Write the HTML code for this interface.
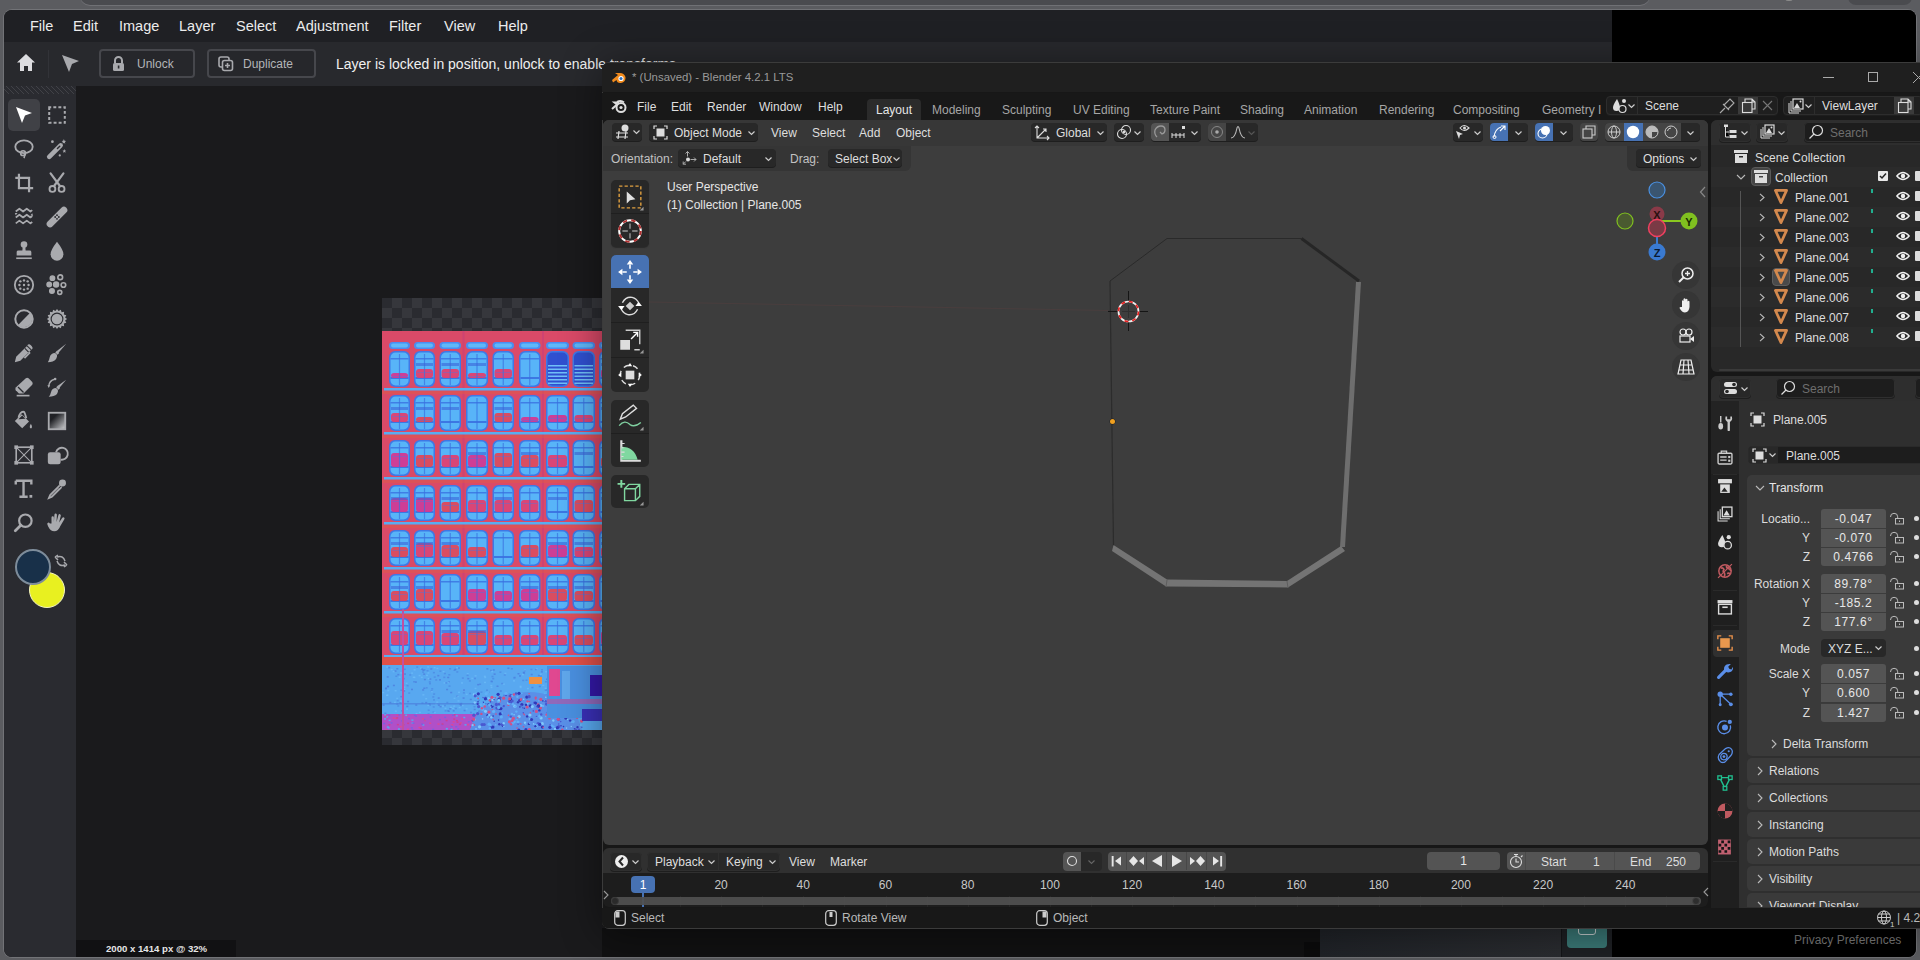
<!DOCTYPE html><html><head><meta charset="utf-8"><style>
*{margin:0;padding:0;box-sizing:border-box}
html,body{width:1920px;height:960px;overflow:hidden;background:#5b5c60;font-family:"Liberation Sans",sans-serif;}
.a{position:absolute}
.t{position:absolute;white-space:nowrap;line-height:1}
svg{position:absolute;overflow:visible}
#tab{left:80px;top:-10px;width:1570px;height:15px;background:#4a4b4f;border-radius:0 0 10px 10px;box-shadow:0 1px 0 #707175}
#tab2{left:1848px;top:-10px;width:64px;height:15px;background:#4a4b4f;border-radius:0 0 8px 8px}
#win{left:4px;top:10px;width:1912px;height:947px;background:#1a1a1c;border-radius:8px;overflow:hidden;box-shadow:0 0 0 1px #727377}
.mb{position:absolute;top:8.5px;font-size:14.5px;color:#ececec;line-height:1;letter-spacing:0}
.tb{position:absolute;border:2px solid #46474c;border-radius:4px;background:#26272b}
.ic{fill:#a8a9ad;stroke:none}
.is{fill:none;stroke:#a8a9ad;stroke-width:2}
.bt{font-size:12px;color:#dedede}
.btn{position:absolute;background:#282828;border-radius:4px;box-shadow:0 1px 0 #1e1e1e}
.chev{position:absolute}
.wt{position:absolute;top:103.5px;font-size:12px;color:#a6a6a6;white-space:nowrap;line-height:1}
.ol{position:absolute;font-size:12px;color:#dcdcdc;white-space:nowrap;line-height:1}
.pl{position:absolute;font-size:12px;color:#dcdcdc;white-space:nowrap;line-height:1}
.nf{position:absolute;background:#545454;border-radius:3px;font-size:12px;color:#e8e8e8;text-align:center;line-height:19px;height:19px}
.tn{position:absolute;top:879px;font-size:12px;color:#c8c8c8;white-space:nowrap;line-height:1}
</style></head><body>
<div id="tab" class="a"></div>
<div id="tab2" class="a"></div>
<div class="a" style="left:1785px;top:-5px;width:8px;height:6px;border-radius:4px;background:#8a8a8a"></div>
<div id="win" class="a">
  <div class="a" style="left:0;top:0;width:1912px;height:32px;background:#1f2024"></div>
  <span class="mb" style="left:26px">File</span>
  <span class="mb" style="left:69px">Edit</span>
  <span class="mb" style="left:115px">Image</span>
  <span class="mb" style="left:175px">Layer</span>
  <span class="mb" style="left:232px">Select</span>
  <span class="mb" style="left:292px">Adjustment</span>
  <span class="mb" style="left:385px">Filter</span>
  <span class="mb" style="left:440px">View</span>
  <span class="mb" style="left:494px">Help</span>
  <div class="a" style="left:0;top:32px;width:1608px;height:44px;background:#28292d"></div>
  <div class="a" style="left:0;top:76px;width:72px;height:871px;background:#2a2b30"></div>
  <div class="a" style="left:0;top:76px;width:72px;height:8px;background:repeating-linear-gradient(45deg,#2a2b30 0 2.85px,#414247 2.85px 3.54px)"></div>
  <div class="a" style="left:72px;top:76px;width:1536px;height:871px;background:#1a1a1c"></div>
  <div class="a" style="left:1608px;top:0;width:304px;height:52px;background:#000"></div>
  <div class="a" style="left:44px;top:40px;width:1px;height:28px;background:#323338"></div>
</div>
<!-- toolbar content in page coords -->
<svg style="left:0;top:0" width="1" height="1"></svg>
<svg style="left:17px;top:54px" width="18" height="18" viewBox="0 0 18 18"><path d="M9 0 L18 8.5 H15 V17 H11 V12 H7 V17 H3 V8.5 H0 Z" fill="#dcdcdf"/></svg>
<svg style="left:62px;top:55px" width="18" height="18" viewBox="0 0 18 18"><path d="M0 0 L17 6 L10 9 L7 17 Z" fill="#a8a9ad"/></svg>
<div class="tb" style="left:99px;top:49px;width:96px;height:29px"></div>
<svg style="left:112px;top:56px" width="13" height="15" viewBox="0 0 13 15"><path d="M3 7 V4.5 A3.5 3.5 0 0 1 10 4.5 V7" fill="none" stroke="#a8a9ad" stroke-width="2"/><rect x="1" y="7" width="11" height="8" rx="1.5" fill="#a8a9ad"/><rect x="5.8" y="9.5" width="1.6" height="3" fill="#28292d"/></svg>
<span class="t" style="left:137px;top:58px;font-size:12px;color:#b4b5b8">Unlock</span>
<div class="tb" style="left:207px;top:49px;width:109px;height:29px"></div>
<svg style="left:218px;top:56px" width="16" height="16" viewBox="0 0 16 16"><rect x="1" y="1" width="10" height="10" rx="2" fill="none" stroke="#a8a9ad" stroke-width="1.6"/><rect x="4.5" y="4.5" width="10" height="10" rx="2" fill="#28292d" stroke="#a8a9ad" stroke-width="1.6"/><path d="M9.5 7 V12 M7 9.5 H12" stroke="#a8a9ad" stroke-width="1.6"/></svg>
<span class="t" style="left:243px;top:58px;font-size:12px;color:#b4b5b8">Duplicate</span>
<span class="t" style="left:336px;top:57px;font-size:14px;color:#f0f0f0">Layer is locked in position, unlock to enable transforms</span>
<!-- tool panel -->
<div class="a" style="left:8px;top:99px;width:32px;height:32px;border-radius:5px;background:#404146"></div>
<svg style="left:15px;top:106px" width="18" height="18" viewBox="0 0 18 18"><path d="M1 1 L17 7 L10 9.5 L7 17 Z" fill="#ffffff"/></svg>
<!-- colors -->
<div class="a" style="left:29px;top:572px;width:36px;height:36px;border-radius:18px;background:#e8f020;border:1.5px solid #f4f4c0"></div>
<div class="a" style="left:15px;top:549px;width:36px;height:36px;border-radius:18px;background:#183049;border:2px solid #7d8c9a"></div>
<svg style="left:54px;top:553px" width="14" height="16" viewBox="0 0 14 16"><path d="M3 4 Q9 2 11 8 M1 4 L4 2 M1 4 L4 7 M11 12 Q5 14 3 8 M13 12 L10 14 M13 12 L10 9" fill="none" stroke="#a8a9ad" stroke-width="1.5"/></svg>
<!-- status -->
<div class="a" style="left:76px;top:940px;width:160px;height:17px;background:#111113"></div>
<span class="t" style="left:106px;top:944px;font-size:9.6px;color:#e6e6e6;font-weight:bold">2000 x 1414 px @ 32%</span>
<!-- image -->
<div id="img" class="a" style="left:382px;top:298px;width:230px;height:447px;overflow:hidden;background-color:#2a2b30;background-image:linear-gradient(45deg,#36373c 25%,transparent 25%,transparent 75%,#36373c 75%),linear-gradient(45deg,#36373c 25%,transparent 25%,transparent 75%,#36373c 75%);background-size:20px 20px;background-position:0 0,10px 10px"></div>
<!-- bottom below blender -->
<div class="a" style="left:602px;top:928px;width:718px;height:29px;background:#111112"></div>
<div class="a" style="left:1304px;top:942px;width:16px;height:15px;background:#0b0b0c"></div>
<div class="a" style="left:1320px;top:928px;width:241px;height:29px;background:linear-gradient(90deg,#202328,#2a2c30)"></div>
<div class="a" style="left:1561px;top:928px;width:51px;height:29px;background:#1e2024"></div>
<div class="a" style="left:1567px;top:920px;width:40px;height:28px;border-radius:4px;background:#3a7876"></div>
<div class="a" style="left:1578px;top:922px;width:18px;height:13px;border-radius:3px;border:1.5px solid #c8d0d0"></div>
<div class="a" style="left:1561px;top:928px;width:1px;height:29px;background:#141518"></div>
<div class="a" style="left:1612px;top:928px;width:304px;height:29px;background:#000;border-radius:0 0 8px 0"></div>
<span class="t" style="left:1794px;top:934px;font-size:12px;color:#7a7a7a">Privacy Preferences</span>

<svg style="left:46px;top:104px" width="22" height="22" viewBox="0 0 24 24"><rect x="3.5" y="3.5" width="17" height="17" fill="none" stroke="#a9aaae" stroke-width="2.2" stroke-dasharray="3.2 2.3" stroke-dashoffset="1"/></svg>
<svg style="left:13px;top:138px" width="22" height="22" viewBox="0 0 24 24"><ellipse cx="12" cy="9.5" rx="9.5" ry="7" fill="none" stroke="#a9aaae" stroke-width="2"/><circle cx="11" cy="16.5" r="2.6" fill="none" stroke="#a9aaae" stroke-width="1.8"/><path d="M12.5 17 Q13 20 12 22" stroke="#a9aaae" stroke-width="1.8" fill="none"/></svg>
<svg style="left:46px;top:138px" width="22" height="22" viewBox="0 0 24 24"><path d="M3.5 20.5 L16 8" stroke="#a9aaae" stroke-width="5" stroke-linecap="round"/><path d="M12.5 11.5 L15 9" stroke="#2a2b30" stroke-width="1.6" stroke-linecap="round"/><path d="M19.5 1 L20.2 3 L22 3.2 L20.6 4.3 L21 6.2 L19.5 5.2 L18 6.2 L18.4 4.3 L17 3.2 L18.8 3Z" fill="#a9aaae"/><path d="M20 12 L20.6 13.5 L22 13.6 L21 14.5 L21.3 16 L20 15.2 L18.7 16 L19 14.5 L18 13.6 L19.4 13.5Z" fill="#a9aaae"/><circle cx="7" cy="4" r="1.5" fill="#a9aaae"/><circle cx="15" cy="19" r="1.2" fill="#a9aaae"/></svg>
<svg style="left:13px;top:172px" width="22" height="22" viewBox="0 0 24 24"><path d="M6.5 2 V17.5 H22 M2.5 6.5 H17.5 V22" fill="none" stroke="#a9aaae" stroke-width="2.4"/></svg>
<svg style="left:46px;top:172px" width="22" height="22" viewBox="0 0 24 24"><path d="M5 1.5 L15 15 M19 1.5 L9 15" stroke="#a9aaae" stroke-width="2.4" stroke-linecap="round"/><circle cx="7" cy="18.5" r="3.2" fill="none" stroke="#a9aaae" stroke-width="2"/><circle cx="17" cy="18.5" r="3.2" fill="none" stroke="#a9aaae" stroke-width="2"/></svg>
<svg style="left:13px;top:206px" width="22" height="22" viewBox="0 0 24 24"><path d="M3 6 L7 3 L11 6 L15 3 L19 6 L21 4.5 M3 12.5 L7 9.5 L11 12.5 L15 9.5 L19 12.5 L21 11 M3 19 L7 16 L11 19 L15 16 L19 19 L21 17.5" fill="none" stroke="#a9aaae" stroke-width="1.9" stroke-linejoin="round"/><path d="M2 7.5 L5 7.5 L3 10Z M22 11 L19 10 L21 8Z" fill="#a9aaae"/></svg>
<svg style="left:46px;top:206px" width="22" height="22" viewBox="0 0 24 24"><path d="M4.5 19.5 L19.5 4.5" stroke="#a9aaae" stroke-width="7.5" stroke-linecap="round"/><circle cx="10" cy="12" r="1" fill="#2a2b30"/><circle cx="12" cy="10" r="1" fill="#2a2b30"/><circle cx="14" cy="12" r="1" fill="#2a2b30"/><circle cx="12" cy="14" r="1" fill="#2a2b30"/></svg>
<svg style="left:13px;top:240px" width="22" height="22" viewBox="0 0 24 24"><circle cx="12" cy="5" r="3.6" fill="#a9aaae"/><path d="M10.5 7 H13.5 L13.8 12 H10.2Z" fill="#a9aaae"/><path d="M4 13 Q4 11.5 6 11.5 H18 Q20 11.5 20 13 V17 H4Z" fill="#a9aaae"/><rect x="3.5" y="19" width="17" height="1.8" fill="#a9aaae"/></svg>
<svg style="left:46px;top:240px" width="22" height="22" viewBox="0 0 24 24"><path d="M12 2 Q19 11 19 15.5 A7 7 0 0 1 5 15.5 Q5 11 12 2Z" fill="#a9aaae"/></svg>
<svg style="left:13px;top:274px" width="22" height="22" viewBox="0 0 24 24"><circle cx="12" cy="12" r="10" fill="none" stroke="#a9aaae" stroke-width="2"/><circle cx="8" cy="8" r="1.3" fill="#a9aaae"/><circle cx="12" cy="7" r="1.3" fill="#a9aaae"/><circle cx="16" cy="8" r="1.3" fill="#a9aaae"/><circle cx="7" cy="12" r="1.3" fill="#a9aaae"/><circle cx="12" cy="12" r="1.3" fill="#a9aaae"/><circle cx="17" cy="12" r="1.3" fill="#a9aaae"/><circle cx="8" cy="16" r="1.3" fill="#a9aaae"/><circle cx="12" cy="17" r="1.3" fill="#a9aaae"/><circle cx="16" cy="16" r="1.3" fill="#a9aaae"/></svg>
<svg style="left:46px;top:274px" width="22" height="22" viewBox="0 0 24 24"><circle cx="7" cy="4.5" r="2.3" fill="#a9aaae" stroke="#a9aaae" stroke-width="1.8"/><circle cx="15.5" cy="3.5" r="2.6" fill="none" stroke="#a9aaae" stroke-width="1.8"/><circle cx="3.5" cy="11.5" r="2.3" fill="#a9aaae" stroke="#a9aaae" stroke-width="1.8"/><circle cx="11" cy="11.5" r="2.6" fill="#a9aaae" stroke="#a9aaae" stroke-width="1.8"/><circle cx="19" cy="12" r="2.5" fill="none" stroke="#a9aaae" stroke-width="1.8"/><circle cx="6.5" cy="18.5" r="2.4" fill="#a9aaae" stroke="#a9aaae" stroke-width="1.8"/><circle cx="15" cy="20" r="2.2" fill="none" stroke="#a9aaae" stroke-width="1.8"/></svg>
<svg style="left:13px;top:308px" width="22" height="22" viewBox="0 0 24 24"><circle cx="12" cy="12" r="9.5" fill="none" stroke="#a9aaae" stroke-width="2.2"/><path d="M5.3 18.7 L18.7 5.3 A9.5 9.5 0 0 1 5.3 18.7Z" fill="#a9aaae"/></svg>
<svg style="left:46px;top:308px" width="22" height="22" viewBox="0 0 24 24"><polygon points="23.00,12.00 20.83,13.76 22.16,16.21 19.48,17.00 19.78,19.78 17.00,19.48 16.21,22.16 13.76,20.83 12.00,23.00 10.24,20.83 7.79,22.16 7.00,19.48 4.22,19.78 4.52,17.00 1.84,16.21 3.17,13.76 1.00,12.00 3.17,10.24 1.84,7.79 4.52,7.00 4.22,4.22 7.00,4.52 7.79,1.84 10.24,3.17 12.00,1.00 13.76,3.17 16.21,1.84 17.00,4.52 19.78,4.22 19.48,7.00 22.16,7.79 20.83,10.24" fill="#a9aaae"/><circle cx="12" cy="12" r="7" fill="#2a2b30"/><circle cx="12" cy="12" r="5.8" fill="#a9aaae"/></svg>
<svg style="left:13px;top:342px" width="22" height="22" viewBox="0 0 24 24"><path d="M2 22 L3.5 16 L15 4.5 L19.5 9 L8 20.5Z" fill="#a9aaae"/><path d="M15.5 3.5 Q17.5 1.5 19.5 3.5 L20.5 4.5 Q22.5 6.5 20.5 8.5" fill="#a9aaae"/><path d="M14 8 L18 12 L12.5 17.5" stroke="#a9aaae" stroke-width="1.8" fill="none"/><path d="M13 7 L17 11" stroke="#2a2b30" stroke-width="1.2"/></svg>
<svg style="left:46px;top:342px" width="22" height="22" viewBox="0 0 24 24"><path d="M22 2 L13.5 12 L11.5 10 Z" fill="#a9aaae"/><path d="M11 10.5 L13.5 13" stroke="#a9aaae" stroke-width="2.5"/><path d="M10 12 Q5 12 4 17 Q3.5 20 2 22 Q8 22 11 18.5 Q12.5 16 12 14Z" fill="#a9aaae"/></svg>
<svg style="left:13px;top:376px" width="22" height="22" viewBox="0 0 24 24"><path d="M14 2.5 Q15.5 1.5 17 2.5 L21 6.5 Q22 8 21 9.5 L11.5 19 H6.5 L3 15.5 Q2 14 3 12.5Z" fill="#a9aaae"/><path d="M5.5 12 L11.5 18" stroke="#2a2b30" stroke-width="1.5"/><path d="M4 10.5 L13 19.5 H7 L3 15.5 Z" fill="#2a2b30" opacity="0"/><rect x="4" y="20.5" width="14" height="1.8" fill="#a9aaae"/></svg>
<svg style="left:46px;top:376px" width="22" height="22" viewBox="0 0 24 24"><path d="M22 4 L14.5 13 L12.5 11 Z" fill="#a9aaae"/><path d="M12 11.5 L14.5 14" stroke="#a9aaae" stroke-width="2.5"/><path d="M11 13 Q6.5 13 5.5 17.5 Q5 20.5 3 22.5 Q9 22.5 12 19.5 Q13.5 17 13 15Z" fill="#a9aaae"/><path d="M3 11 Q3.5 5 9.5 3.5" stroke="#a9aaae" stroke-width="1.5" fill="none"/><circle cx="10" cy="3.3" r="1.4" fill="#a9aaae"/><path d="M1.5 10 L4.5 10 L3 13Z" fill="#a9aaae"/></svg>
<svg style="left:13px;top:410px" width="22" height="22" viewBox="0 0 24 24"><path d="M2 12 L9.5 4.5 L17.5 12.5 L10 20 Z" fill="#a9aaae"/><path d="M6 8.5 Q8 1 12 2 Q13 3 14.5 9" stroke="#a9aaae" stroke-width="2" fill="none"/><path d="M6 10 L10 6 L13.5 9.5 Z" fill="#2a2b30"/><path d="M19.5 15 Q21.5 18 20.5 19.5 Q19.5 20.5 18.5 19.5 Q17.5 18 19.5 15Z" fill="#a9aaae"/></svg>
<svg style="left:46px;top:410px" width="22" height="22" viewBox="0 0 24 24"><defs><linearGradient id="grd" x1="0.3" y1="0.3" x2="1" y2="1"><stop offset="0" stop-color="#202125"/><stop offset="1" stop-color="#d0d1d4"/></linearGradient></defs><rect x="3" y="3" width="18" height="18" fill="url(#grd)" stroke="#a9aaae" stroke-width="2"/></svg>
<svg style="left:13px;top:444px" width="22" height="22" viewBox="0 0 24 24"><rect x="3.5" y="3.5" width="17" height="17" fill="none" stroke="#a9aaae" stroke-width="1.8"/><path d="M3.5 3.5 L20.5 20.5 M20.5 3.5 L3.5 20.5" stroke="#a9aaae" stroke-width="1.1"/><rect x="1.5" y="1.5" width="4" height="4" fill="#a9aaae"/><rect x="18.5" y="1.5" width="4" height="4" fill="#a9aaae"/><rect x="1.5" y="18.5" width="4" height="4" fill="#a9aaae"/><rect x="18.5" y="18.5" width="4" height="4" fill="#a9aaae"/></svg>
<svg style="left:46px;top:444px" width="22" height="22" viewBox="0 0 24 24"><rect x="2" y="9" width="14" height="13" rx="2.5" fill="#a9aaae"/><path d="M11 9 A6.5 6.5 0 1 1 16 17" fill="none" stroke="#a9aaae" stroke-width="2"/></svg>
<svg style="left:13px;top:478px" width="22" height="22" viewBox="0 0 24 24"><path d="M3 3 H20 V7 M3 3 V7 M11.5 3 V20 M7 20.5 H16" fill="none" stroke="#a9aaae" stroke-width="2.6"/><rect x="18" y="18.5" width="3" height="3" fill="#a9aaae"/></svg>
<svg style="left:46px;top:478px" width="22" height="22" viewBox="0 0 24 24"><circle cx="18" cy="5.5" r="3.8" fill="#a9aaae"/><path d="M15.5 6 L18 8.5" stroke="#a9aaae" stroke-width="3"/><path d="M15 8 L4.5 18.5 L3 22 L6.5 20.5 L17 10" fill="none" stroke="#a9aaae" stroke-width="1.8"/><path d="M13 10 L15 12 L6 21 L3.5 21.5 L4 19Z" fill="#a9aaae" opacity="0.5"/></svg>
<svg style="left:13px;top:512px" width="22" height="22" viewBox="0 0 24 24"><circle cx="13.5" cy="9.5" r="6.8" fill="none" stroke="#a9aaae" stroke-width="2.4"/><path d="M8.5 14.5 L2.5 20.5" stroke="#a9aaae" stroke-width="3" stroke-linecap="round"/></svg>
<svg style="left:46px;top:512px" width="22" height="22" viewBox="0 0 24 24"><path d="M6 12.5 V6 Q6 4.5 7.3 4.5 Q8.6 4.5 8.6 6 V11 L9.2 3 Q9.4 1.5 10.7 1.6 Q12 1.8 11.9 3.2 L11.5 11 L13.5 3.5 Q14 2 15.3 2.4 Q16.5 2.9 16.1 4.3 L14.3 11.5 L17.8 6.3 Q18.6 5.2 19.7 5.9 Q20.7 6.7 20 7.8 L15.5 15.5 Q13.5 21 9 21 Q5 21 2.5 16 L1.5 13.5 Q1 12 2.3 11.6 Q3.5 11.3 4.2 12.6Z" fill="#a9aaae"/></svg>
<svg style="left:382px;top:331px;overflow:hidden" width="220" height="399" viewBox="0 0 220 399">
<rect x="0" y="0" width="220" height="399" fill="#da4a68"/>
<rect x="80.5" y="0" width="2" height="326" fill="#c8407a" opacity="0.6"/>
<rect x="160" y="0" width="2" height="326" fill="#c8407a" opacity="0.6"/>
<rect x="2" y="57" width="220" height="2.5" fill="#58aef0"/>
<rect x="0" y="60" width="220" height="3" fill="#e05a48" opacity="0.5"/>
<rect x="2" y="101" width="220" height="2.5" fill="#58aef0"/>
<rect x="0" y="104" width="220" height="3" fill="#e05a48" opacity="0.5"/>
<rect x="2" y="146" width="220" height="2.5" fill="#58aef0"/>
<rect x="0" y="149" width="220" height="3" fill="#e05a48" opacity="0.5"/>
<rect x="2" y="191" width="220" height="2.5" fill="#58aef0"/>
<rect x="0" y="194" width="220" height="3" fill="#e05a48" opacity="0.5"/>
<rect x="2" y="236" width="220" height="2.5" fill="#58aef0"/>
<rect x="0" y="239" width="220" height="3" fill="#e05a48" opacity="0.5"/>
<rect x="2" y="280" width="220" height="2.5" fill="#58aef0"/>
<rect x="0" y="283" width="220" height="3" fill="#e05a48" opacity="0.5"/>
<rect x="2" y="324" width="220" height="2.5" fill="#58aef0"/>
<rect x="0" y="327" width="220" height="3" fill="#e05a48" opacity="0.5"/>
<rect x="7" y="11" width="21" height="7" rx="3.5" fill="#4a8ef0"/>
<rect x="9" y="12.5" width="17" height="4" rx="2" fill="#60b8f8"/>
<rect x="7" y="20" width="21" height="36" rx="6" fill="#3f78e6"/>
<rect x="8.5" y="21.5" width="18" height="33" rx="5" fill="#58b4f8"/>
<rect x="8.5" y="27" width="18" height="1.5" fill="#3a70e0" opacity="0.8"/>
<rect x="8.5" y="46" width="18" height="2" fill="#3a70e0" opacity="0.9"/>
<rect x="9" y="42" width="17" height="5" rx="3" fill="#d43890" opacity="0.95"/>
<rect x="10" y="45" width="15" height="1" fill="#4a78e0" opacity="0.4"/>
<rect x="16.9" y="23" width="1.2" height="31" fill="#3a70e0" opacity="0.7"/>
<rect x="32" y="11" width="21" height="7" rx="3.5" fill="#4a8ef0"/>
<rect x="34" y="12.5" width="17" height="4" rx="2" fill="#60b8f8"/>
<rect x="32" y="20" width="21" height="36" rx="6" fill="#3f78e6"/>
<rect x="33.5" y="21.5" width="18" height="33" rx="5" fill="#58b4f8"/>
<rect x="33.5" y="27" width="18" height="1.5" fill="#3a70e0" opacity="0.8"/>
<rect x="33.5" y="46" width="18" height="2" fill="#3a70e0" opacity="0.9"/>
<rect x="34" y="38" width="17" height="9" rx="3" fill="#e04070" opacity="0.95"/>
<rect x="35" y="41" width="15" height="1" fill="#4a78e0" opacity="0.4"/>
<rect x="41.9" y="23" width="1.2" height="31" fill="#3a70e0" opacity="0.7"/>
<rect x="34" y="32" width="17" height="3" fill="#3a64d8" opacity="0.6"/>
<rect x="57.5" y="11" width="21.5" height="7" rx="3.5" fill="#4a8ef0"/>
<rect x="59.5" y="12.5" width="17.5" height="4" rx="2" fill="#60b8f8"/>
<rect x="57.5" y="20" width="21.5" height="36" rx="6" fill="#3f78e6"/>
<rect x="59.0" y="21.5" width="18.5" height="33" rx="5" fill="#58b4f8"/>
<rect x="59.0" y="27" width="18.5" height="1.5" fill="#3a70e0" opacity="0.8"/>
<rect x="59.0" y="46" width="18.5" height="2" fill="#3a70e0" opacity="0.9"/>
<rect x="59.5" y="38" width="17.5" height="9" rx="3" fill="#e04070" opacity="0.95"/>
<rect x="60.5" y="41" width="15.5" height="1" fill="#4a78e0" opacity="0.4"/>
<rect x="67.65" y="23" width="1.2" height="31" fill="#3a70e0" opacity="0.7"/>
<rect x="59.5" y="32" width="17.5" height="3" fill="#3a64d8" opacity="0.6"/>
<rect x="84" y="11" width="22" height="7" rx="3.5" fill="#4a8ef0"/>
<rect x="86" y="12.5" width="18" height="4" rx="2" fill="#60b8f8"/>
<rect x="84" y="20" width="22" height="36" rx="6" fill="#3f78e6"/>
<rect x="85.5" y="21.5" width="19" height="33" rx="5" fill="#58b4f8"/>
<rect x="85.5" y="27" width="19" height="1.5" fill="#3a70e0" opacity="0.8"/>
<rect x="85.5" y="46" width="19" height="2" fill="#3a70e0" opacity="0.9"/>
<rect x="86" y="42" width="18" height="5" rx="3" fill="#e04070" opacity="0.95"/>
<rect x="87" y="45" width="16" height="1" fill="#4a78e0" opacity="0.4"/>
<rect x="94.4" y="23" width="1.2" height="31" fill="#3a70e0" opacity="0.7"/>
<rect x="86" y="32" width="18" height="3" fill="#3a64d8" opacity="0.6"/>
<rect x="110.5" y="11" width="21.5" height="7" rx="3.5" fill="#4a8ef0"/>
<rect x="112.5" y="12.5" width="17.5" height="4" rx="2" fill="#60b8f8"/>
<rect x="110.5" y="20" width="21.5" height="36" rx="6" fill="#3f78e6"/>
<rect x="112.0" y="21.5" width="18.5" height="33" rx="5" fill="#58b4f8"/>
<rect x="112.0" y="27" width="18.5" height="1.5" fill="#3a70e0" opacity="0.8"/>
<rect x="112.0" y="46" width="18.5" height="2" fill="#3a70e0" opacity="0.9"/>
<rect x="112.5" y="38" width="17.5" height="9" rx="3" fill="#e04070" opacity="0.95"/>
<rect x="113.5" y="41" width="15.5" height="1" fill="#4a78e0" opacity="0.4"/>
<rect x="120.65" y="23" width="1.2" height="31" fill="#3a70e0" opacity="0.7"/>
<rect x="137" y="11" width="21.5" height="7" rx="3.5" fill="#4a8ef0"/>
<rect x="139" y="12.5" width="17.5" height="4" rx="2" fill="#60b8f8"/>
<rect x="137" y="20" width="21.5" height="36" rx="6" fill="#3f78e6"/>
<rect x="138.5" y="21.5" width="18.5" height="33" rx="5" fill="#58b4f8"/>
<rect x="138.5" y="27" width="18.5" height="1.5" fill="#3a70e0" opacity="0.8"/>
<rect x="138.5" y="46" width="18.5" height="2" fill="#3a70e0" opacity="0.9"/>
<rect x="147.15" y="23" width="1.2" height="31" fill="#3a70e0" opacity="0.7"/>
<rect x="164" y="11" width="23" height="7" rx="3.5" fill="#4a8ef0"/>
<rect x="166" y="12.5" width="19" height="4" rx="2" fill="#60b8f8"/>
<rect x="164" y="20" width="23" height="36" rx="6" fill="#3f78e6"/>
<rect x="165.5" y="21.5" width="20" height="33" rx="5" fill="#3050d0"/>
<rect x="166" y="34.0" width="19" height="1.5" fill="#70c0f8"/>
<rect x="166" y="37.5" width="19" height="1.5" fill="#70c0f8"/>
<rect x="166" y="41.0" width="19" height="1.5" fill="#70c0f8"/>
<rect x="166" y="44.5" width="19" height="1.5" fill="#70c0f8"/>
<rect x="166" y="48.0" width="19" height="1.5" fill="#70c0f8"/>
<rect x="166" y="51.5" width="19" height="1.5" fill="#70c0f8"/>
<rect x="190.5" y="11" width="22.5" height="7" rx="3.5" fill="#4a8ef0"/>
<rect x="192.5" y="12.5" width="18.5" height="4" rx="2" fill="#60b8f8"/>
<rect x="190.5" y="20" width="22.5" height="36" rx="6" fill="#3f78e6"/>
<rect x="192.0" y="21.5" width="19.5" height="33" rx="5" fill="#3050d0"/>
<rect x="192.5" y="34.0" width="18.5" height="1.5" fill="#70c0f8"/>
<rect x="192.5" y="37.5" width="18.5" height="1.5" fill="#70c0f8"/>
<rect x="192.5" y="41.0" width="18.5" height="1.5" fill="#70c0f8"/>
<rect x="192.5" y="44.5" width="18.5" height="1.5" fill="#70c0f8"/>
<rect x="192.5" y="48.0" width="18.5" height="1.5" fill="#70c0f8"/>
<rect x="192.5" y="51.5" width="18.5" height="1.5" fill="#70c0f8"/>
<rect x="217" y="11" width="22" height="7" rx="3.5" fill="#4a8ef0"/>
<rect x="219" y="12.5" width="18" height="4" rx="2" fill="#60b8f8"/>
<rect x="217" y="20" width="22" height="36" rx="6" fill="#3f78e6"/>
<rect x="218.5" y="21.5" width="19" height="33" rx="5" fill="#58b4f8"/>
<rect x="218.5" y="27" width="19" height="1.5" fill="#3a70e0" opacity="0.8"/>
<rect x="218.5" y="46" width="19" height="2" fill="#3a70e0" opacity="0.9"/>
<rect x="219" y="38" width="18" height="9" rx="3" fill="#d43890" opacity="0.95"/>
<rect x="220" y="41" width="16" height="1" fill="#4a78e0" opacity="0.4"/>
<rect x="227.4" y="23" width="1.2" height="31" fill="#3a70e0" opacity="0.7"/>
<rect x="219" y="32" width="18" height="3" fill="#3a64d8" opacity="0.6"/>
<rect x="7" y="64" width="21" height="36" rx="6" fill="#3f78e6"/>
<rect x="8.5" y="65.5" width="18" height="33" rx="5" fill="#58b4f8"/>
<rect x="8.5" y="71" width="18" height="1.5" fill="#3a70e0" opacity="0.8"/>
<rect x="8.5" y="90" width="18" height="2" fill="#3a70e0" opacity="0.9"/>
<rect x="9" y="82" width="17" height="9" rx="3" fill="#e04070" opacity="0.95"/>
<rect x="10" y="85" width="15" height="1" fill="#4a78e0" opacity="0.4"/>
<rect x="16.9" y="67" width="1.2" height="31" fill="#3a70e0" opacity="0.7"/>
<rect x="9" y="76" width="17" height="3" fill="#3a64d8" opacity="0.6"/>
<rect x="32" y="64" width="21" height="36" rx="6" fill="#3f78e6"/>
<rect x="33.5" y="65.5" width="18" height="33" rx="5" fill="#58b4f8"/>
<rect x="33.5" y="71" width="18" height="1.5" fill="#3a70e0" opacity="0.8"/>
<rect x="33.5" y="90" width="18" height="2" fill="#3a70e0" opacity="0.9"/>
<rect x="34" y="86" width="17" height="5" rx="3" fill="#e04858" opacity="0.95"/>
<rect x="35" y="89" width="15" height="1" fill="#4a78e0" opacity="0.4"/>
<rect x="41.9" y="67" width="1.2" height="31" fill="#3a70e0" opacity="0.7"/>
<rect x="34" y="76" width="17" height="3" fill="#3a64d8" opacity="0.6"/>
<rect x="57.5" y="64" width="21.5" height="36" rx="6" fill="#3f78e6"/>
<rect x="59.0" y="65.5" width="18.5" height="33" rx="5" fill="#58b4f8"/>
<rect x="59.0" y="71" width="18.5" height="1.5" fill="#3a70e0" opacity="0.8"/>
<rect x="59.0" y="90" width="18.5" height="2" fill="#3a70e0" opacity="0.9"/>
<rect x="67.65" y="67" width="1.2" height="31" fill="#3a70e0" opacity="0.7"/>
<rect x="59.5" y="76" width="17.5" height="3" fill="#3a64d8" opacity="0.6"/>
<rect x="84" y="64" width="22" height="36" rx="6" fill="#3f78e6"/>
<rect x="85.5" y="65.5" width="19" height="33" rx="5" fill="#58b4f8"/>
<rect x="85.5" y="71" width="19" height="1.5" fill="#3a70e0" opacity="0.8"/>
<rect x="85.5" y="90" width="19" height="2" fill="#3a70e0" opacity="0.9"/>
<rect x="94.4" y="67" width="1.2" height="31" fill="#3a70e0" opacity="0.7"/>
<rect x="110.5" y="64" width="21.5" height="36" rx="6" fill="#3f78e6"/>
<rect x="112.0" y="65.5" width="18.5" height="33" rx="5" fill="#58b4f8"/>
<rect x="112.0" y="71" width="18.5" height="1.5" fill="#3a70e0" opacity="0.8"/>
<rect x="112.0" y="90" width="18.5" height="2" fill="#3a70e0" opacity="0.9"/>
<rect x="112.5" y="82" width="17.5" height="9" rx="3" fill="#e04858" opacity="0.95"/>
<rect x="113.5" y="85" width="15.5" height="1" fill="#4a78e0" opacity="0.4"/>
<rect x="120.65" y="67" width="1.2" height="31" fill="#3a70e0" opacity="0.7"/>
<rect x="112.5" y="76" width="17.5" height="3" fill="#3a64d8" opacity="0.6"/>
<rect x="137" y="64" width="21.5" height="36" rx="6" fill="#3f78e6"/>
<rect x="138.5" y="65.5" width="18.5" height="33" rx="5" fill="#58b4f8"/>
<rect x="138.5" y="71" width="18.5" height="1.5" fill="#3a70e0" opacity="0.8"/>
<rect x="138.5" y="90" width="18.5" height="2" fill="#3a70e0" opacity="0.9"/>
<rect x="139" y="86" width="17.5" height="5" rx="3" fill="#d43890" opacity="0.95"/>
<rect x="140" y="89" width="15.5" height="1" fill="#4a78e0" opacity="0.4"/>
<rect x="147.15" y="67" width="1.2" height="31" fill="#3a70e0" opacity="0.7"/>
<rect x="164" y="64" width="23" height="36" rx="6" fill="#3f78e6"/>
<rect x="165.5" y="65.5" width="20" height="33" rx="5" fill="#58b4f8"/>
<rect x="165.5" y="71" width="20" height="1.5" fill="#3a70e0" opacity="0.8"/>
<rect x="165.5" y="90" width="20" height="2" fill="#3a70e0" opacity="0.9"/>
<rect x="166" y="84" width="19" height="7" rx="3" fill="#d43890" opacity="0.95"/>
<rect x="167" y="87" width="17" height="1" fill="#4a78e0" opacity="0.4"/>
<rect x="174.9" y="67" width="1.2" height="31" fill="#3a70e0" opacity="0.7"/>
<rect x="190.5" y="64" width="22.5" height="36" rx="6" fill="#3f78e6"/>
<rect x="192.0" y="65.5" width="19.5" height="33" rx="5" fill="#58b4f8"/>
<rect x="192.0" y="71" width="19.5" height="1.5" fill="#3a70e0" opacity="0.8"/>
<rect x="192.0" y="90" width="19.5" height="2" fill="#3a70e0" opacity="0.9"/>
<rect x="192.5" y="84" width="18.5" height="7" rx="3" fill="#e04070" opacity="0.95"/>
<rect x="193.5" y="87" width="16.5" height="1" fill="#4a78e0" opacity="0.4"/>
<rect x="201.15" y="67" width="1.2" height="31" fill="#3a70e0" opacity="0.7"/>
<rect x="217" y="64" width="22" height="36" rx="6" fill="#3f78e6"/>
<rect x="218.5" y="65.5" width="19" height="33" rx="5" fill="#58b4f8"/>
<rect x="218.5" y="71" width="19" height="1.5" fill="#3a70e0" opacity="0.8"/>
<rect x="218.5" y="90" width="19" height="2" fill="#3a70e0" opacity="0.9"/>
<rect x="227.4" y="67" width="1.2" height="31" fill="#3a70e0" opacity="0.7"/>
<rect x="219" y="76" width="18" height="3" fill="#3a64d8" opacity="0.6"/>
<rect x="7" y="109" width="21" height="36" rx="6" fill="#3f78e6"/>
<rect x="8.5" y="110.5" width="18" height="33" rx="5" fill="#58b4f8"/>
<rect x="8.5" y="116" width="18" height="1.5" fill="#3a70e0" opacity="0.8"/>
<rect x="8.5" y="135" width="18" height="2" fill="#3a70e0" opacity="0.9"/>
<rect x="9" y="122" width="17" height="14" rx="3" fill="#d43890" opacity="0.95"/>
<rect x="10" y="125" width="15" height="1" fill="#4a78e0" opacity="0.4"/>
<rect x="16.9" y="112" width="1.2" height="31" fill="#3a70e0" opacity="0.7"/>
<rect x="32" y="109" width="21" height="36" rx="6" fill="#3f78e6"/>
<rect x="33.5" y="110.5" width="18" height="33" rx="5" fill="#58b4f8"/>
<rect x="33.5" y="116" width="18" height="1.5" fill="#3a70e0" opacity="0.8"/>
<rect x="33.5" y="135" width="18" height="2" fill="#3a70e0" opacity="0.9"/>
<rect x="34" y="124" width="17" height="12" rx="3" fill="#e04858" opacity="0.95"/>
<rect x="35" y="127" width="15" height="1" fill="#4a78e0" opacity="0.4"/>
<rect x="41.9" y="112" width="1.2" height="31" fill="#3a70e0" opacity="0.7"/>
<rect x="57.5" y="109" width="21.5" height="36" rx="6" fill="#3f78e6"/>
<rect x="59.0" y="110.5" width="18.5" height="33" rx="5" fill="#58b4f8"/>
<rect x="59.0" y="116" width="18.5" height="1.5" fill="#3a70e0" opacity="0.8"/>
<rect x="59.0" y="135" width="18.5" height="2" fill="#3a70e0" opacity="0.9"/>
<rect x="59.5" y="124" width="17.5" height="12" rx="3" fill="#e04070" opacity="0.95"/>
<rect x="60.5" y="127" width="15.5" height="1" fill="#4a78e0" opacity="0.4"/>
<rect x="67.65" y="112" width="1.2" height="31" fill="#3a70e0" opacity="0.7"/>
<rect x="84" y="109" width="22" height="36" rx="6" fill="#3f78e6"/>
<rect x="85.5" y="110.5" width="19" height="33" rx="5" fill="#58b4f8"/>
<rect x="85.5" y="116" width="19" height="1.5" fill="#3a70e0" opacity="0.8"/>
<rect x="85.5" y="135" width="19" height="2" fill="#3a70e0" opacity="0.9"/>
<rect x="86" y="124" width="18" height="12" rx="3" fill="#d43890" opacity="0.95"/>
<rect x="87" y="127" width="16" height="1" fill="#4a78e0" opacity="0.4"/>
<rect x="94.4" y="112" width="1.2" height="31" fill="#3a70e0" opacity="0.7"/>
<rect x="86" y="121" width="18" height="3" fill="#3a64d8" opacity="0.6"/>
<rect x="110.5" y="109" width="21.5" height="36" rx="6" fill="#3f78e6"/>
<rect x="112.0" y="110.5" width="18.5" height="33" rx="5" fill="#58b4f8"/>
<rect x="112.0" y="116" width="18.5" height="1.5" fill="#3a70e0" opacity="0.8"/>
<rect x="112.0" y="135" width="18.5" height="2" fill="#3a70e0" opacity="0.9"/>
<rect x="112.5" y="122" width="17.5" height="14" rx="3" fill="#e04858" opacity="0.95"/>
<rect x="113.5" y="125" width="15.5" height="1" fill="#4a78e0" opacity="0.4"/>
<rect x="120.65" y="112" width="1.2" height="31" fill="#3a70e0" opacity="0.7"/>
<rect x="137" y="109" width="21.5" height="36" rx="6" fill="#3f78e6"/>
<rect x="138.5" y="110.5" width="18.5" height="33" rx="5" fill="#58b4f8"/>
<rect x="138.5" y="116" width="18.5" height="1.5" fill="#3a70e0" opacity="0.8"/>
<rect x="138.5" y="135" width="18.5" height="2" fill="#3a70e0" opacity="0.9"/>
<rect x="139" y="124" width="17.5" height="12" rx="3" fill="#e04858" opacity="0.95"/>
<rect x="140" y="127" width="15.5" height="1" fill="#4a78e0" opacity="0.4"/>
<rect x="147.15" y="112" width="1.2" height="31" fill="#3a70e0" opacity="0.7"/>
<rect x="139" y="121" width="17.5" height="3" fill="#3a64d8" opacity="0.6"/>
<rect x="164" y="109" width="23" height="36" rx="6" fill="#3f78e6"/>
<rect x="165.5" y="110.5" width="20" height="33" rx="5" fill="#58b4f8"/>
<rect x="165.5" y="116" width="20" height="1.5" fill="#3a70e0" opacity="0.8"/>
<rect x="165.5" y="135" width="20" height="2" fill="#3a70e0" opacity="0.9"/>
<rect x="166" y="124" width="19" height="12" rx="3" fill="#e04070" opacity="0.95"/>
<rect x="167" y="127" width="17" height="1" fill="#4a78e0" opacity="0.4"/>
<rect x="174.9" y="112" width="1.2" height="31" fill="#3a70e0" opacity="0.7"/>
<rect x="190.5" y="109" width="22.5" height="36" rx="6" fill="#3f78e6"/>
<rect x="192.0" y="110.5" width="19.5" height="33" rx="5" fill="#58b4f8"/>
<rect x="192.0" y="116" width="19.5" height="1.5" fill="#3a70e0" opacity="0.8"/>
<rect x="192.0" y="135" width="19.5" height="2" fill="#3a70e0" opacity="0.9"/>
<rect x="201.15" y="112" width="1.2" height="31" fill="#3a70e0" opacity="0.7"/>
<rect x="192.5" y="121" width="18.5" height="3" fill="#3a64d8" opacity="0.6"/>
<rect x="217" y="109" width="22" height="36" rx="6" fill="#3f78e6"/>
<rect x="218.5" y="110.5" width="19" height="33" rx="5" fill="#58b4f8"/>
<rect x="218.5" y="116" width="19" height="1.5" fill="#3a70e0" opacity="0.8"/>
<rect x="218.5" y="135" width="19" height="2" fill="#3a70e0" opacity="0.9"/>
<rect x="219" y="126" width="18" height="10" rx="3" fill="#e04858" opacity="0.95"/>
<rect x="220" y="129" width="16" height="1" fill="#4a78e0" opacity="0.4"/>
<rect x="227.4" y="112" width="1.2" height="31" fill="#3a70e0" opacity="0.7"/>
<rect x="7" y="154" width="21" height="36" rx="6" fill="#3f78e6"/>
<rect x="8.5" y="155.5" width="18" height="33" rx="5" fill="#58b4f8"/>
<rect x="8.5" y="161" width="18" height="1.5" fill="#3a70e0" opacity="0.8"/>
<rect x="8.5" y="180" width="18" height="2" fill="#3a70e0" opacity="0.9"/>
<rect x="9" y="167" width="17" height="14" rx="3" fill="#d43890" opacity="0.95"/>
<rect x="10" y="170" width="15" height="1" fill="#4a78e0" opacity="0.4"/>
<rect x="16.9" y="157" width="1.2" height="31" fill="#3a70e0" opacity="0.7"/>
<rect x="9" y="166" width="17" height="3" fill="#3a64d8" opacity="0.6"/>
<rect x="32" y="154" width="21" height="36" rx="6" fill="#3f78e6"/>
<rect x="33.5" y="155.5" width="18" height="33" rx="5" fill="#58b4f8"/>
<rect x="33.5" y="161" width="18" height="1.5" fill="#3a70e0" opacity="0.8"/>
<rect x="33.5" y="180" width="18" height="2" fill="#3a70e0" opacity="0.9"/>
<rect x="34" y="167" width="17" height="14" rx="3" fill="#d43890" opacity="0.95"/>
<rect x="35" y="170" width="15" height="1" fill="#4a78e0" opacity="0.4"/>
<rect x="41.9" y="157" width="1.2" height="31" fill="#3a70e0" opacity="0.7"/>
<rect x="34" y="166" width="17" height="3" fill="#3a64d8" opacity="0.6"/>
<rect x="57.5" y="154" width="21.5" height="36" rx="6" fill="#3f78e6"/>
<rect x="59.0" y="155.5" width="18.5" height="33" rx="5" fill="#58b4f8"/>
<rect x="59.0" y="161" width="18.5" height="1.5" fill="#3a70e0" opacity="0.8"/>
<rect x="59.0" y="180" width="18.5" height="2" fill="#3a70e0" opacity="0.9"/>
<rect x="59.5" y="171" width="17.5" height="10" rx="3" fill="#e04858" opacity="0.95"/>
<rect x="60.5" y="174" width="15.5" height="1" fill="#4a78e0" opacity="0.4"/>
<rect x="67.65" y="157" width="1.2" height="31" fill="#3a70e0" opacity="0.7"/>
<rect x="59.5" y="166" width="17.5" height="3" fill="#3a64d8" opacity="0.6"/>
<rect x="84" y="154" width="22" height="36" rx="6" fill="#3f78e6"/>
<rect x="85.5" y="155.5" width="19" height="33" rx="5" fill="#58b4f8"/>
<rect x="85.5" y="161" width="19" height="1.5" fill="#3a70e0" opacity="0.8"/>
<rect x="85.5" y="180" width="19" height="2" fill="#3a70e0" opacity="0.9"/>
<rect x="86" y="169" width="18" height="12" rx="3" fill="#e04070" opacity="0.95"/>
<rect x="87" y="172" width="16" height="1" fill="#4a78e0" opacity="0.4"/>
<rect x="94.4" y="157" width="1.2" height="31" fill="#3a70e0" opacity="0.7"/>
<rect x="110.5" y="154" width="21.5" height="36" rx="6" fill="#3f78e6"/>
<rect x="112.0" y="155.5" width="18.5" height="33" rx="5" fill="#58b4f8"/>
<rect x="112.0" y="161" width="18.5" height="1.5" fill="#3a70e0" opacity="0.8"/>
<rect x="112.0" y="180" width="18.5" height="2" fill="#3a70e0" opacity="0.9"/>
<rect x="112.5" y="169" width="17.5" height="12" rx="3" fill="#e04070" opacity="0.95"/>
<rect x="113.5" y="172" width="15.5" height="1" fill="#4a78e0" opacity="0.4"/>
<rect x="120.65" y="157" width="1.2" height="31" fill="#3a70e0" opacity="0.7"/>
<rect x="112.5" y="166" width="17.5" height="3" fill="#3a64d8" opacity="0.6"/>
<rect x="137" y="154" width="21.5" height="36" rx="6" fill="#3f78e6"/>
<rect x="138.5" y="155.5" width="18.5" height="33" rx="5" fill="#58b4f8"/>
<rect x="138.5" y="161" width="18.5" height="1.5" fill="#3a70e0" opacity="0.8"/>
<rect x="138.5" y="180" width="18.5" height="2" fill="#3a70e0" opacity="0.9"/>
<rect x="139" y="169" width="17.5" height="12" rx="3" fill="#e04070" opacity="0.95"/>
<rect x="140" y="172" width="15.5" height="1" fill="#4a78e0" opacity="0.4"/>
<rect x="147.15" y="157" width="1.2" height="31" fill="#3a70e0" opacity="0.7"/>
<rect x="164" y="154" width="23" height="36" rx="6" fill="#3f78e6"/>
<rect x="165.5" y="155.5" width="20" height="33" rx="5" fill="#58b4f8"/>
<rect x="165.5" y="161" width="20" height="1.5" fill="#3a70e0" opacity="0.8"/>
<rect x="165.5" y="180" width="20" height="2" fill="#3a70e0" opacity="0.9"/>
<rect x="174.9" y="157" width="1.2" height="31" fill="#3a70e0" opacity="0.7"/>
<rect x="166" y="166" width="19" height="3" fill="#3a64d8" opacity="0.6"/>
<rect x="190.5" y="154" width="22.5" height="36" rx="6" fill="#3f78e6"/>
<rect x="192.0" y="155.5" width="19.5" height="33" rx="5" fill="#58b4f8"/>
<rect x="192.0" y="161" width="19.5" height="1.5" fill="#3a70e0" opacity="0.8"/>
<rect x="192.0" y="180" width="19.5" height="2" fill="#3a70e0" opacity="0.9"/>
<rect x="192.5" y="169" width="18.5" height="12" rx="3" fill="#e04858" opacity="0.95"/>
<rect x="193.5" y="172" width="16.5" height="1" fill="#4a78e0" opacity="0.4"/>
<rect x="201.15" y="157" width="1.2" height="31" fill="#3a70e0" opacity="0.7"/>
<rect x="217" y="154" width="22" height="36" rx="6" fill="#3f78e6"/>
<rect x="218.5" y="155.5" width="19" height="33" rx="5" fill="#58b4f8"/>
<rect x="218.5" y="161" width="19" height="1.5" fill="#3a70e0" opacity="0.8"/>
<rect x="218.5" y="180" width="19" height="2" fill="#3a70e0" opacity="0.9"/>
<rect x="227.4" y="157" width="1.2" height="31" fill="#3a70e0" opacity="0.7"/>
<rect x="219" y="166" width="18" height="3" fill="#3a64d8" opacity="0.6"/>
<rect x="7" y="199" width="21" height="36" rx="6" fill="#3f78e6"/>
<rect x="8.5" y="200.5" width="18" height="33" rx="5" fill="#58b4f8"/>
<rect x="8.5" y="206" width="18" height="1.5" fill="#3a70e0" opacity="0.8"/>
<rect x="8.5" y="225" width="18" height="2" fill="#3a70e0" opacity="0.9"/>
<rect x="9" y="216" width="17" height="10" rx="3" fill="#e04858" opacity="0.95"/>
<rect x="10" y="219" width="15" height="1" fill="#4a78e0" opacity="0.4"/>
<rect x="16.9" y="202" width="1.2" height="31" fill="#3a70e0" opacity="0.7"/>
<rect x="9" y="211" width="17" height="3" fill="#3a64d8" opacity="0.6"/>
<rect x="32" y="199" width="21" height="36" rx="6" fill="#3f78e6"/>
<rect x="33.5" y="200.5" width="18" height="33" rx="5" fill="#58b4f8"/>
<rect x="33.5" y="206" width="18" height="1.5" fill="#3a70e0" opacity="0.8"/>
<rect x="33.5" y="225" width="18" height="2" fill="#3a70e0" opacity="0.9"/>
<rect x="34" y="212" width="17" height="14" rx="3" fill="#e04070" opacity="0.95"/>
<rect x="35" y="215" width="15" height="1" fill="#4a78e0" opacity="0.4"/>
<rect x="41.9" y="202" width="1.2" height="31" fill="#3a70e0" opacity="0.7"/>
<rect x="34" y="211" width="17" height="3" fill="#3a64d8" opacity="0.6"/>
<rect x="57.5" y="199" width="21.5" height="36" rx="6" fill="#3f78e6"/>
<rect x="59.0" y="200.5" width="18.5" height="33" rx="5" fill="#58b4f8"/>
<rect x="59.0" y="206" width="18.5" height="1.5" fill="#3a70e0" opacity="0.8"/>
<rect x="59.0" y="225" width="18.5" height="2" fill="#3a70e0" opacity="0.9"/>
<rect x="59.5" y="214" width="17.5" height="12" rx="3" fill="#e04858" opacity="0.95"/>
<rect x="60.5" y="217" width="15.5" height="1" fill="#4a78e0" opacity="0.4"/>
<rect x="67.65" y="202" width="1.2" height="31" fill="#3a70e0" opacity="0.7"/>
<rect x="59.5" y="211" width="17.5" height="3" fill="#3a64d8" opacity="0.6"/>
<rect x="84" y="199" width="22" height="36" rx="6" fill="#3f78e6"/>
<rect x="85.5" y="200.5" width="19" height="33" rx="5" fill="#58b4f8"/>
<rect x="85.5" y="206" width="19" height="1.5" fill="#3a70e0" opacity="0.8"/>
<rect x="85.5" y="225" width="19" height="2" fill="#3a70e0" opacity="0.9"/>
<rect x="86" y="216" width="18" height="10" rx="3" fill="#e04858" opacity="0.95"/>
<rect x="87" y="219" width="16" height="1" fill="#4a78e0" opacity="0.4"/>
<rect x="94.4" y="202" width="1.2" height="31" fill="#3a70e0" opacity="0.7"/>
<rect x="110.5" y="199" width="21.5" height="36" rx="6" fill="#3f78e6"/>
<rect x="112.0" y="200.5" width="18.5" height="33" rx="5" fill="#58b4f8"/>
<rect x="112.0" y="206" width="18.5" height="1.5" fill="#3a70e0" opacity="0.8"/>
<rect x="112.0" y="225" width="18.5" height="2" fill="#3a70e0" opacity="0.9"/>
<rect x="120.65" y="202" width="1.2" height="31" fill="#3a70e0" opacity="0.7"/>
<rect x="137" y="199" width="21.5" height="36" rx="6" fill="#3f78e6"/>
<rect x="138.5" y="200.5" width="18.5" height="33" rx="5" fill="#58b4f8"/>
<rect x="138.5" y="206" width="18.5" height="1.5" fill="#3a70e0" opacity="0.8"/>
<rect x="138.5" y="225" width="18.5" height="2" fill="#3a70e0" opacity="0.9"/>
<rect x="139" y="214" width="17.5" height="12" rx="3" fill="#e04858" opacity="0.95"/>
<rect x="140" y="217" width="15.5" height="1" fill="#4a78e0" opacity="0.4"/>
<rect x="147.15" y="202" width="1.2" height="31" fill="#3a70e0" opacity="0.7"/>
<rect x="164" y="199" width="23" height="36" rx="6" fill="#3f78e6"/>
<rect x="165.5" y="200.5" width="20" height="33" rx="5" fill="#58b4f8"/>
<rect x="165.5" y="206" width="20" height="1.5" fill="#3a70e0" opacity="0.8"/>
<rect x="165.5" y="225" width="20" height="2" fill="#3a70e0" opacity="0.9"/>
<rect x="166" y="214" width="19" height="12" rx="3" fill="#d43890" opacity="0.95"/>
<rect x="167" y="217" width="17" height="1" fill="#4a78e0" opacity="0.4"/>
<rect x="174.9" y="202" width="1.2" height="31" fill="#3a70e0" opacity="0.7"/>
<rect x="166" y="211" width="19" height="3" fill="#3a64d8" opacity="0.6"/>
<rect x="190.5" y="199" width="22.5" height="36" rx="6" fill="#3f78e6"/>
<rect x="192.0" y="200.5" width="19.5" height="33" rx="5" fill="#58b4f8"/>
<rect x="192.0" y="206" width="19.5" height="1.5" fill="#3a70e0" opacity="0.8"/>
<rect x="192.0" y="225" width="19.5" height="2" fill="#3a70e0" opacity="0.9"/>
<rect x="192.5" y="216" width="18.5" height="10" rx="3" fill="#e04070" opacity="0.95"/>
<rect x="193.5" y="219" width="16.5" height="1" fill="#4a78e0" opacity="0.4"/>
<rect x="201.15" y="202" width="1.2" height="31" fill="#3a70e0" opacity="0.7"/>
<rect x="192.5" y="211" width="18.5" height="3" fill="#3a64d8" opacity="0.6"/>
<rect x="217" y="199" width="22" height="36" rx="6" fill="#3f78e6"/>
<rect x="218.5" y="200.5" width="19" height="33" rx="5" fill="#58b4f8"/>
<rect x="218.5" y="206" width="19" height="1.5" fill="#3a70e0" opacity="0.8"/>
<rect x="218.5" y="225" width="19" height="2" fill="#3a70e0" opacity="0.9"/>
<rect x="219" y="216" width="18" height="10" rx="3" fill="#e04070" opacity="0.95"/>
<rect x="220" y="219" width="16" height="1" fill="#4a78e0" opacity="0.4"/>
<rect x="227.4" y="202" width="1.2" height="31" fill="#3a70e0" opacity="0.7"/>
<rect x="219" y="211" width="18" height="3" fill="#3a64d8" opacity="0.6"/>
<rect x="7" y="243" width="21" height="36" rx="6" fill="#3f78e6"/>
<rect x="8.5" y="244.5" width="18" height="33" rx="5" fill="#58b4f8"/>
<rect x="8.5" y="250" width="18" height="1.5" fill="#3a70e0" opacity="0.8"/>
<rect x="8.5" y="269" width="18" height="2" fill="#3a70e0" opacity="0.9"/>
<rect x="9" y="260" width="17" height="10" rx="3" fill="#e04858" opacity="0.95"/>
<rect x="10" y="263" width="15" height="1" fill="#4a78e0" opacity="0.4"/>
<rect x="16.9" y="246" width="1.2" height="31" fill="#3a70e0" opacity="0.7"/>
<rect x="9" y="255" width="17" height="3" fill="#3a64d8" opacity="0.6"/>
<rect x="32" y="243" width="21" height="36" rx="6" fill="#3f78e6"/>
<rect x="33.5" y="244.5" width="18" height="33" rx="5" fill="#58b4f8"/>
<rect x="33.5" y="250" width="18" height="1.5" fill="#3a70e0" opacity="0.8"/>
<rect x="33.5" y="269" width="18" height="2" fill="#3a70e0" opacity="0.9"/>
<rect x="34" y="258" width="17" height="12" rx="3" fill="#e04858" opacity="0.95"/>
<rect x="35" y="261" width="15" height="1" fill="#4a78e0" opacity="0.4"/>
<rect x="41.9" y="246" width="1.2" height="31" fill="#3a70e0" opacity="0.7"/>
<rect x="34" y="255" width="17" height="3" fill="#3a64d8" opacity="0.6"/>
<rect x="57.5" y="243" width="21.5" height="36" rx="6" fill="#3f78e6"/>
<rect x="59.0" y="244.5" width="18.5" height="33" rx="5" fill="#58b4f8"/>
<rect x="59.0" y="250" width="18.5" height="1.5" fill="#3a70e0" opacity="0.8"/>
<rect x="59.0" y="269" width="18.5" height="2" fill="#3a70e0" opacity="0.9"/>
<rect x="67.65" y="246" width="1.2" height="31" fill="#3a70e0" opacity="0.7"/>
<rect x="84" y="243" width="22" height="36" rx="6" fill="#3f78e6"/>
<rect x="85.5" y="244.5" width="19" height="33" rx="5" fill="#58b4f8"/>
<rect x="85.5" y="250" width="19" height="1.5" fill="#3a70e0" opacity="0.8"/>
<rect x="85.5" y="269" width="19" height="2" fill="#3a70e0" opacity="0.9"/>
<rect x="86" y="258" width="18" height="12" rx="3" fill="#d43890" opacity="0.95"/>
<rect x="87" y="261" width="16" height="1" fill="#4a78e0" opacity="0.4"/>
<rect x="94.4" y="246" width="1.2" height="31" fill="#3a70e0" opacity="0.7"/>
<rect x="110.5" y="243" width="21.5" height="36" rx="6" fill="#3f78e6"/>
<rect x="112.0" y="244.5" width="18.5" height="33" rx="5" fill="#58b4f8"/>
<rect x="112.0" y="250" width="18.5" height="1.5" fill="#3a70e0" opacity="0.8"/>
<rect x="112.0" y="269" width="18.5" height="2" fill="#3a70e0" opacity="0.9"/>
<rect x="112.5" y="260" width="17.5" height="10" rx="3" fill="#d43890" opacity="0.95"/>
<rect x="113.5" y="263" width="15.5" height="1" fill="#4a78e0" opacity="0.4"/>
<rect x="120.65" y="246" width="1.2" height="31" fill="#3a70e0" opacity="0.7"/>
<rect x="137" y="243" width="21.5" height="36" rx="6" fill="#3f78e6"/>
<rect x="138.5" y="244.5" width="18.5" height="33" rx="5" fill="#58b4f8"/>
<rect x="138.5" y="250" width="18.5" height="1.5" fill="#3a70e0" opacity="0.8"/>
<rect x="138.5" y="269" width="18.5" height="2" fill="#3a70e0" opacity="0.9"/>
<rect x="139" y="258" width="17.5" height="12" rx="3" fill="#d43890" opacity="0.95"/>
<rect x="140" y="261" width="15.5" height="1" fill="#4a78e0" opacity="0.4"/>
<rect x="147.15" y="246" width="1.2" height="31" fill="#3a70e0" opacity="0.7"/>
<rect x="139" y="255" width="17.5" height="3" fill="#3a64d8" opacity="0.6"/>
<rect x="164" y="243" width="23" height="36" rx="6" fill="#3f78e6"/>
<rect x="165.5" y="244.5" width="20" height="33" rx="5" fill="#58b4f8"/>
<rect x="165.5" y="250" width="20" height="1.5" fill="#3a70e0" opacity="0.8"/>
<rect x="165.5" y="269" width="20" height="2" fill="#3a70e0" opacity="0.9"/>
<rect x="166" y="258" width="19" height="12" rx="3" fill="#e04858" opacity="0.95"/>
<rect x="167" y="261" width="17" height="1" fill="#4a78e0" opacity="0.4"/>
<rect x="174.9" y="246" width="1.2" height="31" fill="#3a70e0" opacity="0.7"/>
<rect x="166" y="255" width="19" height="3" fill="#3a64d8" opacity="0.6"/>
<rect x="190.5" y="243" width="22.5" height="36" rx="6" fill="#3f78e6"/>
<rect x="192.0" y="244.5" width="19.5" height="33" rx="5" fill="#58b4f8"/>
<rect x="192.0" y="250" width="19.5" height="1.5" fill="#3a70e0" opacity="0.8"/>
<rect x="192.0" y="269" width="19.5" height="2" fill="#3a70e0" opacity="0.9"/>
<rect x="192.5" y="260" width="18.5" height="10" rx="3" fill="#e04858" opacity="0.95"/>
<rect x="193.5" y="263" width="16.5" height="1" fill="#4a78e0" opacity="0.4"/>
<rect x="201.15" y="246" width="1.2" height="31" fill="#3a70e0" opacity="0.7"/>
<rect x="192.5" y="255" width="18.5" height="3" fill="#3a64d8" opacity="0.6"/>
<rect x="217" y="243" width="22" height="36" rx="6" fill="#3f78e6"/>
<rect x="218.5" y="244.5" width="19" height="33" rx="5" fill="#58b4f8"/>
<rect x="218.5" y="250" width="19" height="1.5" fill="#3a70e0" opacity="0.8"/>
<rect x="218.5" y="269" width="19" height="2" fill="#3a70e0" opacity="0.9"/>
<rect x="227.4" y="246" width="1.2" height="31" fill="#3a70e0" opacity="0.7"/>
<rect x="7" y="287" width="21" height="36" rx="6" fill="#3f78e6"/>
<rect x="8.5" y="288.5" width="18" height="33" rx="5" fill="#58b4f8"/>
<rect x="8.5" y="294" width="18" height="1.5" fill="#3a70e0" opacity="0.8"/>
<rect x="8.5" y="313" width="18" height="2" fill="#3a70e0" opacity="0.9"/>
<rect x="9" y="300" width="17" height="14" rx="3" fill="#e04070" opacity="0.95"/>
<rect x="10" y="303" width="15" height="1" fill="#4a78e0" opacity="0.4"/>
<rect x="16.9" y="290" width="1.2" height="31" fill="#3a70e0" opacity="0.7"/>
<rect x="32" y="287" width="21" height="36" rx="6" fill="#3f78e6"/>
<rect x="33.5" y="288.5" width="18" height="33" rx="5" fill="#58b4f8"/>
<rect x="33.5" y="294" width="18" height="1.5" fill="#3a70e0" opacity="0.8"/>
<rect x="33.5" y="313" width="18" height="2" fill="#3a70e0" opacity="0.9"/>
<rect x="34" y="300" width="17" height="14" rx="3" fill="#e04070" opacity="0.95"/>
<rect x="35" y="303" width="15" height="1" fill="#4a78e0" opacity="0.4"/>
<rect x="41.9" y="290" width="1.2" height="31" fill="#3a70e0" opacity="0.7"/>
<rect x="57.5" y="287" width="21.5" height="36" rx="6" fill="#3f78e6"/>
<rect x="59.0" y="288.5" width="18.5" height="33" rx="5" fill="#58b4f8"/>
<rect x="59.0" y="294" width="18.5" height="1.5" fill="#3a70e0" opacity="0.8"/>
<rect x="59.0" y="313" width="18.5" height="2" fill="#3a70e0" opacity="0.9"/>
<rect x="59.5" y="302" width="17.5" height="12" rx="3" fill="#e04070" opacity="0.95"/>
<rect x="60.5" y="305" width="15.5" height="1" fill="#4a78e0" opacity="0.4"/>
<rect x="67.65" y="290" width="1.2" height="31" fill="#3a70e0" opacity="0.7"/>
<rect x="59.5" y="299" width="17.5" height="3" fill="#3a64d8" opacity="0.6"/>
<rect x="84" y="287" width="22" height="36" rx="6" fill="#3f78e6"/>
<rect x="85.5" y="288.5" width="19" height="33" rx="5" fill="#58b4f8"/>
<rect x="85.5" y="294" width="19" height="1.5" fill="#3a70e0" opacity="0.8"/>
<rect x="85.5" y="313" width="19" height="2" fill="#3a70e0" opacity="0.9"/>
<rect x="86" y="300" width="18" height="14" rx="3" fill="#e04858" opacity="0.95"/>
<rect x="87" y="303" width="16" height="1" fill="#4a78e0" opacity="0.4"/>
<rect x="94.4" y="290" width="1.2" height="31" fill="#3a70e0" opacity="0.7"/>
<rect x="86" y="299" width="18" height="3" fill="#3a64d8" opacity="0.6"/>
<rect x="110.5" y="287" width="21.5" height="36" rx="6" fill="#3f78e6"/>
<rect x="112.0" y="288.5" width="18.5" height="33" rx="5" fill="#58b4f8"/>
<rect x="112.0" y="294" width="18.5" height="1.5" fill="#3a70e0" opacity="0.8"/>
<rect x="112.0" y="313" width="18.5" height="2" fill="#3a70e0" opacity="0.9"/>
<rect x="112.5" y="304" width="17.5" height="10" rx="3" fill="#e04070" opacity="0.95"/>
<rect x="113.5" y="307" width="15.5" height="1" fill="#4a78e0" opacity="0.4"/>
<rect x="120.65" y="290" width="1.2" height="31" fill="#3a70e0" opacity="0.7"/>
<rect x="137" y="287" width="21.5" height="36" rx="6" fill="#3f78e6"/>
<rect x="138.5" y="288.5" width="18.5" height="33" rx="5" fill="#58b4f8"/>
<rect x="138.5" y="294" width="18.5" height="1.5" fill="#3a70e0" opacity="0.8"/>
<rect x="138.5" y="313" width="18.5" height="2" fill="#3a70e0" opacity="0.9"/>
<rect x="139" y="304" width="17.5" height="10" rx="3" fill="#e04070" opacity="0.95"/>
<rect x="140" y="307" width="15.5" height="1" fill="#4a78e0" opacity="0.4"/>
<rect x="147.15" y="290" width="1.2" height="31" fill="#3a70e0" opacity="0.7"/>
<rect x="164" y="287" width="23" height="36" rx="6" fill="#3f78e6"/>
<rect x="165.5" y="288.5" width="20" height="33" rx="5" fill="#58b4f8"/>
<rect x="165.5" y="294" width="20" height="1.5" fill="#3a70e0" opacity="0.8"/>
<rect x="165.5" y="313" width="20" height="2" fill="#3a70e0" opacity="0.9"/>
<rect x="166" y="304" width="19" height="10" rx="3" fill="#e04070" opacity="0.95"/>
<rect x="167" y="307" width="17" height="1" fill="#4a78e0" opacity="0.4"/>
<rect x="174.9" y="290" width="1.2" height="31" fill="#3a70e0" opacity="0.7"/>
<rect x="190.5" y="287" width="22.5" height="36" rx="6" fill="#3f78e6"/>
<rect x="192.0" y="288.5" width="19.5" height="33" rx="5" fill="#58b4f8"/>
<rect x="192.0" y="294" width="19.5" height="1.5" fill="#3a70e0" opacity="0.8"/>
<rect x="192.0" y="313" width="19.5" height="2" fill="#3a70e0" opacity="0.9"/>
<rect x="192.5" y="304" width="18.5" height="10" rx="3" fill="#e04858" opacity="0.95"/>
<rect x="193.5" y="307" width="16.5" height="1" fill="#4a78e0" opacity="0.4"/>
<rect x="201.15" y="290" width="1.2" height="31" fill="#3a70e0" opacity="0.7"/>
<rect x="217" y="287" width="22" height="36" rx="6" fill="#3f78e6"/>
<rect x="218.5" y="288.5" width="19" height="33" rx="5" fill="#58b4f8"/>
<rect x="218.5" y="294" width="19" height="1.5" fill="#3a70e0" opacity="0.8"/>
<rect x="218.5" y="313" width="19" height="2" fill="#3a70e0" opacity="0.9"/>
<rect x="219" y="300" width="18" height="14" rx="3" fill="#d43890" opacity="0.95"/>
<rect x="220" y="303" width="16" height="1" fill="#4a78e0" opacity="0.4"/>
<rect x="227.4" y="290" width="1.2" height="31" fill="#3a70e0" opacity="0.7"/>
<rect x="0" y="326" width="220" height="8" fill="#e05048"/>
<rect x="0" y="334" width="220" height="65" fill="#58a8f0"/>
<rect x="61.3" y="345.6" width="2" height="1.5" fill="#4a80e0" opacity="0.6"/>
<rect x="79.0" y="351.2" width="2" height="1.5" fill="#70c0fa" opacity="0.6"/>
<rect x="104.8" y="378.2" width="2" height="1.5" fill="#4a80e0" opacity="0.6"/>
<rect x="80.6" y="366.3" width="2" height="1.5" fill="#4a70d8" opacity="0.6"/>
<rect x="14.2" y="366.7" width="2" height="1.5" fill="#70c0fa" opacity="0.6"/>
<rect x="131.4" y="371.0" width="2" height="1.5" fill="#70c0fa" opacity="0.6"/>
<rect x="149.4" y="355.8" width="2" height="1.5" fill="#4a70d8" opacity="0.6"/>
<rect x="55.9" y="373.4" width="2" height="1.5" fill="#4a70d8" opacity="0.6"/>
<rect x="66.5" y="354.3" width="2" height="1.5" fill="#4a80e0" opacity="0.6"/>
<rect x="121.8" y="343.2" width="2" height="1.5" fill="#4a80e0" opacity="0.6"/>
<rect x="4.6" y="363.4" width="2" height="1.5" fill="#70c0fa" opacity="0.6"/>
<rect x="135.5" y="342.0" width="2" height="1.5" fill="#4a70d8" opacity="0.6"/>
<rect x="164.7" y="366.5" width="2" height="1.5" fill="#70c0fa" opacity="0.6"/>
<rect x="26.2" y="361.3" width="2" height="1.5" fill="#4a80e0" opacity="0.6"/>
<rect x="2.4" y="381.6" width="2" height="1.5" fill="#4a70d8" opacity="0.6"/>
<rect x="17.3" y="371.0" width="2" height="1.5" fill="#4a80e0" opacity="0.6"/>
<rect x="72.9" y="376.8" width="2" height="1.5" fill="#4a80e0" opacity="0.6"/>
<rect x="4.7" y="345.2" width="2" height="1.5" fill="#4a70d8" opacity="0.6"/>
<rect x="40.4" y="363.1" width="2" height="1.5" fill="#70c0fa" opacity="0.6"/>
<rect x="91.5" y="375.0" width="2" height="1.5" fill="#4a80e0" opacity="0.6"/>
<rect x="152.9" y="352.0" width="2" height="1.5" fill="#70c0fa" opacity="0.6"/>
<rect x="111.3" y="374.1" width="2" height="1.5" fill="#4a70d8" opacity="0.6"/>
<rect x="70.7" y="379.1" width="2" height="1.5" fill="#4a70d8" opacity="0.6"/>
<rect x="22.0" y="342.3" width="2" height="1.5" fill="#4a70d8" opacity="0.6"/>
<rect x="3.1" y="356.1" width="2" height="1.5" fill="#4a80e0" opacity="0.6"/>
<rect x="102.2" y="372.2" width="2" height="1.5" fill="#4a80e0" opacity="0.6"/>
<rect x="29.0" y="357.7" width="2" height="1.5" fill="#4a70d8" opacity="0.6"/>
<rect x="20.2" y="338.0" width="2" height="1.5" fill="#4a70d8" opacity="0.6"/>
<rect x="87.1" y="361.7" width="2" height="1.5" fill="#4a80e0" opacity="0.6"/>
<rect x="148.4" y="337.7" width="2" height="1.5" fill="#4a80e0" opacity="0.6"/>
<rect x="46.5" y="372.1" width="2" height="1.5" fill="#4a70d8" opacity="0.6"/>
<rect x="76.0" y="336.3" width="2" height="1.5" fill="#4a80e0" opacity="0.6"/>
<rect x="74.5" y="364.4" width="2" height="1.5" fill="#4a70d8" opacity="0.6"/>
<rect x="101.8" y="344.6" width="2" height="1.5" fill="#70c0fa" opacity="0.6"/>
<rect x="76.0" y="360.6" width="2" height="1.5" fill="#70c0fa" opacity="0.6"/>
<rect x="85.3" y="346.9" width="2" height="1.5" fill="#4a70d8" opacity="0.6"/>
<rect x="147.3" y="380.2" width="2" height="1.5" fill="#70c0fa" opacity="0.6"/>
<rect x="155.0" y="377.9" width="2" height="1.5" fill="#4a80e0" opacity="0.6"/>
<rect x="141.1" y="341.6" width="2" height="1.5" fill="#4a80e0" opacity="0.6"/>
<rect x="65.9" y="350.2" width="2" height="1.5" fill="#4a70d8" opacity="0.6"/>
<rect x="40.4" y="338.5" width="2" height="1.5" fill="#4a70d8" opacity="0.6"/>
<rect x="50.9" y="340.9" width="2" height="1.5" fill="#4a80e0" opacity="0.6"/>
<rect x="157.8" y="365.9" width="2" height="1.5" fill="#70c0fa" opacity="0.6"/>
<rect x="24.0" y="377.4" width="2" height="1.5" fill="#70c0fa" opacity="0.6"/>
<rect x="36.9" y="380.7" width="2" height="1.5" fill="#70c0fa" opacity="0.6"/>
<rect x="148.7" y="342.8" width="2" height="1.5" fill="#4a70d8" opacity="0.6"/>
<rect x="139.9" y="342.8" width="2" height="1.5" fill="#70c0fa" opacity="0.6"/>
<rect x="167.0" y="354.4" width="2" height="1.5" fill="#70c0fa" opacity="0.6"/>
<rect x="32.9" y="350.3" width="2" height="1.5" fill="#4a70d8" opacity="0.6"/>
<rect x="61.5" y="351.2" width="2" height="1.5" fill="#70c0fa" opacity="0.6"/>
<rect x="74.0" y="335.9" width="2" height="1.5" fill="#70c0fa" opacity="0.6"/>
<rect x="86.9" y="349.2" width="2" height="1.5" fill="#4a80e0" opacity="0.6"/>
<rect x="19.0" y="379.1" width="2" height="1.5" fill="#4a80e0" opacity="0.6"/>
<rect x="163.2" y="340.0" width="2" height="1.5" fill="#70c0fa" opacity="0.6"/>
<rect x="45.7" y="378.5" width="2" height="1.5" fill="#4a80e0" opacity="0.6"/>
<rect x="45.4" y="341.2" width="2" height="1.5" fill="#70c0fa" opacity="0.6"/>
<rect x="142.7" y="367.4" width="2" height="1.5" fill="#70c0fa" opacity="0.6"/>
<rect x="68.2" y="360.8" width="2" height="1.5" fill="#4a70d8" opacity="0.6"/>
<rect x="95.9" y="368.6" width="2" height="1.5" fill="#4a80e0" opacity="0.6"/>
<rect x="46.9" y="373.4" width="2" height="1.5" fill="#4a80e0" opacity="0.6"/>
<rect x="71.5" y="338.5" width="2" height="1.5" fill="#4a80e0" opacity="0.6"/>
<rect x="106.6" y="373.5" width="2" height="1.5" fill="#4a80e0" opacity="0.6"/>
<rect x="102.2" y="345.7" width="2" height="1.5" fill="#70c0fa" opacity="0.6"/>
<rect x="144.9" y="356.8" width="2" height="1.5" fill="#70c0fa" opacity="0.6"/>
<rect x="167.0" y="355.1" width="2" height="1.5" fill="#70c0fa" opacity="0.6"/>
<rect x="104.4" y="337.1" width="2" height="1.5" fill="#4a70d8" opacity="0.6"/>
<rect x="40.1" y="340.3" width="2" height="1.5" fill="#4a80e0" opacity="0.6"/>
<rect x="44.0" y="343.7" width="2" height="1.5" fill="#70c0fa" opacity="0.6"/>
<rect x="105.6" y="360.5" width="2" height="1.5" fill="#4a80e0" opacity="0.6"/>
<rect x="48.7" y="359.0" width="2" height="1.5" fill="#4a80e0" opacity="0.6"/>
<rect x="45.4" y="373.6" width="2" height="1.5" fill="#70c0fa" opacity="0.6"/>
<rect x="6.2" y="335.9" width="2" height="1.5" fill="#4a70d8" opacity="0.6"/>
<rect x="92.6" y="344.1" width="2" height="1.5" fill="#70c0fa" opacity="0.6"/>
<rect x="41.3" y="356.5" width="2" height="1.5" fill="#4a70d8" opacity="0.6"/>
<rect x="137.6" y="355.7" width="2" height="1.5" fill="#70c0fa" opacity="0.6"/>
<rect x="91.7" y="377.7" width="2" height="1.5" fill="#4a70d8" opacity="0.6"/>
<rect x="51.7" y="345.3" width="2" height="1.5" fill="#4a80e0" opacity="0.6"/>
<rect x="57.6" y="374.9" width="2" height="1.5" fill="#4a70d8" opacity="0.6"/>
<rect x="122.4" y="341.7" width="2" height="1.5" fill="#70c0fa" opacity="0.6"/>
<rect x="165.0" y="375.2" width="2" height="1.5" fill="#4a80e0" opacity="0.6"/>
<rect x="11.9" y="370.6" width="2" height="1.5" fill="#70c0fa" opacity="0.6"/>
<rect x="72.4" y="337.7" width="2" height="1.5" fill="#4a70d8" opacity="0.6"/>
<rect x="141.3" y="376.8" width="2" height="1.5" fill="#4a70d8" opacity="0.6"/>
<rect x="163.1" y="363.7" width="2" height="1.5" fill="#4a70d8" opacity="0.6"/>
<rect x="49.2" y="357.1" width="2" height="1.5" fill="#4a80e0" opacity="0.6"/>
<rect x="45.2" y="335.2" width="2" height="1.5" fill="#70c0fa" opacity="0.6"/>
<rect x="161.6" y="381.7" width="2" height="1.5" fill="#4a70d8" opacity="0.6"/>
<rect x="54.4" y="336.7" width="2" height="1.5" fill="#70c0fa" opacity="0.6"/>
<rect x="36.6" y="343.8" width="2" height="1.5" fill="#70c0fa" opacity="0.6"/>
<rect x="64.1" y="357.8" width="2" height="1.5" fill="#4a70d8" opacity="0.6"/>
<rect x="110.2" y="346.9" width="2" height="1.5" fill="#4a80e0" opacity="0.6"/>
<rect x="15.3" y="374.2" width="2" height="1.5" fill="#4a80e0" opacity="0.6"/>
<rect x="67.1" y="337.0" width="2" height="1.5" fill="#4a80e0" opacity="0.6"/>
<rect x="50.3" y="365.2" width="2" height="1.5" fill="#4a80e0" opacity="0.6"/>
<rect x="98.4" y="360.4" width="2" height="1.5" fill="#4a80e0" opacity="0.6"/>
<rect x="110.5" y="369.4" width="2" height="1.5" fill="#4a70d8" opacity="0.6"/>
<rect x="65.4" y="350.7" width="2" height="1.5" fill="#70c0fa" opacity="0.6"/>
<rect x="25.1" y="369.8" width="2" height="1.5" fill="#4a70d8" opacity="0.6"/>
<rect x="24.3" y="374.6" width="2" height="1.5" fill="#4a70d8" opacity="0.6"/>
<rect x="149.8" y="365.1" width="2" height="1.5" fill="#4a70d8" opacity="0.6"/>
<rect x="117.8" y="359.3" width="2" height="1.5" fill="#4a70d8" opacity="0.6"/>
<rect x="126.5" y="362.3" width="2" height="1.5" fill="#4a80e0" opacity="0.6"/>
<rect x="138.8" y="363.0" width="2" height="1.5" fill="#4a70d8" opacity="0.6"/>
<rect x="114.7" y="368.3" width="2" height="1.5" fill="#4a80e0" opacity="0.6"/>
<rect x="14.3" y="337.0" width="2" height="1.5" fill="#4a70d8" opacity="0.6"/>
<rect x="60.6" y="340.0" width="2" height="1.5" fill="#70c0fa" opacity="0.6"/>
<rect x="93.8" y="365.1" width="2" height="1.5" fill="#4a70d8" opacity="0.6"/>
<rect x="89.3" y="346.7" width="2" height="1.5" fill="#70c0fa" opacity="0.6"/>
<rect x="0.6" y="373.3" width="2" height="1.5" fill="#4a70d8" opacity="0.6"/>
<rect x="156.7" y="378.1" width="2" height="1.5" fill="#4a80e0" opacity="0.6"/>
<rect x="110.8" y="338.2" width="2" height="1.5" fill="#4a70d8" opacity="0.6"/>
<rect x="79.6" y="373.8" width="2" height="1.5" fill="#70c0fa" opacity="0.6"/>
<rect x="39.4" y="371.3" width="2" height="1.5" fill="#4a80e0" opacity="0.6"/>
<rect x="124.3" y="381.8" width="2" height="1.5" fill="#70c0fa" opacity="0.6"/>
<rect x="142.0" y="338.7" width="2" height="1.5" fill="#4a70d8" opacity="0.6"/>
<rect x="48.3" y="337.2" width="2" height="1.5" fill="#4a70d8" opacity="0.6"/>
<rect x="108.0" y="338.7" width="2" height="1.5" fill="#4a80e0" opacity="0.6"/>
<rect x="55.7" y="366.3" width="2" height="1.5" fill="#4a70d8" opacity="0.6"/>
<rect x="51.1" y="362.3" width="2" height="1.5" fill="#4a80e0" opacity="0.6"/>
<rect x="81.0" y="358.3" width="2" height="1.5" fill="#4a70d8" opacity="0.6"/>
<rect x="16.7" y="345.4" width="2" height="1.5" fill="#70c0fa" opacity="0.6"/>
<rect x="48.9" y="359.8" width="2" height="1.5" fill="#70c0fa" opacity="0.6"/>
<rect x="78.3" y="371.8" width="2" height="1.5" fill="#4a70d8" opacity="0.6"/>
<rect x="33.5" y="382.0" width="2" height="1.5" fill="#70c0fa" opacity="0.6"/>
<rect x="2.9" y="357.0" width="2" height="1.5" fill="#4a70d8" opacity="0.6"/>
<rect x="162.6" y="356.6" width="2" height="1.5" fill="#70c0fa" opacity="0.6"/>
<rect x="65.0" y="379.0" width="2" height="1.5" fill="#4a80e0" opacity="0.6"/>
<rect x="12.5" y="339.3" width="2" height="1.5" fill="#4a70d8" opacity="0.6"/>
<rect x="88.0" y="380.7" width="2" height="1.5" fill="#4a80e0" opacity="0.6"/>
<rect x="101.4" y="365.3" width="2" height="1.5" fill="#70c0fa" opacity="0.6"/>
<rect x="149.0" y="368.8" width="2" height="1.5" fill="#4a80e0" opacity="0.6"/>
<rect x="83.6" y="377.1" width="2" height="1.5" fill="#70c0fa" opacity="0.6"/>
<rect x="4.2" y="335.2" width="2" height="1.5" fill="#70c0fa" opacity="0.6"/>
<rect x="114.5" y="354.5" width="2" height="1.5" fill="#4a70d8" opacity="0.6"/>
<rect x="23.6" y="351.5" width="2" height="1.5" fill="#70c0fa" opacity="0.6"/>
<rect x="20.3" y="350.9" width="2" height="1.5" fill="#70c0fa" opacity="0.6"/>
<rect x="126.1" y="375.3" width="2" height="1.5" fill="#4a80e0" opacity="0.6"/>
<rect x="157.9" y="344.4" width="2" height="1.5" fill="#4a80e0" opacity="0.6"/>
<rect x="151.5" y="348.9" width="2" height="1.5" fill="#70c0fa" opacity="0.6"/>
<rect x="10.9" y="353.7" width="2" height="1.5" fill="#4a70d8" opacity="0.6"/>
<rect x="12.8" y="379.4" width="2" height="1.5" fill="#70c0fa" opacity="0.6"/>
<rect x="143.5" y="348.5" width="2" height="1.5" fill="#4a80e0" opacity="0.6"/>
<rect x="140.2" y="348.7" width="2" height="1.5" fill="#4a80e0" opacity="0.6"/>
<rect x="41.9" y="347.8" width="2" height="1.5" fill="#4a70d8" opacity="0.6"/>
<rect x="53.0" y="372.1" width="2" height="1.5" fill="#70c0fa" opacity="0.6"/>
<rect x="148.6" y="374.0" width="2" height="1.5" fill="#4a70d8" opacity="0.6"/>
<rect x="67.2" y="377.0" width="2" height="1.5" fill="#4a70d8" opacity="0.6"/>
<rect x="92.3" y="369.5" width="2" height="1.5" fill="#4a80e0" opacity="0.6"/>
<rect x="156.8" y="354.7" width="2" height="1.5" fill="#4a70d8" opacity="0.6"/>
<rect x="126.4" y="365.9" width="2" height="1.5" fill="#70c0fa" opacity="0.6"/>
<rect x="81.6" y="378.8" width="2" height="1.5" fill="#4a70d8" opacity="0.6"/>
<rect x="21.4" y="357.7" width="2" height="1.5" fill="#70c0fa" opacity="0.6"/>
<rect x="47.3" y="347.3" width="2" height="1.5" fill="#4a70d8" opacity="0.6"/>
<rect x="164.0" y="347.5" width="2" height="1.5" fill="#4a70d8" opacity="0.6"/>
<rect x="40.1" y="358.2" width="2" height="1.5" fill="#4a70d8" opacity="0.6"/>
<rect x="66.3" y="343.0" width="2" height="1.5" fill="#4a80e0" opacity="0.6"/>
<rect x="12.6" y="359.0" width="2" height="1.5" fill="#70c0fa" opacity="0.6"/>
<rect x="92.5" y="356.7" width="2" height="1.5" fill="#70c0fa" opacity="0.6"/>
<rect x="167.4" y="356.6" width="2" height="1.5" fill="#4a80e0" opacity="0.6"/>
<rect x="92.0" y="346.7" width="2" height="1.5" fill="#4a80e0" opacity="0.6"/>
<rect x="57.4" y="339.4" width="2" height="1.5" fill="#4a80e0" opacity="0.6"/>
<rect x="61.9" y="373.8" width="2" height="1.5" fill="#4a80e0" opacity="0.6"/>
<rect x="149.1" y="371.0" width="2" height="1.5" fill="#70c0fa" opacity="0.6"/>
<rect x="64.3" y="370.8" width="2" height="1.5" fill="#4a80e0" opacity="0.6"/>
<rect x="63.3" y="351.2" width="2" height="1.5" fill="#4a80e0" opacity="0.6"/>
<rect x="83.7" y="362.6" width="2" height="1.5" fill="#70c0fa" opacity="0.6"/>
<rect x="21.1" y="359.2" width="2" height="1.5" fill="#4a70d8" opacity="0.6"/>
<rect x="132.8" y="375.7" width="2" height="1.5" fill="#4a80e0" opacity="0.6"/>
<rect x="45.5" y="346.9" width="2" height="1.5" fill="#70c0fa" opacity="0.6"/>
<rect x="108.5" y="355.7" width="2" height="1.5" fill="#70c0fa" opacity="0.6"/>
<rect x="142.6" y="376.9" width="2" height="1.5" fill="#4a80e0" opacity="0.6"/>
<rect x="21.4" y="355.4" width="2" height="1.5" fill="#70c0fa" opacity="0.6"/>
<rect x="162.7" y="358.5" width="2" height="1.5" fill="#4a80e0" opacity="0.6"/>
<rect x="65.8" y="379.5" width="2" height="1.5" fill="#4a70d8" opacity="0.6"/>
<rect x="143.7" y="381.7" width="2" height="1.5" fill="#4a80e0" opacity="0.6"/>
<rect x="131.6" y="345.7" width="2" height="1.5" fill="#4a80e0" opacity="0.6"/>
<rect x="87.8" y="367.7" width="2" height="1.5" fill="#4a70d8" opacity="0.6"/>
<rect x="117.8" y="375.6" width="2" height="1.5" fill="#70c0fa" opacity="0.6"/>
<rect x="14.3" y="372.3" width="2" height="1.5" fill="#4a80e0" opacity="0.6"/>
<rect x="131.4" y="346.2" width="2" height="1.5" fill="#4a80e0" opacity="0.6"/>
<rect x="108.4" y="349.6" width="2" height="1.5" fill="#4a80e0" opacity="0.6"/>
<rect x="105.2" y="360.4" width="2" height="1.5" fill="#70c0fa" opacity="0.6"/>
<rect x="117.4" y="340.4" width="2" height="1.5" fill="#4a80e0" opacity="0.6"/>
<rect x="50.5" y="380.3" width="2" height="1.5" fill="#4a80e0" opacity="0.6"/>
<rect x="65.2" y="345.7" width="2" height="1.5" fill="#4a70d8" opacity="0.6"/>
<rect x="0.2" y="360.8" width="2" height="1.5" fill="#70c0fa" opacity="0.6"/>
<rect x="46.8" y="350.2" width="2" height="1.5" fill="#4a80e0" opacity="0.6"/>
<rect x="79.9" y="346.3" width="2" height="1.5" fill="#4a80e0" opacity="0.6"/>
<rect x="4.9" y="354.8" width="2" height="1.5" fill="#4a70d8" opacity="0.6"/>
<rect x="51.6" y="336.0" width="2" height="1.5" fill="#70c0fa" opacity="0.6"/>
<rect x="148.7" y="366.1" width="2" height="1.5" fill="#4a80e0" opacity="0.6"/>
<rect x="43.2" y="367.0" width="2" height="1.5" fill="#70c0fa" opacity="0.6"/>
<rect x="38.1" y="336.6" width="2" height="1.5" fill="#70c0fa" opacity="0.6"/>
<rect x="120.7" y="352.4" width="2" height="1.5" fill="#70c0fa" opacity="0.6"/>
<rect x="33.3" y="373.3" width="2" height="1.5" fill="#4a70d8" opacity="0.6"/>
<rect x="142.0" y="338.2" width="2" height="1.5" fill="#70c0fa" opacity="0.6"/>
<rect x="162.9" y="350.0" width="2" height="1.5" fill="#4a80e0" opacity="0.6"/>
<rect x="38.8" y="345.6" width="2" height="1.5" fill="#70c0fa" opacity="0.6"/>
<rect x="18.3" y="364.9" width="2" height="1.5" fill="#4a70d8" opacity="0.6"/>
<rect x="31.5" y="345.7" width="2" height="1.5" fill="#70c0fa" opacity="0.6"/>
<rect x="152.9" y="337.7" width="2" height="1.5" fill="#4a70d8" opacity="0.6"/>
<rect x="24.6" y="353.9" width="2" height="1.5" fill="#4a80e0" opacity="0.6"/>
<rect x="4.0" y="363.6" width="2" height="1.5" fill="#70c0fa" opacity="0.6"/>
<rect x="8.7" y="337.9" width="2" height="1.5" fill="#70c0fa" opacity="0.6"/>
<rect x="75.5" y="369.2" width="2" height="1.5" fill="#70c0fa" opacity="0.6"/>
<rect x="123.1" y="382.9" width="2" height="1.5" fill="#4a80e0" opacity="0.6"/>
<rect x="55.3" y="343.9" width="2" height="1.5" fill="#4a70d8" opacity="0.6"/>
<rect x="125.4" y="336.5" width="2" height="1.5" fill="#4a70d8" opacity="0.6"/>
<rect x="121.9" y="375.3" width="2" height="1.5" fill="#70c0fa" opacity="0.6"/>
<rect x="74.3" y="340.2" width="2" height="1.5" fill="#4a80e0" opacity="0.6"/>
<rect x="47.0" y="351.9" width="2" height="1.5" fill="#4a80e0" opacity="0.6"/>
<rect x="94.3" y="371.4" width="2" height="1.5" fill="#70c0fa" opacity="0.6"/>
<rect x="59.9" y="374.4" width="2" height="1.5" fill="#70c0fa" opacity="0.6"/>
<rect x="14.7" y="368.9" width="2" height="1.5" fill="#4a80e0" opacity="0.6"/>
<rect x="62.6" y="379.1" width="2" height="1.5" fill="#4a80e0" opacity="0.6"/>
<rect x="54.3" y="370.4" width="2" height="1.5" fill="#70c0fa" opacity="0.6"/>
<rect x="5.1" y="354.7" width="2" height="1.5" fill="#4a70d8" opacity="0.6"/>
<rect x="128.8" y="337.0" width="2" height="1.5" fill="#4a80e0" opacity="0.6"/>
<rect x="78.0" y="373.6" width="2" height="1.5" fill="#4a80e0" opacity="0.6"/>
<rect x="43.2" y="370.9" width="2" height="1.5" fill="#4a70d8" opacity="0.6"/>
<rect x="57.0" y="348.1" width="2" height="1.5" fill="#4a70d8" opacity="0.6"/>
<rect x="7.3" y="370.8" width="2" height="1.5" fill="#4a70d8" opacity="0.6"/>
<rect x="53.2" y="348.2" width="2" height="1.5" fill="#4a80e0" opacity="0.6"/>
<rect x="121.2" y="363.6" width="2" height="1.5" fill="#4a70d8" opacity="0.6"/>
<rect x="159.0" y="338.1" width="2" height="1.5" fill="#4a80e0" opacity="0.6"/>
<rect x="18.0" y="369.3" width="2" height="1.5" fill="#70c0fa" opacity="0.6"/>
<rect x="160.3" y="353.6" width="2" height="1.5" fill="#70c0fa" opacity="0.6"/>
<rect x="153.5" y="374.1" width="2" height="1.5" fill="#4a80e0" opacity="0.6"/>
<rect x="155.9" y="343.8" width="2" height="1.5" fill="#4a70d8" opacity="0.6"/>
<rect x="51.0" y="368.2" width="2" height="1.5" fill="#4a80e0" opacity="0.6"/>
<rect x="102.0" y="350.7" width="2" height="1.5" fill="#70c0fa" opacity="0.6"/>
<rect x="77.4" y="372.6" width="2" height="1.5" fill="#4a70d8" opacity="0.6"/>
<rect x="13.3" y="344.5" width="2" height="1.5" fill="#4a80e0" opacity="0.6"/>
<rect x="41.5" y="338.1" width="2" height="1.5" fill="#4a80e0" opacity="0.6"/>
<rect x="80.9" y="361.1" width="2" height="1.5" fill="#4a80e0" opacity="0.6"/>
<rect x="164.7" y="377.4" width="2" height="1.5" fill="#4a80e0" opacity="0.6"/>
<rect x="44.5" y="339.0" width="2" height="1.5" fill="#4a80e0" opacity="0.6"/>
<rect x="70.7" y="382.4" width="2" height="1.5" fill="#70c0fa" opacity="0.6"/>
<rect x="29.1" y="341.4" width="2" height="1.5" fill="#70c0fa" opacity="0.6"/>
<rect x="104.2" y="367.4" width="2" height="1.5" fill="#4a70d8" opacity="0.6"/>
<rect x="90.5" y="372.1" width="2" height="1.5" fill="#4a80e0" opacity="0.6"/>
<rect x="131.0" y="349.1" width="2" height="1.5" fill="#70c0fa" opacity="0.6"/>
<rect x="95.2" y="352.9" width="2" height="1.5" fill="#4a70d8" opacity="0.6"/>
<rect x="43.7" y="356.1" width="2" height="1.5" fill="#4a80e0" opacity="0.6"/>
<rect x="41.2" y="342.4" width="2" height="1.5" fill="#4a70d8" opacity="0.6"/>
<rect x="31.6" y="338.1" width="2" height="1.5" fill="#70c0fa" opacity="0.6"/>
<rect x="166.7" y="359.4" width="2" height="1.5" fill="#4a80e0" opacity="0.6"/>
<rect x="109.1" y="339.8" width="2" height="1.5" fill="#70c0fa" opacity="0.6"/>
<rect x="166.5" y="339.9" width="2" height="1.5" fill="#70c0fa" opacity="0.6"/>
<rect x="148.3" y="346.1" width="2" height="1.5" fill="#70c0fa" opacity="0.6"/>
<rect x="153.6" y="336.9" width="2" height="1.5" fill="#70c0fa" opacity="0.6"/>
<rect x="39.1" y="337.4" width="2" height="1.5" fill="#4a70d8" opacity="0.6"/>
<rect x="163.5" y="363.0" width="2" height="1.5" fill="#4a80e0" opacity="0.6"/>
<rect x="62.5" y="376.6" width="2" height="1.5" fill="#70c0fa" opacity="0.6"/>
<rect x="101.3" y="372.2" width="2" height="1.5" fill="#4a70d8" opacity="0.6"/>
<rect x="158.9" y="340.1" width="2" height="1.5" fill="#4a70d8" opacity="0.6"/>
<rect x="119.2" y="351.8" width="2" height="1.5" fill="#4a80e0" opacity="0.6"/>
<rect x="61.9" y="341.8" width="2" height="1.5" fill="#4a80e0" opacity="0.6"/>
<rect x="168.0" y="336.8" width="2" height="1.5" fill="#4a70d8" opacity="0.6"/>
<rect x="109.5" y="344.8" width="2" height="1.5" fill="#4a80e0" opacity="0.6"/>
<rect x="137.6" y="354.6" width="2" height="1.5" fill="#70c0fa" opacity="0.6"/>
<rect x="31.1" y="350.0" width="2" height="1.5" fill="#4a80e0" opacity="0.6"/>
<rect x="5.3" y="358.8" width="2" height="1.5" fill="#70c0fa" opacity="0.6"/>
<rect x="10.6" y="339.9" width="2" height="1.5" fill="#70c0fa" opacity="0.6"/>
<rect x="111.6" y="342.4" width="2" height="1.5" fill="#4a70d8" opacity="0.6"/>
<rect x="15.3" y="342.9" width="2" height="1.5" fill="#4a70d8" opacity="0.6"/>
<rect x="45.6" y="382.4" width="2" height="1.5" fill="#4a70d8" opacity="0.6"/>
<rect x="51.7" y="380.8" width="2" height="1.5" fill="#70c0fa" opacity="0.6"/>
<rect x="125.2" y="377.4" width="2" height="1.5" fill="#70c0fa" opacity="0.6"/>
<rect x="70.0" y="376.5" width="2" height="1.5" fill="#70c0fa" opacity="0.6"/>
<rect x="108.3" y="353.8" width="2" height="1.5" fill="#70c0fa" opacity="0.6"/>
<rect x="34.2" y="335.3" width="2" height="1.5" fill="#4a80e0" opacity="0.6"/>
<rect x="71.2" y="374.4" width="2" height="1.5" fill="#70c0fa" opacity="0.6"/>
<rect x="97.1" y="352.5" width="2" height="1.5" fill="#4a80e0" opacity="0.6"/>
<rect x="21.8" y="337.5" width="2" height="1.5" fill="#4a80e0" opacity="0.6"/>
<rect x="107.6" y="378.7" width="2" height="1.5" fill="#4a80e0" opacity="0.6"/>
<rect x="96.2" y="379.5" width="2" height="1.5" fill="#4a70d8" opacity="0.6"/>
<rect x="84.7" y="342.0" width="2" height="1.5" fill="#70c0fa" opacity="0.6"/>
<rect x="27.2" y="343.2" width="2" height="1.5" fill="#4a80e0" opacity="0.6"/>
<rect x="18.3" y="358.5" width="2" height="1.5" fill="#4a80e0" opacity="0.6"/>
<rect x="50.7" y="375.2" width="2" height="1.5" fill="#4a80e0" opacity="0.6"/>
<rect x="163.9" y="358.2" width="2" height="1.5" fill="#4a80e0" opacity="0.6"/>
<rect x="102.1" y="365.5" width="2" height="1.5" fill="#4a80e0" opacity="0.6"/>
<rect x="151.9" y="364.8" width="2" height="1.5" fill="#4a80e0" opacity="0.6"/>
<rect x="107.6" y="376.1" width="2" height="1.5" fill="#4a70d8" opacity="0.6"/>
<rect x="68.0" y="375.6" width="2" height="1.5" fill="#70c0fa" opacity="0.6"/>
<rect x="30.7" y="345.5" width="2" height="1.5" fill="#70c0fa" opacity="0.6"/>
<rect x="157.7" y="342.5" width="2" height="1.5" fill="#70c0fa" opacity="0.6"/>
<rect x="20.7" y="346.9" width="2" height="1.5" fill="#4a70d8" opacity="0.6"/>
<rect x="137.0" y="344.2" width="2" height="1.5" fill="#4a70d8" opacity="0.6"/>
<rect x="141.5" y="367.3" width="2" height="1.5" fill="#4a70d8" opacity="0.6"/>
<rect x="140.8" y="340.7" width="2" height="1.5" fill="#4a70d8" opacity="0.6"/>
<rect x="76.6" y="375.8" width="2" height="1.5" fill="#70c0fa" opacity="0.6"/>
<rect x="109.0" y="349.8" width="2" height="1.5" fill="#4a80e0" opacity="0.6"/>
<rect x="71.5" y="366.6" width="2" height="1.5" fill="#70c0fa" opacity="0.6"/>
<rect x="84.6" y="343.6" width="2" height="1.5" fill="#4a80e0" opacity="0.6"/>
<rect x="104.0" y="358.5" width="2" height="1.5" fill="#4a80e0" opacity="0.6"/>
<rect x="75.1" y="364.7" width="2" height="1.5" fill="#70c0fa" opacity="0.6"/>
<rect x="140.5" y="373.9" width="2" height="1.5" fill="#70c0fa" opacity="0.6"/>
<rect x="18.0" y="341.2" width="2" height="1.5" fill="#70c0fa" opacity="0.6"/>
<rect x="0" y="372" width="220" height="1.5" fill="#4a78d8" opacity="0.6"/>
<rect x="0" y="383" width="100" height="16" fill="#b050c8"/>
<rect x="36.5" y="395.8" width="2" height="1.5" fill="#e04890"/>
<rect x="4.1" y="385.1" width="2" height="1.5" fill="#5aa6ee"/>
<rect x="77.8" y="391.2" width="2" height="1.5" fill="#e04890"/>
<rect x="75.2" y="397.3" width="2" height="1.5" fill="#7a60e0"/>
<rect x="2.6" y="384.1" width="2" height="1.5" fill="#e04890"/>
<rect x="19.4" y="398.7" width="2" height="1.5" fill="#d04090"/>
<rect x="28.8" y="396.0" width="2" height="1.5" fill="#7a60e0"/>
<rect x="68.6" y="394.5" width="2" height="1.5" fill="#7a60e0"/>
<rect x="6.6" y="388.6" width="2" height="1.5" fill="#5aa6ee"/>
<rect x="15.9" y="397.3" width="2" height="1.5" fill="#5aa6ee"/>
<rect x="90.5" y="390.3" width="2" height="1.5" fill="#5aa6ee"/>
<rect x="50.2" y="397.7" width="2" height="1.5" fill="#7a60e0"/>
<rect x="59.2" y="392.9" width="2" height="1.5" fill="#7a60e0"/>
<rect x="31.9" y="383.6" width="2" height="1.5" fill="#7a60e0"/>
<rect x="40.3" y="393.2" width="2" height="1.5" fill="#5aa6ee"/>
<rect x="68.0" y="397.3" width="2" height="1.5" fill="#7a60e0"/>
<rect x="79.2" y="387.2" width="2" height="1.5" fill="#e04890"/>
<rect x="63.6" y="388.8" width="2" height="1.5" fill="#d04090"/>
<rect x="55.5" y="392.3" width="2" height="1.5" fill="#e04890"/>
<rect x="25.2" y="391.6" width="2" height="1.5" fill="#d04090"/>
<rect x="73.8" y="388.9" width="2" height="1.5" fill="#d04090"/>
<rect x="99.0" y="392.2" width="2" height="1.5" fill="#5aa6ee"/>
<rect x="33.1" y="384.3" width="2" height="1.5" fill="#7a60e0"/>
<rect x="17.7" y="394.9" width="2" height="1.5" fill="#e04890"/>
<rect x="29.6" y="391.3" width="2" height="1.5" fill="#5aa6ee"/>
<rect x="63.9" y="398.7" width="2" height="1.5" fill="#5aa6ee"/>
<rect x="73.3" y="395.0" width="2" height="1.5" fill="#7a60e0"/>
<rect x="14.9" y="392.9" width="2" height="1.5" fill="#d04090"/>
<rect x="41.8" y="388.8" width="2" height="1.5" fill="#e04890"/>
<rect x="13.2" y="386.6" width="2" height="1.5" fill="#e04890"/>
<rect x="2.2" y="383.0" width="2" height="1.5" fill="#5aa6ee"/>
<rect x="30.4" y="391.4" width="2" height="1.5" fill="#7a60e0"/>
<rect x="41.3" y="387.8" width="2" height="1.5" fill="#7a60e0"/>
<rect x="20.4" y="393.0" width="2" height="1.5" fill="#d04090"/>
<rect x="15.9" y="383.2" width="2" height="1.5" fill="#7a60e0"/>
<rect x="70.7" y="390.2" width="2" height="1.5" fill="#e04890"/>
<rect x="63.8" y="396.9" width="2" height="1.5" fill="#5aa6ee"/>
<rect x="40.2" y="387.2" width="2" height="1.5" fill="#e04890"/>
<rect x="5.6" y="396.1" width="2" height="1.5" fill="#5aa6ee"/>
<rect x="59.5" y="392.3" width="2" height="1.5" fill="#d04090"/>
<rect x="24.8" y="397.5" width="2" height="1.5" fill="#e04890"/>
<rect x="6.2" y="383.4" width="2" height="1.5" fill="#7a60e0"/>
<rect x="23.8" y="383.9" width="2" height="1.5" fill="#e04890"/>
<rect x="1.2" y="391.8" width="2" height="1.5" fill="#7a60e0"/>
<rect x="14.2" y="386.2" width="2" height="1.5" fill="#d04090"/>
<rect x="81.3" y="385.8" width="2" height="1.5" fill="#5aa6ee"/>
<rect x="6.4" y="393.0" width="2" height="1.5" fill="#d04090"/>
<rect x="71.5" y="383.1" width="2" height="1.5" fill="#d04090"/>
<rect x="74.5" y="390.4" width="2" height="1.5" fill="#d04090"/>
<rect x="17.5" y="398.9" width="2" height="1.5" fill="#5aa6ee"/>
<rect x="23.2" y="383.6" width="2" height="1.5" fill="#5aa6ee"/>
<rect x="89.1" y="397.8" width="2" height="1.5" fill="#5aa6ee"/>
<rect x="71.2" y="387.3" width="2" height="1.5" fill="#d04090"/>
<rect x="68.6" y="397.7" width="2" height="1.5" fill="#5aa6ee"/>
<rect x="29.6" y="397.9" width="2" height="1.5" fill="#7a60e0"/>
<rect x="8.5" y="391.1" width="2" height="1.5" fill="#7a60e0"/>
<rect x="26.0" y="386.8" width="2" height="1.5" fill="#7a60e0"/>
<rect x="94.5" y="394.9" width="2" height="1.5" fill="#5aa6ee"/>
<rect x="19.2" y="389.2" width="2" height="1.5" fill="#7a60e0"/>
<rect x="37.9" y="396.6" width="2" height="1.5" fill="#d04090"/>
<rect x="47.2" y="391.5" width="2" height="1.5" fill="#e04890"/>
<rect x="85.8" y="390.0" width="2" height="1.5" fill="#7a60e0"/>
<rect x="57.0" y="387.9" width="2" height="1.5" fill="#7a60e0"/>
<rect x="39.2" y="392.4" width="2" height="1.5" fill="#7a60e0"/>
<rect x="14.5" y="383.4" width="2" height="1.5" fill="#e04890"/>
<rect x="62.2" y="385.6" width="2" height="1.5" fill="#7a60e0"/>
<rect x="70.1" y="383.5" width="2" height="1.5" fill="#7a60e0"/>
<rect x="69.3" y="393.1" width="2" height="1.5" fill="#e04890"/>
<rect x="73.7" y="384.1" width="2" height="1.5" fill="#5aa6ee"/>
<rect x="19.9" y="398.3" width="2" height="1.5" fill="#e04890"/>
<rect x="88.0" y="395.1" width="2" height="1.5" fill="#d04090"/>
<rect x="10.7" y="386.3" width="2" height="1.5" fill="#e04890"/>
<rect x="3.4" y="398.2" width="2" height="1.5" fill="#e04890"/>
<rect x="82.5" y="393.1" width="2" height="1.5" fill="#5aa6ee"/>
<rect x="47.7" y="385.1" width="2" height="1.5" fill="#7a60e0"/>
<rect x="29.4" y="388.4" width="2" height="1.5" fill="#5aa6ee"/>
<rect x="2.1" y="387.1" width="2" height="1.5" fill="#5aa6ee"/>
<rect x="4.8" y="395.2" width="2" height="1.5" fill="#5aa6ee"/>
<rect x="76.9" y="392.6" width="2" height="1.5" fill="#d04090"/>
<rect x="85.1" y="392.9" width="2" height="1.5" fill="#e04890"/>
<path d="M88 399 Q95 372 125 364 Q150 357 172 366 Q195 378 200 399 Z" fill="#5a90e8"/>
<circle cx="176.8" cy="363.2" r="1.6" fill="#3038b8"/>
<circle cx="128.1" cy="388.1" r="1.6" fill="#60b0f8"/>
<circle cx="113.8" cy="393.9" r="0.8" fill="#60b0f8"/>
<circle cx="180.2" cy="368.3" r="0.8" fill="#60b0f8"/>
<circle cx="112.2" cy="390.2" r="0.8" fill="#3038b8"/>
<circle cx="128.3" cy="365.5" r="1.6" fill="#d05088"/>
<circle cx="196.4" cy="383.9" r="1.6" fill="#80c8fc"/>
<circle cx="153.6" cy="367.9" r="0.8" fill="#d05088"/>
<circle cx="144.8" cy="366.1" r="1.6" fill="#3038b8"/>
<circle cx="143.9" cy="398.7" r="1.6" fill="#3038b8"/>
<circle cx="159.1" cy="375.2" r="1.2" fill="#4a58d0"/>
<circle cx="188.1" cy="389.6" r="1.2" fill="#3038b8"/>
<circle cx="130.9" cy="373.2" r="1.2" fill="#60b0f8"/>
<circle cx="145.1" cy="376.0" r="1.6" fill="#d05088"/>
<circle cx="193.8" cy="366.7" r="1.6" fill="#60b0f8"/>
<circle cx="161.1" cy="374.9" r="1.2" fill="#60b0f8"/>
<circle cx="107.1" cy="393.2" r="1.6" fill="#60b0f8"/>
<circle cx="171.6" cy="368.3" r="1.2" fill="#80c8fc"/>
<circle cx="153.7" cy="366.7" r="1.2" fill="#d05088"/>
<circle cx="145.8" cy="371.9" r="1.6" fill="#60b0f8"/>
<circle cx="107.0" cy="367.8" r="0.8" fill="#80c8fc"/>
<circle cx="156.3" cy="374.9" r="0.8" fill="#80c8fc"/>
<circle cx="195.1" cy="371.6" r="1.6" fill="#3038b8"/>
<circle cx="108.1" cy="386.3" r="0.8" fill="#4a58d0"/>
<circle cx="106.6" cy="367.5" r="1.2" fill="#80c8fc"/>
<circle cx="137.8" cy="369.3" r="1.6" fill="#3038b8"/>
<circle cx="120.9" cy="394.8" r="1.2" fill="#3038b8"/>
<circle cx="91.4" cy="393.6" r="1.2" fill="#d05088"/>
<circle cx="145.1" cy="385.4" r="1.2" fill="#3038b8"/>
<circle cx="105.6" cy="384.3" r="1.2" fill="#3038b8"/>
<circle cx="171.5" cy="395.6" r="1.2" fill="#60b0f8"/>
<circle cx="154.6" cy="385.9" r="0.8" fill="#60b0f8"/>
<circle cx="183.8" cy="387.1" r="1.6" fill="#3038b8"/>
<circle cx="139.9" cy="373.6" r="1.6" fill="#3038b8"/>
<circle cx="188.4" cy="371.0" r="1.2" fill="#d05088"/>
<circle cx="117.5" cy="377.7" r="1.2" fill="#3038b8"/>
<circle cx="158.4" cy="377.1" r="1.6" fill="#d05088"/>
<circle cx="188.4" cy="374.1" r="0.8" fill="#4a58d0"/>
<circle cx="181.5" cy="395.6" r="0.8" fill="#3038b8"/>
<circle cx="117.6" cy="370.1" r="1.6" fill="#d05088"/>
<circle cx="147.1" cy="365.7" r="1.6" fill="#4a58d0"/>
<circle cx="149.5" cy="388.5" r="1.6" fill="#3038b8"/>
<circle cx="160.3" cy="392.7" r="1.6" fill="#80c8fc"/>
<circle cx="135.1" cy="397.1" r="0.8" fill="#d05088"/>
<circle cx="133.2" cy="390.2" r="0.8" fill="#60b0f8"/>
<circle cx="129.1" cy="364.1" r="1.2" fill="#4a58d0"/>
<circle cx="134.0" cy="362.5" r="1.2" fill="#4a58d0"/>
<circle cx="159.1" cy="387.0" r="1.6" fill="#80c8fc"/>
<circle cx="102.0" cy="373.2" r="1.2" fill="#60b0f8"/>
<circle cx="196.9" cy="398.8" r="1.2" fill="#4a58d0"/>
<circle cx="113.3" cy="366.8" r="0.8" fill="#d05088"/>
<circle cx="141.6" cy="382.8" r="0.8" fill="#d05088"/>
<circle cx="128.8" cy="385.6" r="1.2" fill="#4a58d0"/>
<circle cx="199.6" cy="390.1" r="1.6" fill="#d05088"/>
<circle cx="175.8" cy="379.4" r="0.8" fill="#80c8fc"/>
<circle cx="167.5" cy="387.4" r="1.2" fill="#d05088"/>
<circle cx="143.0" cy="391.8" r="1.2" fill="#80c8fc"/>
<circle cx="116.9" cy="373.2" r="1.2" fill="#4a58d0"/>
<circle cx="137.1" cy="385.6" r="1.6" fill="#80c8fc"/>
<circle cx="106.8" cy="373.2" r="1.2" fill="#3038b8"/>
<circle cx="99.4" cy="382.9" r="1.2" fill="#d05088"/>
<circle cx="148.4" cy="374.8" r="1.6" fill="#3038b8"/>
<circle cx="162.3" cy="369.8" r="0.8" fill="#80c8fc"/>
<circle cx="117.5" cy="365.8" r="0.8" fill="#d05088"/>
<circle cx="110.4" cy="378.7" r="0.8" fill="#d05088"/>
<circle cx="189.4" cy="391.3" r="0.8" fill="#60b0f8"/>
<circle cx="188.0" cy="384.5" r="0.8" fill="#60b0f8"/>
<circle cx="176.7" cy="393.0" r="0.8" fill="#4a58d0"/>
<circle cx="166.2" cy="381.6" r="1.6" fill="#4a58d0"/>
<circle cx="163.8" cy="366.3" r="0.8" fill="#80c8fc"/>
<circle cx="136.1" cy="392.6" r="1.2" fill="#4a58d0"/>
<circle cx="151.3" cy="379.9" r="0.8" fill="#4a58d0"/>
<circle cx="117.1" cy="368.1" r="1.6" fill="#3038b8"/>
<circle cx="107.6" cy="373.9" r="1.6" fill="#60b0f8"/>
<circle cx="144.7" cy="373.0" r="1.2" fill="#80c8fc"/>
<circle cx="136.8" cy="399.0" r="1.6" fill="#3038b8"/>
<circle cx="109.9" cy="375.3" r="1.6" fill="#3038b8"/>
<circle cx="92.3" cy="363.7" r="1.6" fill="#80c8fc"/>
<circle cx="178.9" cy="365.5" r="1.2" fill="#4a58d0"/>
<circle cx="173.3" cy="367.3" r="0.8" fill="#4a58d0"/>
<circle cx="158.8" cy="374.5" r="1.6" fill="#80c8fc"/>
<circle cx="127.5" cy="390.8" r="1.6" fill="#d05088"/>
<circle cx="121.3" cy="374.7" r="1.2" fill="#60b0f8"/>
<circle cx="95.8" cy="372.7" r="1.2" fill="#4a58d0"/>
<circle cx="134.4" cy="380.6" r="1.2" fill="#60b0f8"/>
<circle cx="127.9" cy="369.5" r="1.2" fill="#3038b8"/>
<circle cx="126.4" cy="373.7" r="1.2" fill="#d05088"/>
<circle cx="154.5" cy="385.5" r="0.8" fill="#4a58d0"/>
<circle cx="169.5" cy="394.8" r="1.6" fill="#60b0f8"/>
<circle cx="95.5" cy="373.1" r="0.8" fill="#3038b8"/>
<circle cx="110.9" cy="396.1" r="1.6" fill="#3038b8"/>
<circle cx="176.8" cy="395.7" r="1.6" fill="#4a58d0"/>
<circle cx="157.8" cy="385.2" r="1.6" fill="#60b0f8"/>
<circle cx="186.4" cy="365.1" r="0.8" fill="#4a58d0"/>
<circle cx="158.8" cy="368.4" r="1.6" fill="#d05088"/>
<circle cx="185.6" cy="377.6" r="0.8" fill="#3038b8"/>
<circle cx="130.6" cy="392.4" r="1.2" fill="#60b0f8"/>
<circle cx="168.1" cy="393.9" r="0.8" fill="#4a58d0"/>
<circle cx="93.8" cy="362.8" r="1.6" fill="#60b0f8"/>
<circle cx="192.7" cy="364.0" r="1.6" fill="#60b0f8"/>
<circle cx="94.3" cy="366.4" r="1.2" fill="#60b0f8"/>
<circle cx="166.5" cy="377.0" r="0.8" fill="#3038b8"/>
<circle cx="164.8" cy="384.0" r="1.6" fill="#d05088"/>
<circle cx="142.3" cy="377.3" r="0.8" fill="#3038b8"/>
<circle cx="160.9" cy="369.9" r="0.8" fill="#3038b8"/>
<circle cx="137.0" cy="362.3" r="1.6" fill="#3038b8"/>
<circle cx="198.5" cy="393.8" r="0.8" fill="#3038b8"/>
<circle cx="104.2" cy="362.7" r="1.6" fill="#60b0f8"/>
<circle cx="116.6" cy="389.1" r="0.8" fill="#3038b8"/>
<circle cx="130.2" cy="389.6" r="1.6" fill="#d05088"/>
<circle cx="170.3" cy="365.1" r="1.6" fill="#60b0f8"/>
<circle cx="168.0" cy="379.0" r="1.2" fill="#3038b8"/>
<circle cx="168.9" cy="362.4" r="0.8" fill="#60b0f8"/>
<circle cx="98.8" cy="373.5" r="1.6" fill="#60b0f8"/>
<circle cx="108.3" cy="393.9" r="1.2" fill="#60b0f8"/>
<circle cx="96.6" cy="375.6" r="1.6" fill="#4a58d0"/>
<circle cx="141.7" cy="368.2" r="0.8" fill="#80c8fc"/>
<circle cx="194.9" cy="368.1" r="1.2" fill="#4a58d0"/>
<circle cx="132.4" cy="391.1" r="1.2" fill="#60b0f8"/>
<circle cx="126.7" cy="372.4" r="1.6" fill="#60b0f8"/>
<circle cx="126.5" cy="384.4" r="0.8" fill="#d05088"/>
<circle cx="156.1" cy="373.4" r="1.2" fill="#d05088"/>
<circle cx="131.4" cy="387.3" r="1.6" fill="#d05088"/>
<circle cx="178.8" cy="372.5" r="0.8" fill="#80c8fc"/>
<circle cx="118.9" cy="377.6" r="1.6" fill="#3038b8"/>
<circle cx="121.7" cy="367.2" r="1.6" fill="#d05088"/>
<circle cx="120.1" cy="393.5" r="1.6" fill="#4a58d0"/>
<circle cx="128.2" cy="365.1" r="1.6" fill="#4a58d0"/>
<circle cx="177.7" cy="369.4" r="1.6" fill="#d05088"/>
<circle cx="124.0" cy="364.1" r="1.2" fill="#4a58d0"/>
<circle cx="167.9" cy="396.3" r="1.6" fill="#3038b8"/>
<circle cx="177.1" cy="379.0" r="0.8" fill="#60b0f8"/>
<circle cx="178.7" cy="390.6" r="0.8" fill="#4a58d0"/>
<circle cx="153.8" cy="395.2" r="1.6" fill="#80c8fc"/>
<circle cx="142.4" cy="383.8" r="0.8" fill="#d05088"/>
<circle cx="111.2" cy="368.7" r="1.6" fill="#80c8fc"/>
<circle cx="129.9" cy="382.9" r="1.2" fill="#60b0f8"/>
<circle cx="184.3" cy="371.1" r="1.2" fill="#80c8fc"/>
<circle cx="185.3" cy="375.8" r="1.2" fill="#3038b8"/>
<circle cx="107.2" cy="384.1" r="1.2" fill="#80c8fc"/>
<circle cx="147.1" cy="362.8" r="0.8" fill="#d05088"/>
<circle cx="198.9" cy="394.0" r="1.2" fill="#60b0f8"/>
<circle cx="152.4" cy="371.7" r="1.2" fill="#4a58d0"/>
<circle cx="100.7" cy="378.5" r="1.6" fill="#60b0f8"/>
<circle cx="196.0" cy="371.4" r="0.8" fill="#80c8fc"/>
<circle cx="112.1" cy="368.7" r="0.8" fill="#3038b8"/>
<circle cx="95.6" cy="382.6" r="1.6" fill="#4a58d0"/>
<circle cx="143.6" cy="393.3" r="0.8" fill="#60b0f8"/>
<circle cx="160.4" cy="396.1" r="1.6" fill="#3038b8"/>
<circle cx="118.3" cy="382.9" r="1.6" fill="#3038b8"/>
<circle cx="195.2" cy="386.8" r="1.2" fill="#d05088"/>
<circle cx="139.3" cy="367.9" r="0.8" fill="#d05088"/>
<circle cx="108.9" cy="396.8" r="1.2" fill="#3038b8"/>
<circle cx="189.3" cy="395.5" r="0.8" fill="#80c8fc"/>
<circle cx="176.5" cy="388.3" r="1.6" fill="#4a58d0"/>
<circle cx="96.1" cy="367.4" r="0.8" fill="#d05088"/>
<circle cx="164.5" cy="373.1" r="1.6" fill="#4a58d0"/>
<circle cx="173.4" cy="365.9" r="1.2" fill="#80c8fc"/>
<circle cx="118.3" cy="366.6" r="1.2" fill="#4a58d0"/>
<circle cx="108.5" cy="370.8" r="0.8" fill="#3038b8"/>
<circle cx="141.5" cy="395.8" r="0.8" fill="#d05088"/>
<circle cx="192.0" cy="370.2" r="1.6" fill="#80c8fc"/>
<circle cx="187.8" cy="367.2" r="1.2" fill="#3038b8"/>
<circle cx="191.9" cy="376.2" r="0.8" fill="#3038b8"/>
<circle cx="139.8" cy="374.6" r="0.8" fill="#4a58d0"/>
<circle cx="102.7" cy="375.5" r="1.2" fill="#d05088"/>
<circle cx="171.0" cy="368.7" r="1.2" fill="#60b0f8"/>
<circle cx="187.8" cy="378.2" r="0.8" fill="#80c8fc"/>
<circle cx="136.0" cy="371.1" r="0.8" fill="#80c8fc"/>
<circle cx="152.8" cy="373.0" r="0.8" fill="#80c8fc"/>
<circle cx="144.0" cy="373.8" r="1.2" fill="#3038b8"/>
<circle cx="106.9" cy="381.0" r="1.6" fill="#d05088"/>
<circle cx="151.6" cy="392.9" r="0.8" fill="#80c8fc"/>
<circle cx="173.0" cy="397.9" r="1.2" fill="#80c8fc"/>
<circle cx="199.8" cy="396.2" r="0.8" fill="#4a58d0"/>
<circle cx="121.8" cy="395.2" r="0.8" fill="#80c8fc"/>
<circle cx="105.9" cy="385.7" r="1.2" fill="#60b0f8"/>
<circle cx="127.5" cy="367.2" r="0.8" fill="#60b0f8"/>
<circle cx="121.5" cy="375.3" r="0.8" fill="#4a58d0"/>
<circle cx="114.0" cy="383.1" r="0.8" fill="#d05088"/>
<circle cx="147.4" cy="370.5" r="0.8" fill="#d05088"/>
<circle cx="156.1" cy="392.7" r="1.6" fill="#4a58d0"/>
<circle cx="173.7" cy="368.5" r="0.8" fill="#60b0f8"/>
<circle cx="163.7" cy="385.3" r="0.8" fill="#60b0f8"/>
<circle cx="123.9" cy="362.4" r="1.6" fill="#60b0f8"/>
<circle cx="134.9" cy="388.7" r="0.8" fill="#60b0f8"/>
<circle cx="179.2" cy="374.4" r="1.6" fill="#4a58d0"/>
<circle cx="99.9" cy="377.2" r="1.2" fill="#d05088"/>
<circle cx="185.9" cy="371.9" r="0.8" fill="#60b0f8"/>
<circle cx="181.5" cy="375.6" r="0.8" fill="#80c8fc"/>
<circle cx="153.2" cy="393.7" r="1.2" fill="#60b0f8"/>
<circle cx="192.5" cy="397.8" r="0.8" fill="#3038b8"/>
<circle cx="129.2" cy="371.1" r="1.2" fill="#4a58d0"/>
<circle cx="153.4" cy="395.2" r="1.2" fill="#3038b8"/>
<circle cx="194.9" cy="380.3" r="1.6" fill="#3038b8"/>
<circle cx="148.4" cy="381.9" r="0.8" fill="#d05088"/>
<circle cx="196.4" cy="370.3" r="0.8" fill="#d05088"/>
<circle cx="101.3" cy="371.3" r="0.8" fill="#3038b8"/>
<circle cx="100.6" cy="387.9" r="0.8" fill="#80c8fc"/>
<circle cx="91.9" cy="384.2" r="1.6" fill="#4a58d0"/>
<circle cx="147.5" cy="388.0" r="0.8" fill="#80c8fc"/>
<circle cx="185.6" cy="388.5" r="0.8" fill="#80c8fc"/>
<circle cx="103.5" cy="380.3" r="1.6" fill="#80c8fc"/>
<circle cx="102.1" cy="366.5" r="0.8" fill="#60b0f8"/>
<circle cx="155.1" cy="393.9" r="0.8" fill="#60b0f8"/>
<circle cx="140.8" cy="376.7" r="0.8" fill="#4a58d0"/>
<circle cx="166.3" cy="384.1" r="1.6" fill="#60b0f8"/>
<circle cx="94.0" cy="397.9" r="0.8" fill="#80c8fc"/>
<circle cx="127.2" cy="370.9" r="1.2" fill="#4a58d0"/>
<circle cx="182.7" cy="382.9" r="1.2" fill="#4a58d0"/>
<circle cx="183.2" cy="364.0" r="1.6" fill="#d05088"/>
<circle cx="195.4" cy="396.6" r="0.8" fill="#4a58d0"/>
<circle cx="162.9" cy="362.4" r="0.8" fill="#60b0f8"/>
<circle cx="110.6" cy="374.0" r="0.8" fill="#60b0f8"/>
<circle cx="163.6" cy="370.3" r="1.2" fill="#4a58d0"/>
<circle cx="175.4" cy="396.7" r="1.6" fill="#3038b8"/>
<circle cx="179.0" cy="394.7" r="0.8" fill="#3038b8"/>
<circle cx="185.2" cy="385.0" r="1.6" fill="#60b0f8"/>
<circle cx="120.1" cy="382.1" r="0.8" fill="#60b0f8"/>
<circle cx="101.1" cy="366.5" r="0.8" fill="#4a58d0"/>
<circle cx="116.0" cy="363.5" r="0.8" fill="#80c8fc"/>
<circle cx="128.2" cy="368.2" r="0.8" fill="#60b0f8"/>
<circle cx="195.5" cy="396.1" r="1.2" fill="#3038b8"/>
<circle cx="141.3" cy="381.8" r="0.8" fill="#4a58d0"/>
<circle cx="103.6" cy="366.9" r="1.2" fill="#4a58d0"/>
<circle cx="153.5" cy="372.1" r="1.6" fill="#3038b8"/>
<circle cx="171.4" cy="372.6" r="1.2" fill="#60b0f8"/>
<circle cx="166.4" cy="370.2" r="1.2" fill="#d05088"/>
<circle cx="150.3" cy="375.6" r="1.6" fill="#80c8fc"/>
<circle cx="157.4" cy="379.4" r="1.2" fill="#3038b8"/>
<circle cx="116.6" cy="370.2" r="1.6" fill="#60b0f8"/>
<circle cx="132.1" cy="383.7" r="0.8" fill="#80c8fc"/>
<circle cx="107.9" cy="397.2" r="1.2" fill="#60b0f8"/>
<circle cx="125.8" cy="372.0" r="0.8" fill="#80c8fc"/>
<circle cx="96.3" cy="362.8" r="1.6" fill="#3038b8"/>
<circle cx="156.7" cy="374.9" r="1.6" fill="#3038b8"/>
<circle cx="146.9" cy="392.9" r="1.2" fill="#3038b8"/>
<circle cx="147.3" cy="398.6" r="1.6" fill="#d05088"/>
<circle cx="135.8" cy="386.7" r="0.8" fill="#d05088"/>
<circle cx="157.8" cy="393.4" r="1.6" fill="#3038b8"/>
<circle cx="171.3" cy="389.5" r="1.2" fill="#80c8fc"/>
<circle cx="176.3" cy="388.2" r="1.6" fill="#d05088"/>
<circle cx="135.4" cy="365.8" r="1.2" fill="#60b0f8"/>
<circle cx="154.4" cy="380.4" r="1.6" fill="#d05088"/>
<circle cx="136.0" cy="391.0" r="1.6" fill="#60b0f8"/>
<circle cx="102.2" cy="393.5" r="1.6" fill="#4a58d0"/>
<circle cx="121.7" cy="375.0" r="1.2" fill="#4a58d0"/>
<circle cx="147.9" cy="384.0" r="1.6" fill="#80c8fc"/>
<circle cx="90.7" cy="389.6" r="1.2" fill="#4a58d0"/>
<circle cx="138.8" cy="368.8" r="1.2" fill="#d05088"/>
<circle cx="137.9" cy="375.9" r="0.8" fill="#3038b8"/>
<circle cx="180.4" cy="374.2" r="1.6" fill="#d05088"/>
<circle cx="195.5" cy="369.6" r="1.2" fill="#3038b8"/>
<circle cx="92.8" cy="371.5" r="1.2" fill="#80c8fc"/>
<circle cx="191.2" cy="390.6" r="1.6" fill="#60b0f8"/>
<circle cx="199.8" cy="381.1" r="1.6" fill="#4a58d0"/>
<circle cx="132.8" cy="375.2" r="1.6" fill="#80c8fc"/>
<circle cx="139.8" cy="362.4" r="0.8" fill="#60b0f8"/>
<circle cx="115.2" cy="377.2" r="1.6" fill="#4a58d0"/>
<circle cx="161.3" cy="396.4" r="0.8" fill="#d05088"/>
<circle cx="196.1" cy="380.0" r="1.2" fill="#60b0f8"/>
<circle cx="188.9" cy="383.7" r="1.6" fill="#60b0f8"/>
<circle cx="172.1" cy="365.4" r="1.2" fill="#80c8fc"/>
<circle cx="130.3" cy="364.8" r="1.2" fill="#60b0f8"/>
<circle cx="109.3" cy="386.3" r="1.2" fill="#80c8fc"/>
<circle cx="180.3" cy="398.6" r="1.2" fill="#d05088"/>
<circle cx="147.6" cy="392.2" r="0.8" fill="#60b0f8"/>
<circle cx="188.2" cy="377.3" r="0.8" fill="#60b0f8"/>
<circle cx="156.3" cy="375.1" r="1.6" fill="#3038b8"/>
<circle cx="166.1" cy="362.4" r="0.8" fill="#80c8fc"/>
<circle cx="168.2" cy="382.5" r="1.2" fill="#4a58d0"/>
<circle cx="182.6" cy="383.7" r="1.6" fill="#3038b8"/>
<circle cx="111.6" cy="380.4" r="1.6" fill="#60b0f8"/>
<circle cx="119.3" cy="385.9" r="1.6" fill="#60b0f8"/>
<circle cx="199.7" cy="383.3" r="1.2" fill="#60b0f8"/>
<circle cx="103.4" cy="367.8" r="1.6" fill="#3038b8"/>
<circle cx="93.2" cy="364.8" r="1.6" fill="#4a58d0"/>
<circle cx="180.5" cy="384.7" r="0.8" fill="#3038b8"/>
<circle cx="165.3" cy="383.4" r="0.8" fill="#d05088"/>
<circle cx="128.9" cy="368.3" r="1.2" fill="#3038b8"/>
<circle cx="184.5" cy="397.1" r="0.8" fill="#80c8fc"/>
<circle cx="111.1" cy="385.1" r="0.8" fill="#3038b8"/>
<circle cx="114.2" cy="376.7" r="0.8" fill="#4a58d0"/>
<circle cx="96.0" cy="370.8" r="0.8" fill="#3038b8"/>
<circle cx="107.5" cy="383.7" r="0.8" fill="#80c8fc"/>
<circle cx="90.7" cy="394.1" r="1.2" fill="#80c8fc"/>
<circle cx="136.0" cy="371.3" r="1.2" fill="#3038b8"/>
<circle cx="116.7" cy="376.4" r="1.6" fill="#60b0f8"/>
<circle cx="114.4" cy="373.4" r="1.6" fill="#4a58d0"/>
<circle cx="92.5" cy="394.1" r="0.8" fill="#d05088"/>
<circle cx="108.7" cy="376.0" r="0.8" fill="#80c8fc"/>
<circle cx="133.6" cy="375.4" r="1.2" fill="#60b0f8"/>
<circle cx="185.9" cy="374.4" r="1.6" fill="#3038b8"/>
<circle cx="195.7" cy="377.6" r="1.2" fill="#60b0f8"/>
<circle cx="116.9" cy="369.1" r="1.2" fill="#80c8fc"/>
<circle cx="116.1" cy="363.3" r="1.6" fill="#3038b8"/>
<circle cx="127.6" cy="367.8" r="1.6" fill="#d05088"/>
<circle cx="100.2" cy="372.0" r="0.8" fill="#60b0f8"/>
<circle cx="138.8" cy="392.9" r="0.8" fill="#d05088"/>
<circle cx="130.5" cy="370.0" r="1.2" fill="#4a58d0"/>
<circle cx="159.2" cy="383.5" r="1.2" fill="#4a58d0"/>
<circle cx="145.5" cy="370.4" r="1.2" fill="#d05088"/>
<circle cx="193.6" cy="398.9" r="1.6" fill="#4a58d0"/>
<circle cx="154.6" cy="375.6" r="0.8" fill="#4a58d0"/>
<circle cx="156.9" cy="369.9" r="0.8" fill="#60b0f8"/>
<circle cx="100.1" cy="393.5" r="1.6" fill="#4a58d0"/>
<circle cx="93.2" cy="388.6" r="0.8" fill="#80c8fc"/>
<circle cx="91.7" cy="388.3" r="1.6" fill="#d05088"/>
<circle cx="175.4" cy="370.6" r="0.8" fill="#3038b8"/>
<circle cx="97.5" cy="395.8" r="1.6" fill="#80c8fc"/>
<circle cx="111.2" cy="388.6" r="0.8" fill="#d05088"/>
<circle cx="121.7" cy="392.2" r="1.2" fill="#80c8fc"/>
<circle cx="129.1" cy="393.2" r="1.2" fill="#d05088"/>
<circle cx="193.0" cy="368.5" r="1.2" fill="#80c8fc"/>
<circle cx="188.7" cy="362.9" r="1.6" fill="#4a58d0"/>
<circle cx="117.3" cy="393.3" r="1.2" fill="#3038b8"/>
<circle cx="110.0" cy="366.3" r="1.6" fill="#d05088"/>
<circle cx="168.4" cy="363.5" r="0.8" fill="#60b0f8"/>
<circle cx="107.8" cy="369.3" r="1.2" fill="#d05088"/>
<circle cx="131.9" cy="363.5" r="1.2" fill="#d05088"/>
<rect x="165" y="335" width="55" height="52" fill="#4a90e0"/>
<rect x="167" y="338" width="11" height="27" fill="#e04890"/>
<rect x="180" y="340" width="8" height="28" fill="#6ab0f0" opacity="0.7"/>
<rect x="208" y="344" width="12" height="21" fill="#3418a8"/>
<rect x="165" y="368" width="55" height="5" fill="#c050a0" opacity="0.6"/>
<rect x="200" y="378" width="20" height="12" fill="#3a30b8"/>
<rect x="147" y="346" width="13" height="7" fill="#f09040"/>
<rect x="20" y="278" width="2" height="121" fill="#c050a0"/>
</svg>
<!-- BLENDER WINDOW -->
<div class="a" style="left:602px;top:62px;width:1324px;height:867px;background:#171717;border-radius:7px 0 0 7px;border:1px solid #3b3b3b;box-shadow:0 4px 40px rgba(0,0,0,0.45)"></div>
<div class="a" style="left:602px;top:63px;width:1318px;height:29px;background:#1f1f1f;border-radius:6px 0 0 0"></div>
<svg style="left:611px;top:71px" width="16" height="13" viewBox="0 0 16 13"><path d="M1 9 L7 4 L4 2 L9 2 Q13 2 14.5 6 Q15 11 10 12 Q6 12.5 5.5 9 L2 11.5 Z" fill="#f08a1c"/><circle cx="10" cy="7.5" r="2.6" fill="#fff"/><circle cx="10" cy="7.5" r="1.5" fill="#2a6fc0"/></svg>
<span class="t" style="left:632px;top:71.5px;font-size:11.4px;color:#9a9a9a">* (Unsaved) - Blender 4.2.1 LTS</span>
<div class="a" style="left:1823px;top:77px;width:11px;height:1px;background:#aaa"></div>
<div class="a" style="left:1868px;top:72px;width:10px;height:10px;border:1px solid #aaa"></div>
<svg style="left:1913px;top:72px" width="11" height="11" viewBox="0 0 11 11"><path d="M0 0 L11 11 M11 0 L0 11" stroke="#aaa" stroke-width="1"/></svg>
<!-- topbar -->
<div class="a" style="left:602px;top:93px;width:1318px;height:27px;background:#181818"></div>
<svg style="left:611px;top:99px" width="16" height="14" viewBox="0 0 16 14"><path d="M1 10 L6 5.5 L3.5 3.5 L8 3.5" fill="none" stroke="#ddd" stroke-width="2"/><circle cx="10" cy="8.5" r="4.5" fill="none" stroke="#ddd" stroke-width="2"/><circle cx="10" cy="8.5" r="1.6" fill="#ddd"/><path d="M6 3 Q10 1 13 3.5" fill="none" stroke="#ddd" stroke-width="2"/></svg>
<span class="t bt" style="left:637px;top:101px">File</span>
<span class="t bt" style="left:671px;top:101px">Edit</span>
<span class="t bt" style="left:707px;top:101px">Render</span>
<span class="t bt" style="left:759px;top:101px">Window</span>
<span class="t bt" style="left:818px;top:101px">Help</span>
<div class="a" style="left:867px;top:99px;width:54px;height:21px;background:#2b2b2b;border-radius:4px 4px 0 0"></div>
<span class="wt" style="left:876px;color:#e6e6e6">Layout</span>
<span class="wt" style="left:932px">Modeling</span>
<span class="wt" style="left:1002px">Sculpting</span>
<span class="wt" style="left:1073px">UV Editing</span>
<span class="wt" style="left:1150px">Texture Paint</span>
<span class="wt" style="left:1240px">Shading</span>
<span class="wt" style="left:1304px">Animation</span>
<span class="wt" style="left:1379px">Rendering</span>
<span class="wt" style="left:1453px">Compositing</span>
<span class="wt" style="left:1542px">Geometry I</span>
<!-- scene / viewlayer -->
<div class="btn" style="left:1606px;top:96px;width:172px;height:19px;background:#1f1f1f;border:1px solid #2d2d2d"></div>
<div class="a" style="left:1738px;top:97px;width:20px;height:17px;background:#3a3a3a"></div>
<div class="a" style="left:1637px;top:97px;width:1px;height:17px;background:#2d2d2d"></div>
<span class="t bt" style="left:1645px;top:100px">Scene</span>
<svg style="left:1612px;top:98px" width="16" height="16" viewBox="0 0 16 16"><path d="M5 1 Q1 7 1 9.5 A3.5 3.5 0 0 0 8 9.5 Q8 7 5 1 Z" fill="#ddd"/><circle cx="12" cy="3" r="2" fill="#ddd"/><circle cx="10.5" cy="11" r="3.5" stroke="#ddd" stroke-width="1.2" fill="#1f1f1f"/></svg>
<svg class="chev" style="left:1628px;top:104px" width="7" height="5" viewBox="0 0 7 5"><path d="M0.5 0.5 L3.5 3.5 L6.5 0.5" stroke="#ccc" stroke-width="1.2" fill="none"/></svg>
<svg style="left:1719px;top:98px" width="16" height="16" viewBox="0 0 16 16"><path d="M1 15 L6 10 M4 6 L10 12 M5 7 L11 1 L15 5 L9 11" stroke="#aaa" stroke-width="1.1" fill="none"/></svg>
<svg style="left:1741px;top:98px" width="16" height="16" viewBox="0 0 16 16"><path d="M4 4 V1 H11 L14 4 V11 H11 M11 1 V4 H14" stroke="#ddd" stroke-width="1.1" fill="none"/><rect x="1.5" y="4.5" width="9.5" height="10" stroke="#ddd" stroke-width="1.1" fill="none"/></svg>
<svg style="left:1762px;top:100px" width="11" height="11" viewBox="0 0 11 11"><path d="M1 1 L10 10 M10 1 L1 10" stroke="#777" stroke-width="1.1"/></svg>
<div class="btn" style="left:1783px;top:96px;width:140px;height:19px;background:#1f1f1f;border:1px solid #2d2d2d"></div>
<div class="a" style="left:1814px;top:97px;width:1px;height:17px;background:#2d2d2d"></div>
<div class="a" style="left:1894px;top:97px;width:20px;height:17px;background:#3a3a3a"></div>
<span class="t bt" style="left:1822px;top:100px">ViewLayer</span>
<svg style="left:1788px;top:98px" width="16" height="16" viewBox="0 0 16 16"><path d="M1 5 V15 H11 M3 3 V13 H13" stroke="#ddd" stroke-width="1" fill="none"/><rect x="5" y="1" width="10" height="10" stroke="#ddd" stroke-width="1.2" fill="none"/><path d="M6 10 L9 5 L12 10 Z" fill="#ddd"/><circle cx="12.5" cy="3.5" r="1" fill="#ddd"/></svg>
<svg class="chev" style="left:1805px;top:104px" width="7" height="5" viewBox="0 0 7 5"><path d="M0.5 0.5 L3.5 3.5 L6.5 0.5" stroke="#ccc" stroke-width="1.2" fill="none"/></svg>
<svg style="left:1897px;top:98px" width="16" height="16" viewBox="0 0 16 16"><path d="M4 4 V1 H11 L14 4 V11 H11 M11 1 V4 H14" stroke="#ddd" stroke-width="1.1" fill="none"/><rect x="1.5" y="4.5" width="9.5" height="10" stroke="#ddd" stroke-width="1.1" fill="none"/></svg>
<!-- VIEWPORT -->
<div class="a" style="left:603px;top:120px;width:1105px;height:725px;background:#3d3d3d;border-radius:6px"></div>
<div class="a" style="left:603px;top:120px;width:1105px;height:26px;background:#373737;border-radius:6px 6px 0 0"></div>
<div class="a" style="left:603px;top:146px;width:308px;height:25px;background:#353535;border-radius:0 0 6px 0"></div>
<div class="a" style="left:1627px;top:146px;width:81px;height:25px;background:#333333;border-radius:0 0 0 6px"></div>
<!-- TIMELINE -->
<div class="a" style="left:603px;top:848px;width:1105px;height:59px;background:#1d1d1d;border-radius:6px"></div>
<div class="a" style="left:603px;top:848px;width:1105px;height:25px;background:#303030;border-radius:6px 6px 0 0"></div>
<!-- OUTLINER -->
<div class="a" style="left:1711px;top:120px;width:215px;height:252px;background:#282828;border-radius:6px"></div>
<div class="a" style="left:1711px;top:120px;width:215px;height:25px;background:#2e2e2e;border-radius:6px 6px 0 0"></div>
<!-- PROPERTIES -->
<div class="a" style="left:1711px;top:376px;width:215px;height:532px;background:#2f2f2f;border-radius:6px"></div>
<div class="a" style="left:1711px;top:401px;width:28px;height:507px;background:#1f1f1f"></div>
<!-- STATUS BAR -->
<div class="a" style="left:602px;top:908px;width:1318px;height:20px;background:#181818;border-radius:0 0 0 6px"></div>

<!-- HEADER ROW 1 -->
<div class="btn" style="left:612px;top:123px;width:30px;height:18px"></div>
<svg style="left:615px;top:124px" width="16" height="15" viewBox="0 0 16 15"><path d="M1 9 H13 M1 13 H13 M4 7 L3 15 M11 7 L10 15" stroke="#ddd" stroke-width="1.2" fill="none"/><circle cx="10" cy="4" r="3.5" fill="#ddd"/></svg>
<svg class="chev" style="left:633px;top:130px" width="7" height="5" viewBox="0 0 7 5"><path d="M0.5 0.5 L3.5 3.5 L6.5 0.5" stroke="#ccc" stroke-width="1.2" fill="none"/></svg>
<div class="btn" style="left:649px;top:123px;width:109px;height:18px"></div>
<svg style="left:653px;top:125px" width="15" height="15" viewBox="0 0 15 15"><path d="M1 4 V1 H4 M11 1 H14 V4 M14 11 V14 H11 M4 14 H1 V11" stroke="#ddd" stroke-width="1.2" fill="none"/><rect x="3.5" y="3.5" width="8" height="8" fill="#ddd"/></svg>
<span class="t bt" style="left:674px;top:127px">Object Mode</span>
<svg class="chev" style="left:748px;top:131px" width="7" height="5" viewBox="0 0 7 5"><path d="M0.5 0.5 L3.5 3.5 L6.5 0.5" stroke="#ccc" stroke-width="1.2" fill="none"/></svg>
<span class="t bt" style="left:771px;top:127px">View</span>
<span class="t bt" style="left:812px;top:127px">Select</span>
<span class="t bt" style="left:859px;top:127px">Add</span>
<span class="t bt" style="left:896px;top:127px">Object</span>
<!-- Global etc -->
<div class="btn" style="left:1031px;top:123px;width:76px;height:18px"></div>
<svg style="left:1035px;top:125px" width="15" height="15" viewBox="0 0 15 15"><path d="M2 1 V13 H14 M2 13 L11 4 M0 3 L2 1 L4 3 M12 11 L14 13 L12 15 M8 4 H11 V7" stroke="#ddd" stroke-width="1.1" fill="none"/></svg>
<span class="t bt" style="left:1056px;top:127px">Global</span>
<svg class="chev" style="left:1097px;top:131px" width="7" height="5" viewBox="0 0 7 5"><path d="M0.5 0.5 L3.5 3.5 L6.5 0.5" stroke="#ccc" stroke-width="1.2" fill="none"/></svg>
<div class="btn" style="left:1114px;top:123px;width:30px;height:18px"></div>
<svg style="left:1117px;top:125px" width="15" height="15" viewBox="0 0 15 15"><circle cx="9" cy="5" r="4.5" stroke="#ddd" stroke-width="1.1" fill="none"/><circle cx="5" cy="9" r="4.5" stroke="#ddd" stroke-width="1.1" fill="none"/><circle cx="7" cy="7" r="1.3" fill="#ddd"/></svg>
<svg class="chev" style="left:1134px;top:131px" width="7" height="5" viewBox="0 0 7 5"><path d="M0.5 0.5 L3.5 3.5 L6.5 0.5" stroke="#ccc" stroke-width="1.2" fill="none"/></svg>
<div class="btn" style="left:1151px;top:123px;width:50px;height:18px"></div>
<div class="a" style="left:1151px;top:123px;width:18px;height:18px;background:#545454;border-radius:4px 0 0 4px"></div>
<svg style="left:1153px;top:125px" width="14" height="14" viewBox="0 0 14 14"><path d="M4 12 Q1 9 2 5 Q4 1 8 1 Q12 1 12 5 Q12 8 9 9 L7 7" stroke="#999" stroke-width="1.3" fill="none"/></svg>
<svg style="left:1171px;top:125px" width="16" height="14" viewBox="0 0 16 14"><rect x="11" y="1" width="3" height="3" fill="#ddd"/><path d="M1 8 V13 M1 10 H13 M5 8 V13 M9 8 V13 M13 8 V13" stroke="#ddd" stroke-width="1"/></svg>
<svg class="chev" style="left:1191px;top:131px" width="7" height="5" viewBox="0 0 7 5"><path d="M0.5 0.5 L3.5 3.5 L6.5 0.5" stroke="#ccc" stroke-width="1.2" fill="none"/></svg>
<div class="btn" style="left:1208px;top:123px;width:50px;height:18px"></div>
<div class="a" style="left:1208px;top:123px;width:18px;height:18px;background:#454545;border-radius:4px 0 0 4px"></div>
<svg style="left:1210px;top:125px" width="14" height="14" viewBox="0 0 14 14"><circle cx="7" cy="7" r="5.5" stroke="#888" stroke-width="1" fill="none"/><circle cx="7" cy="7" r="1.8" fill="#aaa"/></svg>
<svg style="left:1230px;top:125px" width="16" height="14" viewBox="0 0 16 14"><path d="M1 13 Q5 13 7 3 Q8 0 9 3 Q11 13 15 13" stroke="#bbb" stroke-width="1.1" fill="none"/></svg>
<svg class="chev" style="left:1248px;top:131px" width="7" height="5" viewBox="0 0 7 5"><path d="M0.5 0.5 L3.5 3.5 L6.5 0.5" stroke="#555" stroke-width="1.2" fill="none"/></svg>
<!-- right header -->
<div class="btn" style="left:1453px;top:123px;width:30px;height:18px"></div>
<svg style="left:1455px;top:124px" width="16" height="16" viewBox="0 0 16 16"><path d="M1 4 Q5 -1 10 4 Q5 9 1 4 Z" stroke="#ddd" stroke-width="1.1" fill="none" transform="translate(4,0)"/><circle cx="9.5" cy="4" r="1.5" fill="#ddd"/><path d="M1 7 L8 10 L5 11 L4 15 Z" fill="#ddd"/></svg>
<svg class="chev" style="left:1474px;top:131px" width="7" height="5" viewBox="0 0 7 5"><path d="M0.5 0.5 L3.5 3.5 L6.5 0.5" stroke="#ccc" stroke-width="1.2" fill="none"/></svg>
<div class="btn" style="left:1490px;top:123px;width:38px;height:18px"></div>
<div class="a" style="left:1490px;top:123px;width:18px;height:18px;background:#4772b3;border-radius:4px 0 0 4px"></div>
<svg style="left:1492px;top:125px" width="14" height="14" viewBox="0 0 14 14"><path d="M2 12 Q3 4 9 2 M9 1 H13 V5 M13 1 L8 6" stroke="#fff" stroke-width="1.1" fill="none"/><circle cx="2.5" cy="12" r="1.5" stroke="#fff" stroke-width="1" fill="none"/></svg>
<svg class="chev" style="left:1515px;top:131px" width="7" height="5" viewBox="0 0 7 5"><path d="M0.5 0.5 L3.5 3.5 L6.5 0.5" stroke="#ccc" stroke-width="1.2" fill="none"/></svg>
<div class="btn" style="left:1535px;top:123px;width:38px;height:18px"></div>
<div class="a" style="left:1535px;top:123px;width:18px;height:18px;background:#4772b3;border-radius:4px 0 0 4px"></div>
<svg style="left:1537px;top:125px" width="14" height="14" viewBox="0 0 14 14"><circle cx="5.5" cy="8.5" r="4.5" stroke="#fff" stroke-width="1.1" fill="none"/><circle cx="8.5" cy="5.5" r="4.5" fill="#fff"/></svg>
<svg class="chev" style="left:1560px;top:131px" width="7" height="5" viewBox="0 0 7 5"><path d="M0.5 0.5 L3.5 3.5 L6.5 0.5" stroke="#ccc" stroke-width="1.2" fill="none"/></svg>
<div class="btn" style="left:1580px;top:123px;width:18px;height:18px;background:#454545"></div>
<svg style="left:1582px;top:125px" width="14" height="14" viewBox="0 0 14 14"><rect x="1" y="4" width="9" height="9" stroke="#ccc" stroke-width="1.1" fill="none"/><path d="M4 4 V1 H13 V10 H10" stroke="#ccc" stroke-width="1.1" fill="none"/></svg>
<div class="btn" style="left:1605px;top:123px;width:95px;height:18px"></div>
<div class="a" style="left:1605px;top:123px;width:19px;height:18px;background:#454545;border-radius:4px 0 0 4px"></div>
<div class="a" style="left:1624px;top:123px;width:19px;height:18px;background:#4772b3"></div>
<div class="a" style="left:1643px;top:123px;width:19px;height:18px;background:#454545"></div>
<div class="a" style="left:1662px;top:123px;width:19px;height:18px;background:#454545"></div>
<svg style="left:1607px;top:125px" width="14" height="14" viewBox="0 0 14 14"><circle cx="7" cy="7" r="6" stroke="#ccc" stroke-width="1" fill="none"/><ellipse cx="7" cy="7" rx="2.5" ry="6" stroke="#ccc" stroke-width="1" fill="none"/><path d="M1 7 H13" stroke="#ccc" stroke-width="1"/></svg>
<svg style="left:1626px;top:125px" width="14" height="14" viewBox="0 0 14 14"><circle cx="7" cy="7" r="6.2" fill="#fff"/></svg>
<svg style="left:1645px;top:125px" width="14" height="14" viewBox="0 0 14 14"><circle cx="7" cy="7" r="6" stroke="#ccc" stroke-width="1" fill="none"/><path d="M7 1 A6 6 0 0 0 1 7 A6 6 0 0 0 7 13 Z M7 7 H13 A6 6 0 0 0 7 1 Z" fill="#bbb"/></svg>
<svg style="left:1664px;top:125px" width="14" height="14" viewBox="0 0 14 14"><circle cx="7" cy="7" r="6" stroke="#ccc" stroke-width="1" fill="none"/><path d="M3.5 6 Q4 3 7 3" stroke="#ccc" stroke-width="1" fill="none"/></svg>
<svg class="chev" style="left:1687px;top:131px" width="7" height="5" viewBox="0 0 7 5"><path d="M0.5 0.5 L3.5 3.5 L6.5 0.5" stroke="#ccc" stroke-width="1.2" fill="none"/></svg>
<!-- HEADER ROW 2 -->
<span class="t" style="left:611px;top:153px;font-size:12px;color:#c2c2c2">Orientation:</span>
<div class="btn" style="left:678px;top:149px;width:98px;height:18px"></div>
<svg style="left:682px;top:150px" width="16" height="16" viewBox="0 0 16 16"><path d="M5.5 6.5 V1.5 M3.5 3.5 L5.5 1.5 L7.5 3.5 M8.5 9.5 H14 M12 7.5 L14 9.5 L12 11.5 M3.8 11.5 L1.2 14.2 M1.2 11.5 V14.2 H4" stroke="#aaa" stroke-width="1" fill="none"/><circle cx="6" cy="9.5" r="2" fill="#ddd"/></svg>
<span class="t bt" style="left:703px;top:153px">Default</span>
<svg class="chev" style="left:765px;top:157px" width="7" height="5" viewBox="0 0 7 5"><path d="M0.5 0.5 L3.5 3.5 L6.5 0.5" stroke="#ccc" stroke-width="1.2" fill="none"/></svg>
<span class="t" style="left:790px;top:153px;font-size:12px;color:#c2c2c2">Drag:</span>
<div class="btn" style="left:828px;top:149px;width:74px;height:18px"></div>
<span class="t bt" style="left:835px;top:153px">Select Box</span>
<svg class="chev" style="left:893px;top:157px" width="7" height="5" viewBox="0 0 7 5"><path d="M0.5 0.5 L3.5 3.5 L6.5 0.5" stroke="#ccc" stroke-width="1.2" fill="none"/></svg>
<div class="btn" style="left:1636px;top:149px;width:65px;height:18px"></div>
<span class="t bt" style="left:1643px;top:153px">Options</span>
<svg class="chev" style="left:1690px;top:157px" width="7" height="5" viewBox="0 0 7 5"><path d="M0.5 0.5 L3.5 3.5 L6.5 0.5" stroke="#ccc" stroke-width="1.2" fill="none"/></svg>

<!-- VIEWPORT TOOLBAR -->
<div class="a" style="left:611px;top:180px;width:38px;height:67px;background:#282828;border-radius:5px;box-shadow:0 1px 1px #2a2a2a"></div>
<div class="a" style="left:611px;top:213px;width:38px;height:1px;background:#1f1f1f"></div>
<div class="a" style="left:611px;top:255px;width:38px;height:137px;background:#282828;border-radius:5px"></div>
<div class="a" style="left:611px;top:255px;width:38px;height:33px;background:#4772b3;border-radius:5px 5px 0 0"></div>
<div class="a" style="left:611px;top:322px;width:38px;height:1px;background:#1f1f1f"></div>
<div class="a" style="left:611px;top:357px;width:38px;height:1px;background:#1f1f1f"></div>
<div class="a" style="left:611px;top:400px;width:38px;height:67px;background:#282828;border-radius:5px"></div>
<div class="a" style="left:611px;top:433px;width:38px;height:1px;background:#1f1f1f"></div>
<div class="a" style="left:611px;top:475px;width:38px;height:33px;background:#282828;border-radius:5px"></div>
<!-- select box icon -->
<svg style="left:617px;top:184px" width="26" height="26" viewBox="0 0 24 24"><rect x="2" y="2" width="20" height="20" stroke="#e0a040" stroke-width="1.3" stroke-dasharray="3 2" fill="none"/><path d="M9 7 V18 L12 15 L17 14 Z" fill="#e0e0e0"/><path d="M24.5 21 V24.5 H21 Z" fill="#999"/></svg>
<svg style="left:617px;top:218px" width="26" height="26" viewBox="0 0 24 24"><circle cx="12" cy="12" r="10" stroke="#fff" stroke-width="1.8" fill="none"/><circle cx="12" cy="12" r="10" stroke="#b03030" stroke-width="1.8" stroke-dasharray="4 4" fill="none"/><path d="M12 5 V10 M12 14 V19 M5 12 H10 M14 12 H19" stroke="#999" stroke-width="1.3"/></svg>
<svg style="left:617px;top:259px" width="26" height="26" viewBox="0 0 24 24"><path d="M12 1 L15 5 H9 Z M12 23 L15 19 H9 Z M1 12 L5 9 V15 Z M23 12 L19 9 V15 Z" fill="#fff"/><path d="M12 5 V9 M12 15 V19 M5 12 H9 M15 12 H19" stroke="#fff" stroke-width="1.5"/></svg>
<svg style="left:617px;top:293px" width="26" height="26" viewBox="0 0 24 24"><path d="M5 9 Q8 3 14 4 Q18 5 20 9 M19 15 Q16 21 10 20 Q6 19 4 15" stroke="#ddd" stroke-width="1.3" fill="none"/><path d="M12 8 L16 12 L12 16 L8 12 Z" fill="#ccc"/><path d="M1 12 H7 L4 16 Z M17 12 H23 L20 8 Z" fill="#fff"/></svg>
<svg style="left:617px;top:327px" width="26" height="26" viewBox="0 0 24 24"><rect x="3" y="12" width="9" height="9" fill="#ddd"/><path d="M8 3 H21 V16 M21 21 H16" stroke="#ccc" stroke-width="1.3" fill="none"/><path d="M13 11 L19 5 M15 5 H19 V9" stroke="#fff" stroke-width="1.3" fill="none"/><path d="M24.5 21 V24.5 H21 Z" fill="#999"/></svg>
<svg style="left:617px;top:362px" width="26" height="26" viewBox="0 0 24 24"><circle cx="12" cy="12" r="9" stroke="#ddd" stroke-width="1.3" stroke-dasharray="5 4" fill="none"/><rect x="8" y="8" width="8" height="8" fill="#ddd"/><path d="M12 1 L14 4 H10 Z M12 23 L14 20 H10 Z M1 12 L4 10 V14 Z M23 12 L20 10 V14 Z" fill="#fff"/></svg>
<svg style="left:617px;top:404px" width="26" height="26" viewBox="0 0 24 24"><path d="M3 14 L5 9 L15 1 L18 4 L8 12 Z" stroke="#ddd" stroke-width="1.3" fill="none"/><path d="M2 20 Q7 14 12 19 Q16 22 22 17" stroke="#7fd0a0" stroke-width="1.3" fill="none"/><path d="M24.5 21 V24.5 H21 Z" fill="#999"/></svg>
<svg style="left:617px;top:438px" width="26" height="26" viewBox="0 0 24 24"><path d="M4 2 V21 H22" stroke="#ddd" stroke-width="2" fill="none"/><path d="M4 8 Q16 8 19 20 H4 Z" fill="#80d8a0"/><path d="M4 5 H7 M4 9 H6 M4 13 H7 M4 17 H6" stroke="#ddd" stroke-width="1"/></svg>
<svg style="left:617px;top:479px" width="26" height="26" viewBox="0 0 24 24"><path d="M7 9 L11 5 H21 V16 L17 20 H7 Z M7 9 H17 V20 M17 9 L21 5" stroke="#80d8a0" stroke-width="1.3" fill="none"/><path d="M4 1 V8 M0.5 4.5 H7.5" stroke="#80d8a0" stroke-width="1.8"/><path d="M24.5 21 V24.5 H21 Z" fill="#999"/></svg>
<!-- overlay text -->
<span class="t" style="left:667px;top:181px;font-size:12px;color:#e6e6e6">User Perspective</span>
<span class="t" style="left:667px;top:199px;font-size:12px;color:#e6e6e6">(1) Collection | Plane.005</span>
<!-- OBJECT -->
<svg style="left:0;top:0" width="1920" height="960" viewBox="0 0 1920 960">
<path d="M1110 281 L1167 238.5 L1301.5 238.5 L1359 281" stroke="#2a2a2a" stroke-width="1" fill="none"/>
<path d="M1301.5 238.5 L1359 281" stroke="#262626" stroke-width="3" fill="none"/>
<path d="M1110 281 L1113.5 546" stroke="#2c2c2c" stroke-width="1.2" fill="none"/>
<path d="M1356 282 L1361 282 L1345 547 L1340 547 Z" fill="#6e6e6e"/>
<path d="M1113.5 545 L1167 579.5 L1287 581 L1341 546 L1345 551 L1288 587.5 L1166 586.5 L1112 551 Z" fill="#747474"/>
<path d="M1167 580 L1166 587 M1287 581 L1288 588" stroke="#5e5e5e" stroke-width="1"/>
</svg>
<!-- 3D cursor -->
<svg style="left:0;top:0" width="1920" height="960" viewBox="0 0 1920 960"><path d="M649 302 L1108 310.5" stroke="#7a4040" stroke-width="1" opacity="0.2"/></svg>
<svg style="left:1108px;top:291px" width="40" height="40" viewBox="0 0 40 40"><path d="M20.5 0 V12 M20.5 29 V40 M0 20.5 H12 M29 20.5 H40" stroke="#151515" stroke-width="1"/><path d="M20.5 14 V27 M14 20.5 H27" stroke="#222" stroke-width="1" opacity="0.5"/><circle cx="20.5" cy="20.5" r="10" stroke="#f0f0f0" stroke-width="1.7" fill="none"/><circle cx="20.5" cy="20.5" r="10" stroke="#e82020" stroke-width="1.7" stroke-dasharray="3.93 3.93" fill="none"/></svg>
<div class="a" style="left:1110px;top:419px;width:5px;height:5px;border-radius:3px;background:#f0a020;box-shadow:0 0 0 0.5px #222"></div>
<!-- GIZMO -->
<svg style="left:1600px;top:170px" width="110" height="100" viewBox="1600 170 110 100">
<line x1="1660" y1="221" x2="1689" y2="221" stroke="#8ac820" stroke-width="2"/>
<line x1="1657" y1="228" x2="1657" y2="252" stroke="#3a7ad0" stroke-width="2"/>
<circle cx="1657" cy="190" r="8" fill="#3a5570" stroke="#4a90e0" stroke-width="1.2"/>
<circle cx="1625" cy="221" r="8" fill="#4a5a30" stroke="#80c020" stroke-width="1.2"/>
<circle cx="1657" cy="214" r="7.5" fill="#8a3a48"/>
<text x="1657" y="218.5" font-size="11" font-family="Liberation Sans" font-weight="bold" fill="#2a1010" text-anchor="middle">X</text>
<circle cx="1657" cy="228" r="8.5" fill="#7a3a45" stroke="#f04060" stroke-width="1.5"/>
<circle cx="1689" cy="221" r="8.5" fill="#80c020"/>
<text x="1689" y="225.5" font-size="11" font-family="Liberation Sans" font-weight="bold" fill="#1a2a00" text-anchor="middle">Y</text>
<circle cx="1657" cy="252" r="8.5" fill="#3a7ad0"/>
<text x="1657" y="256.5" font-size="11" font-family="Liberation Sans" font-weight="bold" fill="#0a1a30" text-anchor="middle">Z</text>
</svg>
<div class="a" style="left:1672px;top:261px;width:28px;height:28px;border-radius:14px;background:#363636"></div>
<div class="a" style="left:1672px;top:291px;width:28px;height:28px;border-radius:14px;background:#363636"></div>
<div class="a" style="left:1672px;top:322px;width:28px;height:28px;border-radius:14px;background:#363636"></div>
<div class="a" style="left:1672px;top:353px;width:28px;height:28px;border-radius:14px;background:#363636"></div>
<svg style="left:1677px;top:266px" width="18" height="18" viewBox="0 0 18 18"><circle cx="10.5" cy="7.5" r="5.5" stroke="#eee" stroke-width="1.5" fill="none"/><path d="M6.5 11.5 L2 16" stroke="#eee" stroke-width="2"/><path d="M10.5 5 V10 M8 7.5 H13" stroke="#eee" stroke-width="1.3"/></svg>
<svg style="left:1677px;top:296px" width="18" height="18" viewBox="0 0 18 18"><path d="M5 10 V5 Q5.5 3.5 6.5 5 V9 V3 Q7.5 1.5 8.5 3 V9 V3.5 Q9.5 2 10.5 3.5 V9 V5.5 Q11.5 4 12.5 5.5 V11 Q12 16 8 16.5 Q5 16.5 2.5 12 Q2.5 10.5 5 11 Z" fill="#eee"/></svg>
<svg style="left:1677px;top:327px" width="18" height="18" viewBox="0 0 18 18"><circle cx="6" cy="5" r="3" stroke="#eee" stroke-width="1.2" fill="none"/><circle cx="12" cy="5" r="3" stroke="#eee" stroke-width="1.2" fill="none"/><rect x="3" y="9" width="10" height="6" stroke="#eee" stroke-width="1.2" fill="none"/><path d="M13 12 L17 9 V15 Z" fill="#eee"/></svg>
<svg style="left:1677px;top:358px" width="18" height="18" viewBox="0 0 18 18"><path d="M4 2 H14 L17 16 H1 Z M3 7 H15 M2 12 H16 M7 2 L6 16 M11 2 L12 16" stroke="#eee" stroke-width="1.2" fill="none"/></svg>
<svg style="left:1699px;top:186px" width="8" height="12" viewBox="0 0 8 12"><path d="M6 1 L1.5 6 L6 11" stroke="#888" stroke-width="1.2" fill="none"/></svg>

<div class="btn" style="left:1719px;top:122px;width:32px;height:20px;background:#282828;border:1px solid #2f2f2f"></div>
<svg style="left:1723px;top:124px" width="16" height="16" viewBox="0 0 16 16"><rect x="1" y="0.5" width="4" height="2.5" fill="#ddd"/><path d="M2.5 3 V13 H6 M2.5 8 H6" stroke="#ddd" stroke-width="1"/><rect x="6.5" y="6" width="7" height="3" fill="#ddd"/><rect x="6.5" y="11" width="7" height="3" fill="#ddd"/></svg>
<svg class="chev" style="left:1741px;top:131px" width="7" height="5" viewBox="0 0 7 5"><path d="M0.5 0.5 L3.5 3.5 L6.5 0.5" stroke="#ccc" stroke-width="1.2" fill="none"/></svg>
<div class="btn" style="left:1756px;top:122px;width:32px;height:20px;background:#282828;border:1px solid #2f2f2f"></div>
<svg style="left:1760px;top:124px" width="16" height="16" viewBox="0 0 16 16"><path d="M1 5 V14 H10 M3 3 V12 H12" stroke="#ddd" stroke-width="1" fill="none"/><rect x="5" y="1" width="9" height="9" stroke="#ddd" stroke-width="1.2" fill="none"/><path d="M6 9 L9 4 L12 9 Z" fill="#ddd"/><circle cx="11.5" cy="3.5" r="1" fill="#ddd"/></svg>
<svg class="chev" style="left:1778px;top:131px" width="7" height="5" viewBox="0 0 7 5"><path d="M0.5 0.5 L3.5 3.5 L6.5 0.5" stroke="#ccc" stroke-width="1.2" fill="none"/></svg>
<div class="btn" style="left:1804px;top:122px;width:130px;height:20px;background:#1d1d1d;border:1px solid #2f2f2f"></div>
<svg style="left:1808px;top:124px" width="16" height="16" viewBox="0 0 16 16"><circle cx="9.5" cy="6.5" r="5" stroke="#ddd" stroke-width="1.2" fill="none"/><path d="M6 10 L1.5 14.5" stroke="#ddd" stroke-width="1.2"/></svg>
<span class="t" style="left:1830px;top:127px;font-size:12px;color:#6e6e6e">Search</span>
<div class="a" style="left:1711px;top:167px;width:215px;height:20px;background:#2b2b2b"></div>
<div class="a" style="left:1711px;top:207px;width:215px;height:20px;background:#2b2b2b"></div>
<div class="a" style="left:1711px;top:247px;width:215px;height:20px;background:#2b2b2b"></div>
<div class="a" style="left:1711px;top:287px;width:215px;height:20px;background:#2b2b2b"></div>
<div class="a" style="left:1711px;top:327px;width:215px;height:20px;background:#2b2b2b"></div>
<svg style="left:1734px;top:150px" width="14" height="14" viewBox="0 0 14 14"><rect x="0" y="0" width="14" height="3" fill="#ddd"/><rect x="1" y="4" width="12" height="9" fill="#ddd"/><rect x="5" y="6" width="4" height="1.5" fill="#282828"/></svg>
<span class="ol" style="left:1755px;top:152px">Scene Collection</span>
<svg style="left:1736px;top:174px" width="10" height="7" viewBox="0 0 10 7"><path d="M1 1 L5 5 L9 1" stroke="#bbb" stroke-width="1.1" fill="none"/></svg>
<div class="a" style="left:1751px;top:167px;width:20px;height:19px;border-radius:4px;background:#454545;border:1px solid #5a5a5a"></div>
<svg style="left:1754px;top:170px" width="14" height="14" viewBox="0 0 14 14"><rect x="0" y="0" width="14" height="3" fill="#ddd"/><rect x="1" y="4" width="12" height="9" fill="#ddd"/><rect x="5" y="6" width="4" height="1.5" fill="#454545"/></svg>
<span class="ol" style="left:1775px;top:172px">Collection</span>
<div class="a" style="left:1878px;top:171px;width:10px;height:10px;background:#e8e8e8;border-radius:1px"></div>
<svg style="left:1879px;top:172px" width="8" height="8" viewBox="0 0 8 8"><path d="M1 4 L3 6 L7 1.5" stroke="#222" stroke-width="1.5" fill="none"/></svg>
<div class="a" style="left:1740px;top:191px;width:1px;height:156px;background:#555"></div>
<svg style="left:1896px;top:171px" width="14" height="10" viewBox="0 0 14 10"><path d="M0.8 5 Q7 -2 13.2 5 Q7 12 0.8 5 Z" stroke="#eee" stroke-width="1.3" fill="none"/><circle cx="7" cy="5" r="2.2" fill="#eee"/></svg>
<div class="a" style="left:1915px;top:171px;width:8px;height:10px;background:#ddd;border-radius:1px"></div>
<svg style="left:1759px;top:193px" width="6" height="9" viewBox="0 0 6 9"><path d="M1 0.8 L5 4.5 L1 8.2" stroke="#bbb" stroke-width="1.1" fill="none"/></svg>
<svg style="left:1774px;top:189px" width="14" height="15" viewBox="0 0 14 15"><path d="M1.4 1.4 H12.6 L7 13.6 Z" stroke="#d4894e" stroke-width="2.7" stroke-linejoin="round" fill="none"/></svg>
<span class="ol" style="left:1795px;top:192px">Plane.001</span>
<div class="a" style="left:1871px;top:189px;width:1.5px;height:4px;background:#20b090"></div>
<svg style="left:1896px;top:191px" width="14" height="10" viewBox="0 0 14 10"><path d="M0.8 5 Q7 -2 13.2 5 Q7 12 0.8 5 Z" stroke="#eee" stroke-width="1.3" fill="none"/><circle cx="7" cy="5" r="2.2" fill="#eee"/></svg>
<div class="a" style="left:1915px;top:191px;width:8px;height:10px;background:#ddd;border-radius:1px"></div>
<svg style="left:1759px;top:213px" width="6" height="9" viewBox="0 0 6 9"><path d="M1 0.8 L5 4.5 L1 8.2" stroke="#bbb" stroke-width="1.1" fill="none"/></svg>
<svg style="left:1774px;top:209px" width="14" height="15" viewBox="0 0 14 15"><path d="M1.4 1.4 H12.6 L7 13.6 Z" stroke="#d4894e" stroke-width="2.7" stroke-linejoin="round" fill="none"/></svg>
<span class="ol" style="left:1795px;top:212px">Plane.002</span>
<div class="a" style="left:1871px;top:209px;width:1.5px;height:4px;background:#20b090"></div>
<svg style="left:1896px;top:211px" width="14" height="10" viewBox="0 0 14 10"><path d="M0.8 5 Q7 -2 13.2 5 Q7 12 0.8 5 Z" stroke="#eee" stroke-width="1.3" fill="none"/><circle cx="7" cy="5" r="2.2" fill="#eee"/></svg>
<div class="a" style="left:1915px;top:211px;width:8px;height:10px;background:#ddd;border-radius:1px"></div>
<svg style="left:1759px;top:233px" width="6" height="9" viewBox="0 0 6 9"><path d="M1 0.8 L5 4.5 L1 8.2" stroke="#bbb" stroke-width="1.1" fill="none"/></svg>
<svg style="left:1774px;top:229px" width="14" height="15" viewBox="0 0 14 15"><path d="M1.4 1.4 H12.6 L7 13.6 Z" stroke="#d4894e" stroke-width="2.7" stroke-linejoin="round" fill="none"/></svg>
<span class="ol" style="left:1795px;top:232px">Plane.003</span>
<div class="a" style="left:1871px;top:229px;width:1.5px;height:4px;background:#20b090"></div>
<svg style="left:1896px;top:231px" width="14" height="10" viewBox="0 0 14 10"><path d="M0.8 5 Q7 -2 13.2 5 Q7 12 0.8 5 Z" stroke="#eee" stroke-width="1.3" fill="none"/><circle cx="7" cy="5" r="2.2" fill="#eee"/></svg>
<div class="a" style="left:1915px;top:231px;width:8px;height:10px;background:#ddd;border-radius:1px"></div>
<svg style="left:1759px;top:253px" width="6" height="9" viewBox="0 0 6 9"><path d="M1 0.8 L5 4.5 L1 8.2" stroke="#bbb" stroke-width="1.1" fill="none"/></svg>
<svg style="left:1774px;top:249px" width="14" height="15" viewBox="0 0 14 15"><path d="M1.4 1.4 H12.6 L7 13.6 Z" stroke="#d4894e" stroke-width="2.7" stroke-linejoin="round" fill="none"/></svg>
<span class="ol" style="left:1795px;top:252px">Plane.004</span>
<div class="a" style="left:1871px;top:249px;width:1.5px;height:4px;background:#20b090"></div>
<svg style="left:1896px;top:251px" width="14" height="10" viewBox="0 0 14 10"><path d="M0.8 5 Q7 -2 13.2 5 Q7 12 0.8 5 Z" stroke="#eee" stroke-width="1.3" fill="none"/><circle cx="7" cy="5" r="2.2" fill="#eee"/></svg>
<div class="a" style="left:1915px;top:251px;width:8px;height:10px;background:#ddd;border-radius:1px"></div>
<svg style="left:1759px;top:273px" width="6" height="9" viewBox="0 0 6 9"><path d="M1 0.8 L5 4.5 L1 8.2" stroke="#bbb" stroke-width="1.1" fill="none"/></svg>
<div class="a" style="left:1772px;top:268px;width:18px;height:18px;border-radius:4px;background:#4a4a4a;border:1px solid #5e5e5e"></div>
<svg style="left:1774px;top:269px" width="14" height="15" viewBox="0 0 14 15"><path d="M1.4 1.4 H12.6 L7 13.6 Z" stroke="#d4894e" stroke-width="2.7" stroke-linejoin="round" fill="none"/></svg>
<span class="ol" style="left:1795px;top:272px">Plane.005</span>
<div class="a" style="left:1871px;top:269px;width:1.5px;height:4px;background:#20b090"></div>
<svg style="left:1896px;top:271px" width="14" height="10" viewBox="0 0 14 10"><path d="M0.8 5 Q7 -2 13.2 5 Q7 12 0.8 5 Z" stroke="#eee" stroke-width="1.3" fill="none"/><circle cx="7" cy="5" r="2.2" fill="#eee"/></svg>
<div class="a" style="left:1915px;top:271px;width:8px;height:10px;background:#ddd;border-radius:1px"></div>
<svg style="left:1759px;top:293px" width="6" height="9" viewBox="0 0 6 9"><path d="M1 0.8 L5 4.5 L1 8.2" stroke="#bbb" stroke-width="1.1" fill="none"/></svg>
<svg style="left:1774px;top:289px" width="14" height="15" viewBox="0 0 14 15"><path d="M1.4 1.4 H12.6 L7 13.6 Z" stroke="#d4894e" stroke-width="2.7" stroke-linejoin="round" fill="none"/></svg>
<span class="ol" style="left:1795px;top:292px">Plane.006</span>
<div class="a" style="left:1871px;top:289px;width:1.5px;height:4px;background:#20b090"></div>
<svg style="left:1896px;top:291px" width="14" height="10" viewBox="0 0 14 10"><path d="M0.8 5 Q7 -2 13.2 5 Q7 12 0.8 5 Z" stroke="#eee" stroke-width="1.3" fill="none"/><circle cx="7" cy="5" r="2.2" fill="#eee"/></svg>
<div class="a" style="left:1915px;top:291px;width:8px;height:10px;background:#ddd;border-radius:1px"></div>
<svg style="left:1759px;top:313px" width="6" height="9" viewBox="0 0 6 9"><path d="M1 0.8 L5 4.5 L1 8.2" stroke="#bbb" stroke-width="1.1" fill="none"/></svg>
<svg style="left:1774px;top:309px" width="14" height="15" viewBox="0 0 14 15"><path d="M1.4 1.4 H12.6 L7 13.6 Z" stroke="#d4894e" stroke-width="2.7" stroke-linejoin="round" fill="none"/></svg>
<span class="ol" style="left:1795px;top:312px">Plane.007</span>
<div class="a" style="left:1871px;top:309px;width:1.5px;height:4px;background:#20b090"></div>
<svg style="left:1896px;top:311px" width="14" height="10" viewBox="0 0 14 10"><path d="M0.8 5 Q7 -2 13.2 5 Q7 12 0.8 5 Z" stroke="#eee" stroke-width="1.3" fill="none"/><circle cx="7" cy="5" r="2.2" fill="#eee"/></svg>
<div class="a" style="left:1915px;top:311px;width:8px;height:10px;background:#ddd;border-radius:1px"></div>
<svg style="left:1759px;top:333px" width="6" height="9" viewBox="0 0 6 9"><path d="M1 0.8 L5 4.5 L1 8.2" stroke="#bbb" stroke-width="1.1" fill="none"/></svg>
<svg style="left:1774px;top:329px" width="14" height="15" viewBox="0 0 14 15"><path d="M1.4 1.4 H12.6 L7 13.6 Z" stroke="#d4894e" stroke-width="2.7" stroke-linejoin="round" fill="none"/></svg>
<span class="ol" style="left:1795px;top:332px">Plane.008</span>
<div class="a" style="left:1871px;top:329px;width:1.5px;height:4px;background:#20b090"></div>
<svg style="left:1896px;top:331px" width="14" height="10" viewBox="0 0 14 10"><path d="M0.8 5 Q7 -2 13.2 5 Q7 12 0.8 5 Z" stroke="#eee" stroke-width="1.3" fill="none"/><circle cx="7" cy="5" r="2.2" fill="#eee"/></svg>
<div class="a" style="left:1915px;top:331px;width:8px;height:10px;background:#ddd;border-radius:1px"></div>
<div class="a" style="left:1719px;top:369px;width:210px;height:2px;background:#3a3a3a;border-radius:1px"></div>
<div class="a" style="left:1711px;top:376px;width:215px;height:25px;background:#2e2e2e;border-radius:6px 6px 0 0"></div>
<div class="btn" style="left:1719px;top:378px;width:32px;height:20px;background:#282828;border:1px solid #2f2f2f"></div>
<svg style="left:1723px;top:380px" width="16" height="16" viewBox="0 0 16 16"><rect x="1" y="2" width="13" height="5" rx="2.5" fill="#ddd"/><rect x="1" y="9" width="13" height="5" rx="2.5" fill="#ddd"/><circle cx="11" cy="4.5" r="1.8" fill="#282828"/><circle cx="4" cy="11.5" r="1.8" fill="#282828"/></svg>
<svg class="chev" style="left:1741px;top:387px" width="7" height="5" viewBox="0 0 7 5"><path d="M0.5 0.5 L3.5 3.5 L6.5 0.5" stroke="#ccc" stroke-width="1.2" fill="none"/></svg>
<div class="btn" style="left:1776px;top:378px;width:119px;height:20px;background:#1d1d1d;border:1px solid #2f2f2f"></div>
<svg style="left:1780px;top:380px" width="16" height="16" viewBox="0 0 16 16"><circle cx="9.5" cy="6.5" r="5" stroke="#ddd" stroke-width="1.2" fill="none"/><path d="M6 10 L1.5 14.5" stroke="#ddd" stroke-width="1.2"/></svg>
<span class="t" style="left:1802px;top:383px;font-size:12px;color:#6e6e6e">Search</span>
<div class="btn" style="left:1915px;top:378px;width:20px;height:20px;background:#1d1d1d;border:1px solid #2f2f2f"></div>
<div class="a" style="left:1711px;top:401px;width:28px;height:73px;background:#232323"></div>
<div class="a" style="left:1713px;top:630px;width:26px;height:27px;background:#303030;border-radius:4px 0 0 4px"></div>
<div class="a" style="left:1713px;top:474px;width:24px;height:1px;background:#2a2a2a"></div>
<div class="a" style="left:1713px;top:590px;width:24px;height:1px;background:#2a2a2a"></div>
<div class="a" style="left:1713px;top:625px;width:24px;height:1px;background:#2a2a2a"></div>
<div class="a" style="left:1713px;top:861px;width:24px;height:1px;background:#2a2a2a"></div>
<svg style="left:1717px;top:415px" width="16" height="16" viewBox="0 0 15 15"><path d="M3.5 1 V7" stroke="#ccc" stroke-width="1.3"/><ellipse cx="3.5" cy="10.5" rx="2.2" ry="3" fill="#ccc"/><path d="M11 14 V6.5" stroke="#ccc" stroke-width="2.2" stroke-linecap="round"/><path d="M8 1.5 Q7 6 11 7 Q15 6 14 1.5 L12.5 1.5 V4 H9.5 V1.5Z" fill="#ccc"/></svg>
<svg style="left:1717px;top:449px" width="16" height="16" viewBox="0 0 15 15"><rect x="1" y="4" width="13" height="10" rx="1" stroke="#ccc" stroke-width="1.3" fill="none"/><path d="M4 4 V2 H9 V4" stroke="#ccc" stroke-width="1.2" fill="none"/><path d="M3 7.5 H9 M3 10.5 H9" stroke="#ccc" stroke-width="1.2"/><rect x="10.5" y="6.5" width="2" height="2" fill="#ccc"/><rect x="10.5" y="10" width="2" height="2" fill="#ccc"/></svg>
<svg style="left:1717px;top:478px" width="16" height="16" viewBox="0 0 15 15"><rect x="1" y="1" width="13" height="4" fill="#ddd"/><rect x="3" y="6" width="9" height="8" fill="#ddd"/><path d="M4 13 L7 9 L10 13 Z" fill="#282828"/></svg>
<svg style="left:1717px;top:506px" width="16" height="16" viewBox="0 0 15 15"><path d="M1 5 V14 H10 M3 3 V12 H12" stroke="#ddd" stroke-width="1" fill="none"/><rect x="5" y="1" width="9" height="9" stroke="#ddd" stroke-width="1.2" fill="none"/><path d="M6 9 L9 4 L12 9 Z" fill="#ddd"/></svg>
<svg style="left:1717px;top:534px" width="16" height="16" viewBox="0 0 15 15"><path d="M5 1 Q1 7 1 9 A3.5 3.5 0 0 0 8 9 Q8 7 5 1 Z" fill="#ddd"/><circle cx="11" cy="3" r="2" fill="#ddd"/><circle cx="10" cy="10.5" r="3.5" stroke="#ddd" stroke-width="1.2" fill="#282828"/></svg>
<svg style="left:1717px;top:563px" width="16" height="16" viewBox="0 0 15 15"><circle cx="7.5" cy="7.5" r="5.8" stroke="#c05a60" stroke-width="1.4" fill="none"/><path d="M3.5 5 Q5.5 4 6.5 6 Q5 8 7 9.5 Q8 11.5 6.5 13 M9 2.5 Q8.5 4.5 10.5 5 Q12.5 5.5 13 7.5 M9.5 10 Q11 9 12.5 10.5" stroke="#c05a60" stroke-width="1.6" fill="none"/><path d="M1 14 L14 1" stroke="#c05a60" stroke-width="1.1"/></svg>
<svg style="left:1717px;top:599px" width="16" height="16" viewBox="0 0 15 15"><rect x="0.5" y="1" width="14" height="3" fill="#ddd"/><rect x="1.5" y="5" width="12" height="9" stroke="#ddd" stroke-width="1.3" fill="none"/><rect x="5" y="7" width="5" height="1.5" fill="#ddd"/></svg>
<svg style="left:1717px;top:635px" width="16" height="16" viewBox="0 0 15 15"><path d="M0.8 4 V0.8 H4 M11 0.8 H14.2 V4 M14.2 11 V14.2 H11 M4 14.2 H0.8 V11" stroke="#e8904a" stroke-width="1.3" fill="none"/><rect x="3" y="3" width="9" height="9" fill="#e8984e"/></svg>
<svg style="left:1717px;top:663px" width="16" height="16" viewBox="0 0 15 15"><path d="M1.5 13.5 L8 7" stroke="#5a8ee8" stroke-width="3" stroke-linecap="round"/><path d="M7 8 Q5.5 3.5 9 1.5 Q11 0.5 13 1 L10.5 3.5 L11.5 5.5 L13.5 6 L15 3.5 Q15.5 7 12.5 8.5 Q10 9.5 8 8Z" fill="#5a8ee8"/></svg>
<svg style="left:1717px;top:691px" width="16" height="16" viewBox="0 0 15 15"><circle cx="3" cy="3" r="2.5" fill="#5a8ee8"/><circle cx="13" cy="3" r="1.6" fill="#5a8ee8"/><circle cx="13" cy="12.5" r="1.8" fill="#5a8ee8"/><circle cx="3" cy="13" r="1.4" fill="#5a8ee8"/><path d="M3 3 V13 M3 3 H13 M3 3 L13 12.5" stroke="#5a8ee8" stroke-width="1.2"/></svg>
<svg style="left:1717px;top:719px" width="16" height="16" viewBox="0 0 15 15"><path d="M12.5 6 A6 6 0 1 1 9 2.2" stroke="#5a8ee8" stroke-width="1.3" fill="none"/><circle cx="7.5" cy="8" r="2.8" fill="#5a8ee8"/><circle cx="12" cy="2.8" r="2" fill="#5a8ee8"/></svg>
<svg style="left:1717px;top:747px" width="16" height="16" viewBox="0 0 15 15"><path d="M3 13.5 Q0 10.5 2 7 L8 1.5 Q11.5 -0.5 13.5 2 Q15.5 4.5 13 8 L8 13.5 Q5.5 15.5 3 13.5Z" stroke="#5a8ee8" stroke-width="1.2" fill="none"/><circle cx="6.5" cy="9" r="3" stroke="#5a8ee8" stroke-width="1.2" fill="none"/><circle cx="6.5" cy="9" r="1.3" fill="#5a8ee8"/><circle cx="11" cy="4" r="1" fill="#5a8ee8"/></svg>
<svg style="left:1717px;top:775px" width="16" height="16" viewBox="0 0 15 15"><path d="M2.5 2.5 H12.5 L7.5 12.5 Z" stroke="#20c090" stroke-width="1.3" fill="none"/><rect x="0.8" y="0.8" width="3.4" height="3.4" fill="#1f1f1f" stroke="#20c090" stroke-width="1.2"/><rect x="10.8" y="0.8" width="3.4" height="3.4" fill="#1f1f1f" stroke="#20c090" stroke-width="1.2"/><rect x="5.8" y="10.8" width="3.4" height="3.4" fill="#1f1f1f" stroke="#20c090" stroke-width="1.2"/></svg>
<svg style="left:1717px;top:803px" width="16" height="16" viewBox="0 0 15 15"><circle cx="7.5" cy="7.5" r="7" fill="#c05a60"/><path d="M7.5 7.5 V0.5 A7 7 0 0 1 14.5 7.5 Z" fill="#1f1f1f"/><path d="M7.5 7.5 H0.5 A7 7 0 0 0 7.5 14.5 Z" fill="#1f1f1f"/><path d="M7.5 7.5 L1 11 A7 7 0 0 0 7.5 14.5 Z" fill="#c05a60" opacity="0"/></svg>
<svg style="left:1717px;top:839px" width="16" height="16" viewBox="0 0 15 15"><rect x="1" y="0.5" width="12" height="14" fill="#c06070"/><path d="M4 1.5 H6.5 V4 H4Z M10 1.5 H12.5 V4 H10Z M1.5 4.5 H4 V7 H1.5Z M7 4.5 H9.5 V7 H7Z M4 7.5 H6.5 V10 H4Z M10 7.5 H12.5 V10 H10Z M1.5 10.5 H4 V13 H1.5Z M7 10.5 H9.5 V13 H7Z" fill="#141414"/></svg>
<svg style="left:1750px;top:412px" width="15" height="15" viewBox="0 0 15 15"><path d="M1 4 V1 H4 M11 1 H14 V4 M14 11 V14 H11 M4 14 H1 V11" stroke="#ddd" stroke-width="1.2" fill="none"/><rect x="3.5" y="3.5" width="8" height="8" fill="#ddd"/></svg>
<span class="pl" style="left:1773px;top:414px">Plane.005</span>
<div class="a" style="left:1748px;top:446px;width:180px;height:18px;background:#1d1d1d;border-radius:4px;border:1px solid #2a2a2a"></div>
<div class="a" style="left:1749px;top:447px;width:29px;height:16px;background:#282828;border-radius:3px 0 0 3px"></div>
<svg style="left:1752px;top:448px" width="15" height="15" viewBox="0 0 15 15"><path d="M1 4 V1 H4 M11 1 H14 V4 M14 11 V14 H11 M4 14 H1 V11" stroke="#ddd" stroke-width="1.2" fill="none"/><rect x="3.5" y="3.5" width="8" height="8" fill="#ddd"/></svg>
<svg class="chev" style="left:1769px;top:453px" width="7" height="5" viewBox="0 0 7 5"><path d="M0.5 0.5 L3.5 3.5 L6.5 0.5" stroke="#ccc" stroke-width="1.2" fill="none"/></svg>
<span class="pl" style="left:1786px;top:450px">Plane.005</span>
<div class="a" style="left:1747px;top:475px;width:180px;height:281px;background:#3a3a3a;border-radius:5px"></div>
<svg style="left:1755px;top:485px" width="10" height="7" viewBox="0 0 10 7"><path d="M1 1 L5 5 L9 1" stroke="#bbb" stroke-width="1.1" fill="none"/></svg>
<span class="pl" style="left:1769px;top:482px;color:#e6e6e6">Transform</span>
<div class="nf" style="left:1821px;top:509px;width:65px;border-radius:3px 3px 0 0;letter-spacing:0.6px;line-height:21px">-0.047</div>
<span class="pl" style="left:1610px;width:200px;text-align:right;top:513px">Locatio...</span>
<svg style="left:1889px;top:512px" width="16" height="14" viewBox="0 0 16 14"><path d="M1.5 5 A3.6 3.6 0 0 1 8.7 4.8 V6.5" stroke="#bbb" stroke-width="1" fill="none"/><rect x="6.5" y="6.5" width="8" height="5.5" stroke="#bbb" stroke-width="1" fill="none"/><rect x="10" y="8.5" width="1" height="1.5" fill="#bbb"/></svg>
<div class="a" style="left:1914px;top:516px;width:5px;height:5px;border-radius:3px;background:#ddd"></div>
<div class="nf" style="left:1821px;top:528px;width:65px;border-radius:0;letter-spacing:0.6px;line-height:21px">-0.070</div>
<div class="a" style="left:1821px;top:528px;width:65px;height:1px;background:#3c3c3c"></div>
<span class="pl" style="left:1610px;width:200px;text-align:right;top:532px">Y</span>
<svg style="left:1889px;top:531px" width="16" height="14" viewBox="0 0 16 14"><path d="M1.5 5 A3.6 3.6 0 0 1 8.7 4.8 V6.5" stroke="#bbb" stroke-width="1" fill="none"/><rect x="6.5" y="6.5" width="8" height="5.5" stroke="#bbb" stroke-width="1" fill="none"/><rect x="10" y="8.5" width="1" height="1.5" fill="#bbb"/></svg>
<div class="a" style="left:1914px;top:535px;width:5px;height:5px;border-radius:3px;background:#ddd"></div>
<div class="nf" style="left:1821px;top:547px;width:65px;border-radius:0 0 3px 3px;letter-spacing:0.6px;line-height:21px">0.4766</div>
<div class="a" style="left:1821px;top:547px;width:65px;height:1px;background:#3c3c3c"></div>
<span class="pl" style="left:1610px;width:200px;text-align:right;top:551px">Z</span>
<svg style="left:1889px;top:550px" width="16" height="14" viewBox="0 0 16 14"><path d="M1.5 5 A3.6 3.6 0 0 1 8.7 4.8 V6.5" stroke="#bbb" stroke-width="1" fill="none"/><rect x="6.5" y="6.5" width="8" height="5.5" stroke="#bbb" stroke-width="1" fill="none"/><rect x="10" y="8.5" width="1" height="1.5" fill="#bbb"/></svg>
<div class="a" style="left:1914px;top:554px;width:5px;height:5px;border-radius:3px;background:#ddd"></div>
<div class="nf" style="left:1821px;top:574px;width:65px;border-radius:3px 3px 0 0;letter-spacing:0.6px;line-height:21px">89.78°</div>
<span class="pl" style="left:1610px;width:200px;text-align:right;top:578px">Rotation X</span>
<svg style="left:1889px;top:577px" width="16" height="14" viewBox="0 0 16 14"><path d="M1.5 5 A3.6 3.6 0 0 1 8.7 4.8 V6.5" stroke="#bbb" stroke-width="1" fill="none"/><rect x="6.5" y="6.5" width="8" height="5.5" stroke="#bbb" stroke-width="1" fill="none"/><rect x="10" y="8.5" width="1" height="1.5" fill="#bbb"/></svg>
<div class="a" style="left:1914px;top:581px;width:5px;height:5px;border-radius:3px;background:#ddd"></div>
<div class="nf" style="left:1821px;top:593px;width:65px;border-radius:0;letter-spacing:0.6px;line-height:21px">-185.2</div>
<div class="a" style="left:1821px;top:593px;width:65px;height:1px;background:#3c3c3c"></div>
<span class="pl" style="left:1610px;width:200px;text-align:right;top:597px">Y</span>
<svg style="left:1889px;top:596px" width="16" height="14" viewBox="0 0 16 14"><path d="M1.5 5 A3.6 3.6 0 0 1 8.7 4.8 V6.5" stroke="#bbb" stroke-width="1" fill="none"/><rect x="6.5" y="6.5" width="8" height="5.5" stroke="#bbb" stroke-width="1" fill="none"/><rect x="10" y="8.5" width="1" height="1.5" fill="#bbb"/></svg>
<div class="a" style="left:1914px;top:600px;width:5px;height:5px;border-radius:3px;background:#ddd"></div>
<div class="nf" style="left:1821px;top:612px;width:65px;border-radius:0 0 3px 3px;letter-spacing:0.6px;line-height:21px">177.6°</div>
<div class="a" style="left:1821px;top:612px;width:65px;height:1px;background:#3c3c3c"></div>
<span class="pl" style="left:1610px;width:200px;text-align:right;top:616px">Z</span>
<svg style="left:1889px;top:615px" width="16" height="14" viewBox="0 0 16 14"><path d="M1.5 5 A3.6 3.6 0 0 1 8.7 4.8 V6.5" stroke="#bbb" stroke-width="1" fill="none"/><rect x="6.5" y="6.5" width="8" height="5.5" stroke="#bbb" stroke-width="1" fill="none"/><rect x="10" y="8.5" width="1" height="1.5" fill="#bbb"/></svg>
<div class="a" style="left:1914px;top:619px;width:5px;height:5px;border-radius:3px;background:#ddd"></div>
<div class="a" style="left:1821px;top:639px;width:65px;height:18px;background:#282828;border-radius:4px"></div>
<span class="pl" style="left:1828px;top:643px">XYZ E...</span>
<svg class="chev" style="left:1875px;top:646px" width="7" height="5" viewBox="0 0 7 5"><path d="M0.5 0.5 L3.5 3.5 L6.5 0.5" stroke="#ccc" stroke-width="1.2" fill="none"/></svg>
<span class="pl" style="left:1610px;width:200px;text-align:right;top:643px">Mode</span>
<div class="a" style="left:1914px;top:646px;width:5px;height:5px;border-radius:3px;background:#ddd"></div>
<div class="nf" style="left:1821px;top:664px;width:65px;border-radius:3px 3px 0 0;letter-spacing:0.6px;line-height:21px">0.057</div>
<span class="pl" style="left:1610px;width:200px;text-align:right;top:668px">Scale X</span>
<svg style="left:1889px;top:667px" width="16" height="14" viewBox="0 0 16 14"><path d="M1.5 5 A3.6 3.6 0 0 1 8.7 4.8 V6.5" stroke="#bbb" stroke-width="1" fill="none"/><rect x="6.5" y="6.5" width="8" height="5.5" stroke="#bbb" stroke-width="1" fill="none"/><rect x="10" y="8.5" width="1" height="1.5" fill="#bbb"/></svg>
<div class="a" style="left:1914px;top:671px;width:5px;height:5px;border-radius:3px;background:#ddd"></div>
<div class="nf" style="left:1821px;top:683px;width:65px;border-radius:0;letter-spacing:0.6px;line-height:21px">0.600</div>
<div class="a" style="left:1821px;top:683px;width:65px;height:1px;background:#3c3c3c"></div>
<span class="pl" style="left:1610px;width:200px;text-align:right;top:687px">Y</span>
<svg style="left:1889px;top:686px" width="16" height="14" viewBox="0 0 16 14"><path d="M1.5 5 A3.6 3.6 0 0 1 8.7 4.8 V6.5" stroke="#bbb" stroke-width="1" fill="none"/><rect x="6.5" y="6.5" width="8" height="5.5" stroke="#bbb" stroke-width="1" fill="none"/><rect x="10" y="8.5" width="1" height="1.5" fill="#bbb"/></svg>
<div class="a" style="left:1914px;top:690px;width:5px;height:5px;border-radius:3px;background:#ddd"></div>
<div class="nf" style="left:1821px;top:703px;width:65px;border-radius:0 0 3px 3px;letter-spacing:0.6px;line-height:21px">1.427</div>
<div class="a" style="left:1821px;top:703px;width:65px;height:1px;background:#3c3c3c"></div>
<span class="pl" style="left:1610px;width:200px;text-align:right;top:707px">Z</span>
<svg style="left:1889px;top:706px" width="16" height="14" viewBox="0 0 16 14"><path d="M1.5 5 A3.6 3.6 0 0 1 8.7 4.8 V6.5" stroke="#bbb" stroke-width="1" fill="none"/><rect x="6.5" y="6.5" width="8" height="5.5" stroke="#bbb" stroke-width="1" fill="none"/><rect x="10" y="8.5" width="1" height="1.5" fill="#bbb"/></svg>
<div class="a" style="left:1914px;top:710px;width:5px;height:5px;border-radius:3px;background:#ddd"></div>
<svg style="left:1771px;top:739px" width="6" height="10" viewBox="0 0 6 10"><path d="M1 1 L5 5 L1 9" stroke="#bbb" stroke-width="1.1" fill="none"/></svg>
<span class="pl" style="left:1783px;top:738px">Delta Transform</span>
<div class="a" style="left:0;top:0;width:1920px;height:907px;overflow:hidden">
<div class="a" style="left:1747px;top:758px;width:180px;height:25px;background:#3a3a3a;border-radius:5px"></div>
<svg style="left:1757px;top:766px" width="6" height="10" viewBox="0 0 6 10"><path d="M1 1 L5 5 L1 9" stroke="#bbb" stroke-width="1.1" fill="none"/></svg>
<span class="pl" style="left:1769px;top:765px">Relations</span>
<div class="a" style="left:1747px;top:785px;width:180px;height:25px;background:#3a3a3a;border-radius:5px"></div>
<svg style="left:1757px;top:793px" width="6" height="10" viewBox="0 0 6 10"><path d="M1 1 L5 5 L1 9" stroke="#bbb" stroke-width="1.1" fill="none"/></svg>
<span class="pl" style="left:1769px;top:792px">Collections</span>
<div class="a" style="left:1747px;top:812px;width:180px;height:25px;background:#3a3a3a;border-radius:5px"></div>
<svg style="left:1757px;top:820px" width="6" height="10" viewBox="0 0 6 10"><path d="M1 1 L5 5 L1 9" stroke="#bbb" stroke-width="1.1" fill="none"/></svg>
<span class="pl" style="left:1769px;top:819px">Instancing</span>
<div class="a" style="left:1747px;top:839px;width:180px;height:25px;background:#3a3a3a;border-radius:5px"></div>
<svg style="left:1757px;top:847px" width="6" height="10" viewBox="0 0 6 10"><path d="M1 1 L5 5 L1 9" stroke="#bbb" stroke-width="1.1" fill="none"/></svg>
<span class="pl" style="left:1769px;top:846px">Motion Paths</span>
<div class="a" style="left:1747px;top:866px;width:180px;height:25px;background:#3a3a3a;border-radius:5px"></div>
<svg style="left:1757px;top:874px" width="6" height="10" viewBox="0 0 6 10"><path d="M1 1 L5 5 L1 9" stroke="#bbb" stroke-width="1.1" fill="none"/></svg>
<span class="pl" style="left:1769px;top:873px">Visibility</span>
<div class="a" style="left:1747px;top:893px;width:180px;height:14px;background:#3a3a3a;border-radius:5px 5px 0 0"></div>
<svg style="left:1757px;top:901px" width="6" height="10" viewBox="0 0 6 10"><path d="M1 1 L5 5 L1 9" stroke="#bbb" stroke-width="1.1" fill="none"/></svg>
<span class="pl" style="left:1769px;top:900px">Viewport Display</span>
</div>
<div class="btn" style="left:610px;top:852px;width:32px;height:19px;background:#282828;border:1px solid #2f2f2f"></div>
<svg style="left:614px;top:854px" width="15" height="15" viewBox="0 0 15 15"><circle cx="7.5" cy="7.5" r="6.5" fill="#eee"/><path d="M9 3.5 L5.5 7.5 L9 11.5" stroke="#282828" stroke-width="2" fill="none"/></svg>
<svg class="chev" style="left:632px;top:860px" width="7" height="5" viewBox="0 0 7 5"><path d="M0.5 0.5 L3.5 3.5 L6.5 0.5" stroke="#ccc" stroke-width="1.2" fill="none"/></svg>
<div class="btn" style="left:647px;top:852px;width:133px;height:19px;background:#282828;border:1px solid #2f2f2f"></div>
<div class="a" style="left:718px;top:853px;width:1px;height:17px;background:#2f2f2f"></div>
<span class="t bt" style="left:655px;top:856px">Playback</span>
<svg class="chev" style="left:708px;top:860px" width="7" height="5" viewBox="0 0 7 5"><path d="M0.5 0.5 L3.5 3.5 L6.5 0.5" stroke="#ccc" stroke-width="1.2" fill="none"/></svg>
<span class="t bt" style="left:726px;top:856px">Keying</span>
<svg class="chev" style="left:769px;top:860px" width="7" height="5" viewBox="0 0 7 5"><path d="M0.5 0.5 L3.5 3.5 L6.5 0.5" stroke="#ccc" stroke-width="1.2" fill="none"/></svg>
<span class="t bt" style="left:789px;top:856px">View</span>
<span class="t bt" style="left:830px;top:856px">Marker</span>
<div class="a" style="left:1063px;top:852px;width:39px;height:19px;background:#282828;border-radius:4px"></div>
<div class="a" style="left:1063px;top:852px;width:18px;height:19px;background:#545454;border-radius:4px 0 0 4px"></div>
<svg style="left:1065px;top:854px" width="14" height="14" viewBox="0 0 14 14"><circle cx="7" cy="7" r="4.5" stroke="#ddd" stroke-width="1.1" fill="none"/></svg>
<svg class="chev" style="left:1088px;top:860px" width="7" height="5" viewBox="0 0 7 5"><path d="M0.5 0.5 L3.5 3.5 L6.5 0.5" stroke="#666" stroke-width="1.1" fill="none"/></svg>
<div class="a" style="left:1108px;top:852px;width:118px;height:19px;background:#545454;border-radius:4px"></div>
<div class="a" style="left:1126px;top:852px;width:1px;height:18px;background:#474747"></div>
<div class="a" style="left:1146px;top:852px;width:1px;height:18px;background:#474747"></div>
<div class="a" style="left:1166px;top:852px;width:1px;height:18px;background:#474747"></div>
<div class="a" style="left:1186px;top:852px;width:1px;height:18px;background:#474747"></div>
<div class="a" style="left:1206px;top:852px;width:1px;height:18px;background:#474747"></div>
<svg style="left:0;top:0" width="1920" height="960" viewBox="0 0 1920 960"><g fill="#e6e6e6"><rect x="1111.7" y="856" width="1.9" height="10.5"/><path d="M1115 861 L1121 856.5 V865.5Z"/><path d="M1129 861 L1133.5 856 L1138 861 L1133.5 866Z"/><path d="M1139 861 L1144 857 V865Z"/><path d="M1152 861 L1162 855 V867Z"/><path d="M1172 855 L1182 861 L1172 867Z"/><path d="M1190 857 L1195 861 L1190 865Z"/><path d="M1196 861 L1200.5 856 L1205 861 L1200.5 866Z"/><path d="M1213 856.5 L1219 861 L1213 865.5Z"/><rect x="1220.2" y="856" width="1.9" height="10.5"/></g></svg>
<div class="nf" style="left:1427px;top:852px;width:73px;height:18px;line-height:18px;border-radius:4px">1</div>
<div class="a" style="left:1507px;top:852px;width:193px;height:18px;background:#545454;border-radius:4px"></div>
<div class="a" style="left:1525px;top:852px;width:1px;height:18px;background:#4a4a4a"></div>
<div class="a" style="left:1614px;top:852px;width:1px;height:18px;background:#4a4a4a"></div>
<svg style="left:1509px;top:853px" width="15" height="16" viewBox="0 0 15 16"><circle cx="7" cy="9" r="5.5" stroke="#ddd" stroke-width="1.1" fill="none"/><path d="M7 5.5 V9 H10 M5 1.5 H9 M7 1.5 V3.5 M12 4 L13.5 2.5" stroke="#ddd" stroke-width="1.1" fill="none"/></svg>
<span class="t bt" style="left:1541px;top:856px">Start</span>
<span class="t bt" style="left:1593px;top:856px">1</span>
<span class="t bt" style="left:1630px;top:856px">End</span>
<span class="t bt" style="left:1666px;top:856px">250</span>
<span class="tn" style="left:691.1px;width:60px;text-align:center">20</span>
<span class="tn" style="left:773.3px;width:60px;text-align:center">40</span>
<span class="tn" style="left:855.5px;width:60px;text-align:center">60</span>
<span class="tn" style="left:937.7px;width:60px;text-align:center">80</span>
<span class="tn" style="left:1019.9px;width:60px;text-align:center">100</span>
<span class="tn" style="left:1102.1px;width:60px;text-align:center">120</span>
<span class="tn" style="left:1184.3px;width:60px;text-align:center">140</span>
<span class="tn" style="left:1266.5px;width:60px;text-align:center">160</span>
<span class="tn" style="left:1348.7px;width:60px;text-align:center">180</span>
<span class="tn" style="left:1430.9px;width:60px;text-align:center">200</span>
<span class="tn" style="left:1513.1px;width:60px;text-align:center">220</span>
<span class="tn" style="left:1595.3px;width:60px;text-align:center">240</span>
<div class="a" style="left:680.0px;top:896px;width:1px;height:11px;background:#262626"></div>
<div class="a" style="left:721.1px;top:896px;width:1px;height:11px;background:#262626"></div>
<div class="a" style="left:762.2px;top:896px;width:1px;height:11px;background:#262626"></div>
<div class="a" style="left:803.3px;top:896px;width:1px;height:11px;background:#262626"></div>
<div class="a" style="left:844.4px;top:896px;width:1px;height:11px;background:#262626"></div>
<div class="a" style="left:885.5px;top:896px;width:1px;height:11px;background:#262626"></div>
<div class="a" style="left:926.6px;top:896px;width:1px;height:11px;background:#262626"></div>
<div class="a" style="left:967.7px;top:896px;width:1px;height:11px;background:#262626"></div>
<div class="a" style="left:1008.8px;top:896px;width:1px;height:11px;background:#262626"></div>
<div class="a" style="left:1049.9px;top:896px;width:1px;height:11px;background:#262626"></div>
<div class="a" style="left:1091.0px;top:896px;width:1px;height:11px;background:#262626"></div>
<div class="a" style="left:1132.1px;top:896px;width:1px;height:11px;background:#262626"></div>
<div class="a" style="left:1173.2px;top:896px;width:1px;height:11px;background:#262626"></div>
<div class="a" style="left:1214.3px;top:896px;width:1px;height:11px;background:#262626"></div>
<div class="a" style="left:1255.4px;top:896px;width:1px;height:11px;background:#262626"></div>
<div class="a" style="left:1296.5px;top:896px;width:1px;height:11px;background:#262626"></div>
<div class="a" style="left:1337.6px;top:896px;width:1px;height:11px;background:#262626"></div>
<div class="a" style="left:1378.7px;top:896px;width:1px;height:11px;background:#262626"></div>
<div class="a" style="left:1419.8px;top:896px;width:1px;height:11px;background:#262626"></div>
<div class="a" style="left:1460.9px;top:896px;width:1px;height:11px;background:#262626"></div>
<div class="a" style="left:1502.0px;top:896px;width:1px;height:11px;background:#262626"></div>
<div class="a" style="left:1543.1px;top:896px;width:1px;height:11px;background:#262626"></div>
<div class="a" style="left:1584.2px;top:896px;width:1px;height:11px;background:#262626"></div>
<div class="a" style="left:1625.3px;top:896px;width:1px;height:11px;background:#262626"></div>
<div class="a" style="left:1666.4px;top:896px;width:1px;height:11px;background:#262626"></div>
<div class="a" style="left:642px;top:892px;width:2px;height:15px;background:#4772b3"></div>
<div class="a" style="left:611px;top:897px;width:1090px;height:8px;background:#505050;border-radius:4px;opacity:0.92"></div>
<div class="a" style="left:611px;top:897px;width:8px;height:8px;background:#2a2a2a;border-radius:4px;border:1px solid #3a3a3a"></div>
<div class="a" style="left:1692px;top:897px;width:8px;height:8px;background:#2e2e2e;border-radius:4px;border:1px solid #444"></div>
<div class="a" style="left:631px;top:876px;width:24px;height:17px;background:#4772b3;border-radius:4px"></div>
<span class="t" style="left:631px;width:24px;text-align:center;top:879px;font-size:12px;color:#fff">1</span>
<svg style="left:603px;top:890px" width="6" height="10" viewBox="0 0 6 10"><path d="M1 1 L5 5 L1 9" stroke="#999" stroke-width="1.1" fill="none"/></svg>
<svg style="left:1703px;top:887px" width="6" height="10" viewBox="0 0 6 10"><path d="M5 1 L1 5 L5 9" stroke="#999" stroke-width="1.1" fill="none"/></svg>
<svg style="left:614px;top:910px" width="12" height="16" viewBox="0 0 12 16"><rect x="0.7" y="0.7" width="10.6" height="14.6" rx="3" stroke="#ccc" stroke-width="1.2" fill="none"/><rect x="1.5" y="1.5" width="4" height="6" fill="#ccc"/></svg>
<span class="t" style="left:631px;top:912px;font-size:12px;color:#b8b8b8">Select</span>
<svg style="left:825px;top:910px" width="12" height="16" viewBox="0 0 12 16"><rect x="0.7" y="0.7" width="10.6" height="14.6" rx="3" stroke="#ccc" stroke-width="1.2" fill="none"/><rect x="4.5" y="2" width="3" height="5" fill="#ccc"/></svg>
<span class="t" style="left:842px;top:912px;font-size:12px;color:#b8b8b8">Rotate View</span>
<svg style="left:1036px;top:910px" width="12" height="16" viewBox="0 0 12 16"><rect x="0.7" y="0.7" width="10.6" height="14.6" rx="3" stroke="#ccc" stroke-width="1.2" fill="none"/><rect x="6.5" y="1.5" width="4" height="6" fill="#ccc"/></svg>
<span class="t" style="left:1053px;top:912px;font-size:12px;color:#b8b8b8">Object</span>
<svg style="left:1877px;top:910px" width="18" height="17" viewBox="0 0 18 17"><circle cx="7" cy="7.5" r="6.5" stroke="#ccc" stroke-width="1" fill="none"/><ellipse cx="7" cy="7.5" rx="2.5" ry="6.5" stroke="#ccc" stroke-width="1" fill="none"/><path d="M0.5 7.5 H13.5 M1.5 4 H12.5 M1.5 11 H12.5" stroke="#ccc" stroke-width="1"/><text x="13" y="16.5" font-size="8" fill="#ccc" font-family="Liberation Sans">1</text></svg>
<span class="t" style="left:1897px;top:912px;font-size:12px;color:#b8b8b8">| 4.2</span>
</body></html>
